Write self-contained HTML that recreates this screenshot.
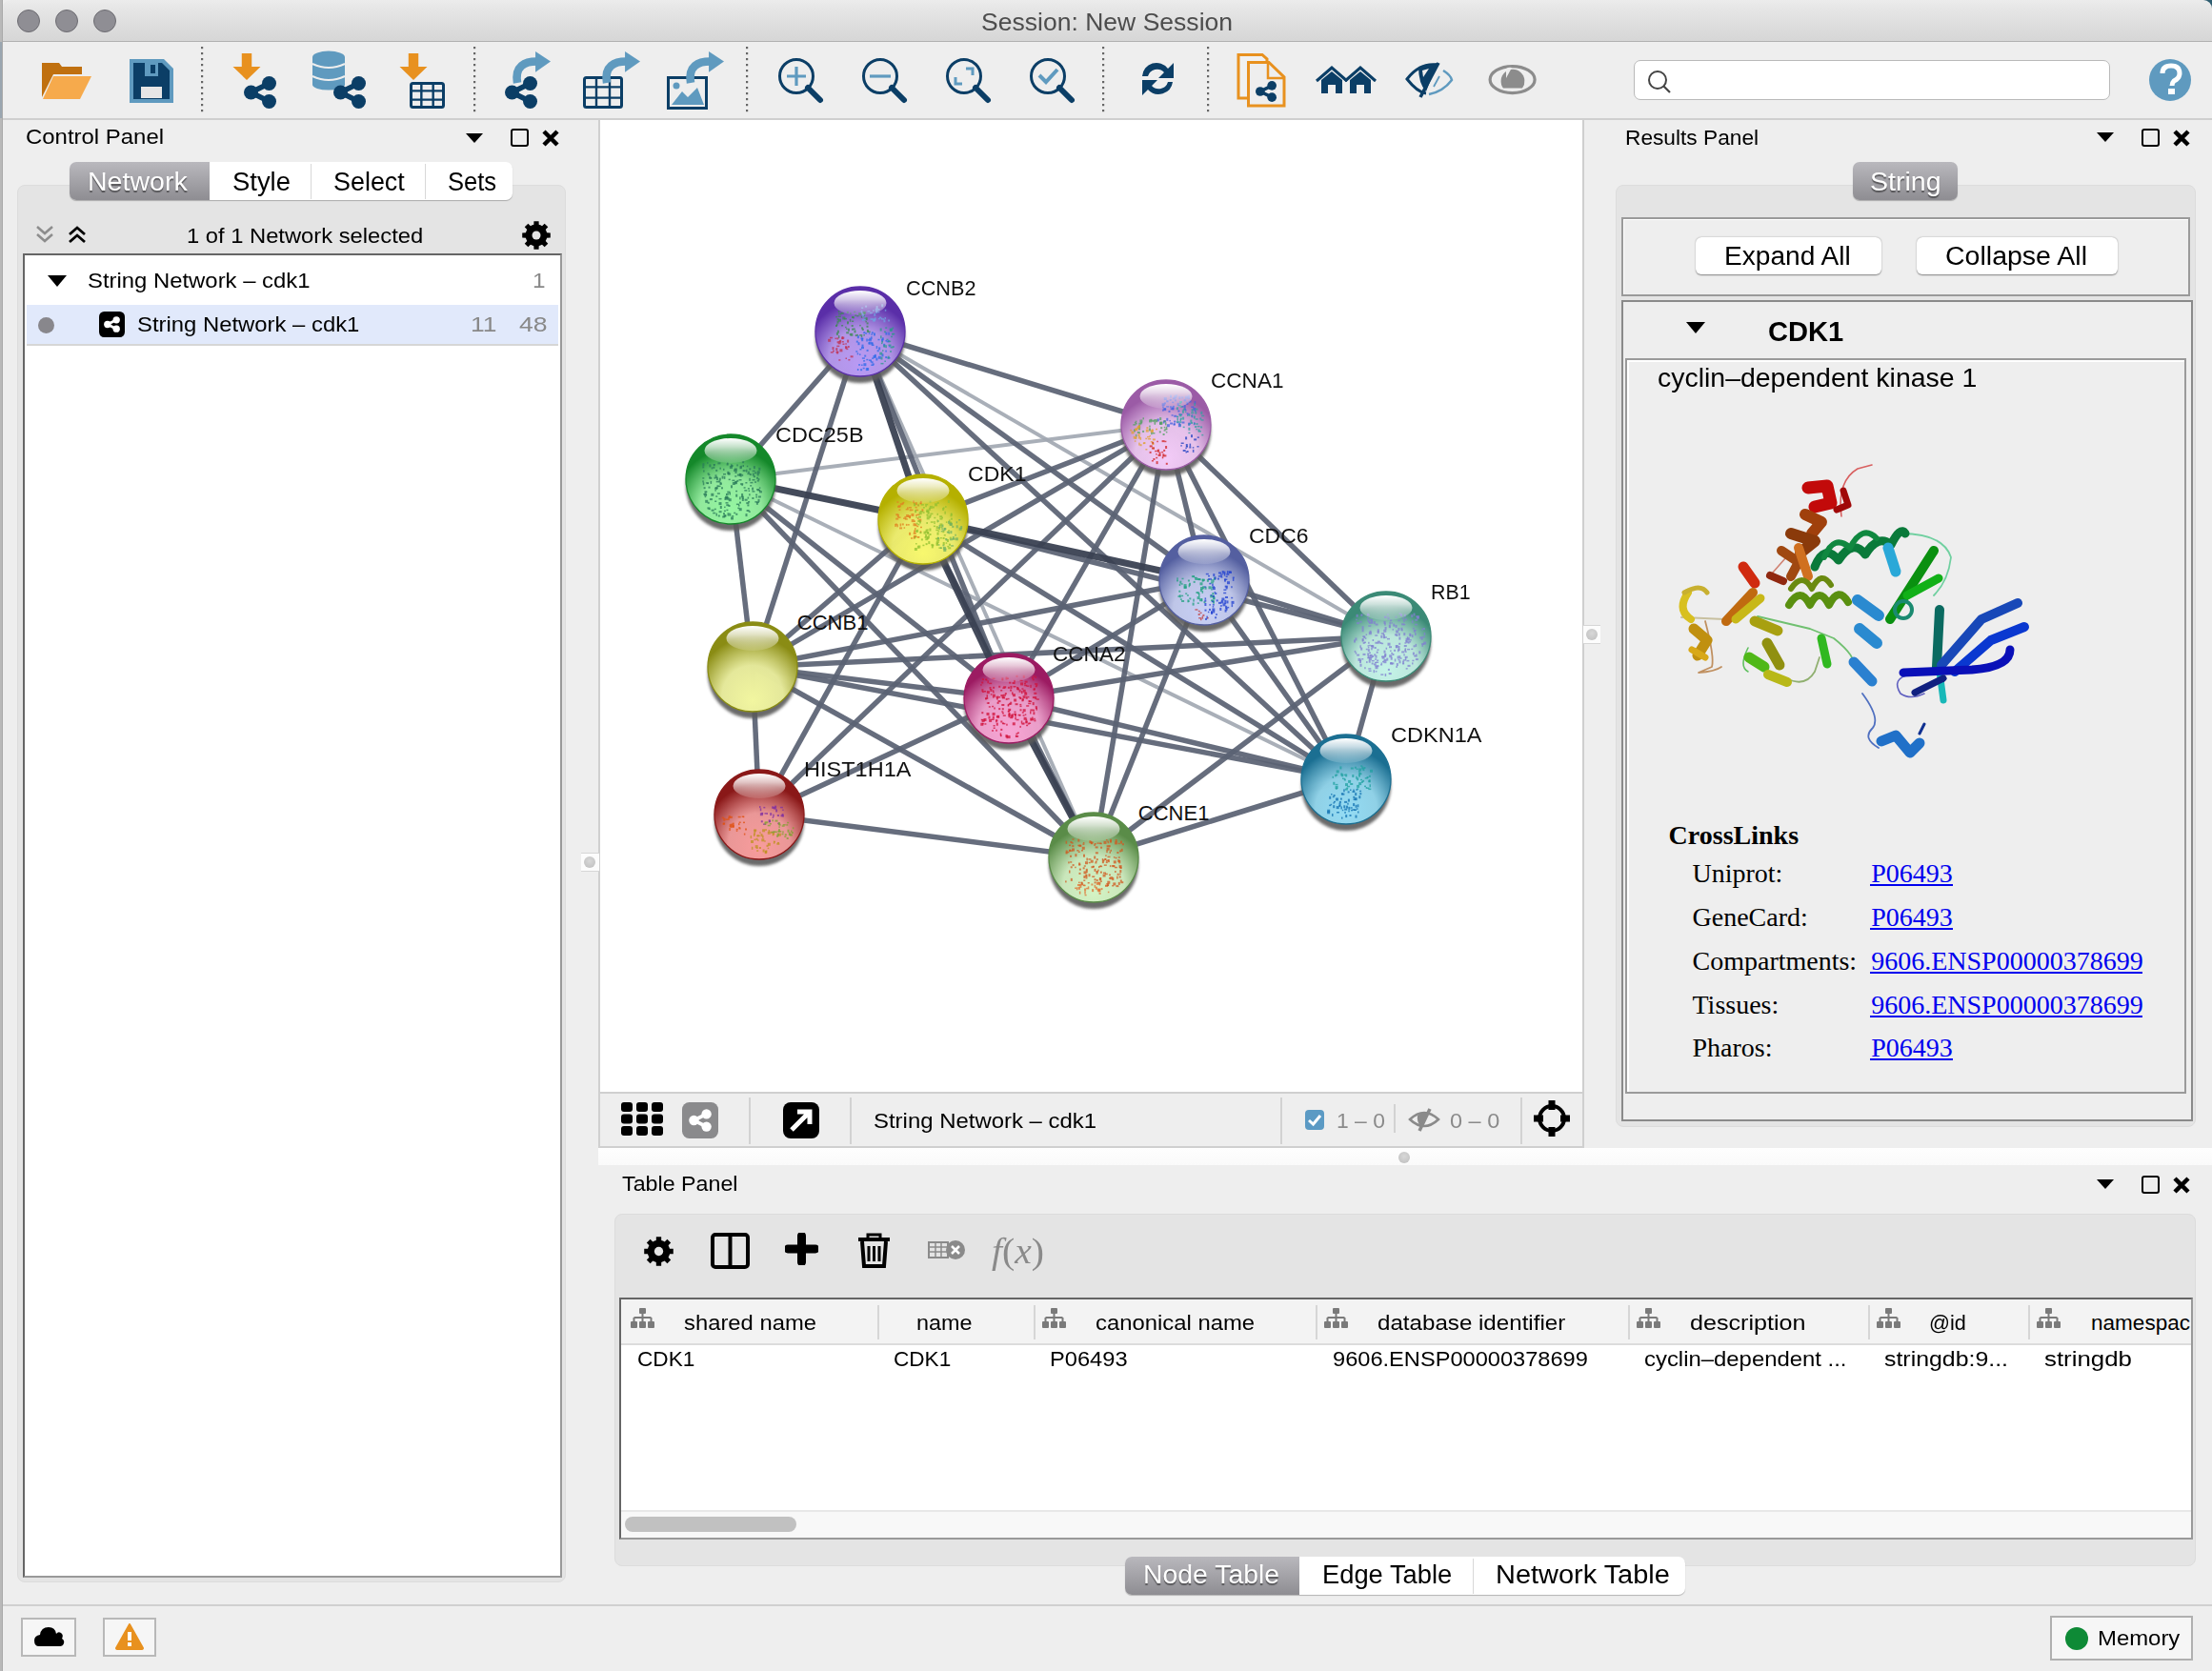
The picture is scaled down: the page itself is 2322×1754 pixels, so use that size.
<!DOCTYPE html><html><head><meta charset="utf-8"><style>
html,body{margin:0;padding:0;}
body{width:2322px;height:1754px;overflow:hidden;background:#eeeeee;position:relative;font-family:"Liberation Sans",sans-serif;}
.t{position:absolute;white-space:nowrap;line-height:normal;}
.r{position:absolute;box-sizing:border-box;}
</style></head><body><div class="r" style="left:0px;top:0px;width:2322px;height:1754px;background:#eeeeee;"></div><div class="r" style="left:0px;top:0px;width:2px;height:1754px;background:#b9b9b9;"></div><div class="r" style="left:0px;top:44px;width:2px;height:80px;background:#9aa6b0;"></div><div class="r" style="left:2px;top:0px;width:1px;height:1754px;background:#a9a9a9;"></div><div class="r" style="left:2290px;top:0px;width:32px;height:20px;background:#2e5d70;"></div><div class="r" style="left:2px;top:0px;width:2320px;height:44px;background:linear-gradient(#ececec,#e6e6e6 20%,#d6d6d6);border-radius:9px 9px 0 0;border-bottom:1px solid #b0b0b0;"></div><div class="r" style="left:2px;top:0px;width:1px;height:1754px;background:#a9a9a9;"></div><div class="r" style="left:18px;top:10px;width:24px;height:24px;border-radius:50%;background:#8f8e94;border:1px solid #6d6c72;"></div><div class="r" style="left:58px;top:10px;width:24px;height:24px;border-radius:50%;background:#8f8e94;border:1px solid #6d6c72;"></div><div class="r" style="left:98px;top:10px;width:24px;height:24px;border-radius:50%;background:#8f8e94;border:1px solid #6d6c72;"></div><div class="t " style="left:1029.90px;top:8.10px;font-size:26.3px;transform:scaleX(1.0092);transform-origin:0 0;color:#4d4d4d;font-family:'Liberation Sans',sans-serif;">Session: New Session</div><div class="r" style="left:3px;top:44px;width:2319px;height:82px;background:#eeeeee;border-bottom:2px solid #cfcfcf;"></div><svg class="r" style="left:0px;top:0px;" width="2322" height="125" viewBox="0 0 2322 125"><path d="M44 66h18l3 4h21v8H56l-12 24Z" fill="#c0700f"/><path d="M56 80H96L84 104H45Z" fill="#f6aa4c"/><path d="M136 62H172L182 72V108H136Z" fill="#5f9abf"/><path d="M140 66H170L178 74V104H140Z" fill="#0b3e66"/><rect x="148" y="91" width="22" height="12" fill="#e6e6e6"/><rect x="152" y="66" width="14" height="14" fill="#5f9abf"/><rect x="158" y="68" width="5" height="9" fill="#0b3e66"/><rect x="211" y="49" width="2.2" height="2.2" fill="#666"/><rect x="211" y="55" width="2.2" height="2.2" fill="#666"/><rect x="211" y="61" width="2.2" height="2.2" fill="#666"/><rect x="211" y="67" width="2.2" height="2.2" fill="#666"/><rect x="211" y="73" width="2.2" height="2.2" fill="#666"/><rect x="211" y="79" width="2.2" height="2.2" fill="#666"/><rect x="211" y="85" width="2.2" height="2.2" fill="#666"/><rect x="211" y="91" width="2.2" height="2.2" fill="#666"/><rect x="211" y="97" width="2.2" height="2.2" fill="#666"/><rect x="211" y="103" width="2.2" height="2.2" fill="#666"/><rect x="211" y="109" width="2.2" height="2.2" fill="#666"/><rect x="211" y="115" width="2.2" height="2.2" fill="#666"/><rect x="497" y="49" width="2.2" height="2.2" fill="#666"/><rect x="497" y="55" width="2.2" height="2.2" fill="#666"/><rect x="497" y="61" width="2.2" height="2.2" fill="#666"/><rect x="497" y="67" width="2.2" height="2.2" fill="#666"/><rect x="497" y="73" width="2.2" height="2.2" fill="#666"/><rect x="497" y="79" width="2.2" height="2.2" fill="#666"/><rect x="497" y="85" width="2.2" height="2.2" fill="#666"/><rect x="497" y="91" width="2.2" height="2.2" fill="#666"/><rect x="497" y="97" width="2.2" height="2.2" fill="#666"/><rect x="497" y="103" width="2.2" height="2.2" fill="#666"/><rect x="497" y="109" width="2.2" height="2.2" fill="#666"/><rect x="497" y="115" width="2.2" height="2.2" fill="#666"/><rect x="783" y="49" width="2.2" height="2.2" fill="#666"/><rect x="783" y="55" width="2.2" height="2.2" fill="#666"/><rect x="783" y="61" width="2.2" height="2.2" fill="#666"/><rect x="783" y="67" width="2.2" height="2.2" fill="#666"/><rect x="783" y="73" width="2.2" height="2.2" fill="#666"/><rect x="783" y="79" width="2.2" height="2.2" fill="#666"/><rect x="783" y="85" width="2.2" height="2.2" fill="#666"/><rect x="783" y="91" width="2.2" height="2.2" fill="#666"/><rect x="783" y="97" width="2.2" height="2.2" fill="#666"/><rect x="783" y="103" width="2.2" height="2.2" fill="#666"/><rect x="783" y="109" width="2.2" height="2.2" fill="#666"/><rect x="783" y="115" width="2.2" height="2.2" fill="#666"/><rect x="1157" y="49" width="2.2" height="2.2" fill="#666"/><rect x="1157" y="55" width="2.2" height="2.2" fill="#666"/><rect x="1157" y="61" width="2.2" height="2.2" fill="#666"/><rect x="1157" y="67" width="2.2" height="2.2" fill="#666"/><rect x="1157" y="73" width="2.2" height="2.2" fill="#666"/><rect x="1157" y="79" width="2.2" height="2.2" fill="#666"/><rect x="1157" y="85" width="2.2" height="2.2" fill="#666"/><rect x="1157" y="91" width="2.2" height="2.2" fill="#666"/><rect x="1157" y="97" width="2.2" height="2.2" fill="#666"/><rect x="1157" y="103" width="2.2" height="2.2" fill="#666"/><rect x="1157" y="109" width="2.2" height="2.2" fill="#666"/><rect x="1157" y="115" width="2.2" height="2.2" fill="#666"/><rect x="1267" y="49" width="2.2" height="2.2" fill="#666"/><rect x="1267" y="55" width="2.2" height="2.2" fill="#666"/><rect x="1267" y="61" width="2.2" height="2.2" fill="#666"/><rect x="1267" y="67" width="2.2" height="2.2" fill="#666"/><rect x="1267" y="73" width="2.2" height="2.2" fill="#666"/><rect x="1267" y="79" width="2.2" height="2.2" fill="#666"/><rect x="1267" y="85" width="2.2" height="2.2" fill="#666"/><rect x="1267" y="91" width="2.2" height="2.2" fill="#666"/><rect x="1267" y="97" width="2.2" height="2.2" fill="#666"/><rect x="1267" y="103" width="2.2" height="2.2" fill="#666"/><rect x="1267" y="109" width="2.2" height="2.2" fill="#666"/><rect x="1267" y="115" width="2.2" height="2.2" fill="#666"/><path d="M253.78 56H264.22V70.0H273.5L259 84L244.5 70.0H253.78Z" fill="#e8911f"/><g fill="#0b3e66" stroke="#0b3e66"><line x1="263.48" y1="97" x2="282.52" y2="87.48" stroke-width="5.44"/><line x1="263.48" y1="97" x2="282.52" y2="106.52" stroke-width="5.44"/><circle cx="263.48" cy="97" r="7.48" stroke="none"/><circle cx="282.52" cy="87.48" r="7.48" stroke="none"/><circle cx="282.52" cy="106.52" r="7.48" stroke="none"/></g><rect x="328" y="60" width="34" height="29" fill="#5f9abf"/><ellipse cx="345" cy="60" rx="17" ry="6.5" fill="#5f9abf"/><ellipse cx="345" cy="89" rx="17" ry="5.5" fill="#5f9abf"/><path d="M328 67Q345 75 362 67M328 80Q345 88 362 80" fill="none" stroke="#eeeeee" stroke-width="2.2"/><g fill="#0b3e66" stroke="#0b3e66"><line x1="357.48" y1="97" x2="376.52" y2="87.48" stroke-width="5.44"/><line x1="357.48" y1="97" x2="376.52" y2="106.52" stroke-width="5.44"/><circle cx="357.48" cy="97" r="7.48" stroke="none"/><circle cx="376.52" cy="87.48" r="7.48" stroke="none"/><circle cx="376.52" cy="106.52" r="7.48" stroke="none"/></g><path d="M428.78 56H439.22V70.0H448.5L434 84L419.5 70.0H428.78Z" fill="#e8911f"/><rect x="431.5" y="87.5" width="34" height="25" rx="2" fill="none" stroke="#0b3e66" stroke-width="3"/><line x1="442.3333333333333" y1="86" x2="442.3333333333333" y2="114" stroke="#0b3e66" stroke-width="2.4000000000000004"/><line x1="454.6666666666667" y1="86" x2="454.6666666666667" y2="114" stroke="#0b3e66" stroke-width="2.4000000000000004"/><line x1="430" y1="95.33333333333333" x2="467" y2="95.33333333333333" stroke="#0b3e66" stroke-width="2.4000000000000004"/><line x1="430" y1="104.66666666666667" x2="467" y2="104.66666666666667" stroke="#0b3e66" stroke-width="2.4000000000000004"/><path d="M543.04 87 C540.0 68.85 551.4 64.56 563.56 64.56" fill="none" stroke="#5f9abf" stroke-width="8.58"/><path d="M562.04 54 L578 64.56 L562.04 75.78Z" fill="#5f9abf"/><g fill="#0b3e66" stroke="#0b3e66"><line x1="537.48" y1="97" x2="556.52" y2="87.48" stroke-width="5.44"/><line x1="537.48" y1="97" x2="556.52" y2="106.52" stroke-width="5.44"/><circle cx="537.48" cy="97" r="7.48" stroke="none"/><circle cx="556.52" cy="87.48" r="7.48" stroke="none"/><circle cx="556.52" cy="106.52" r="7.48" stroke="none"/></g><rect x="613.5" y="81.5" width="39" height="31" rx="2" fill="none" stroke="#0b3e66" stroke-width="3"/><line x1="626.0" y1="80" x2="626.0" y2="114" stroke="#0b3e66" stroke-width="2.4000000000000004"/><line x1="640.0" y1="80" x2="640.0" y2="114" stroke="#0b3e66" stroke-width="2.4000000000000004"/><line x1="612" y1="91.33333333333333" x2="654" y2="91.33333333333333" stroke="#0b3e66" stroke-width="2.4000000000000004"/><line x1="612" y1="102.66666666666667" x2="654" y2="102.66666666666667" stroke="#0b3e66" stroke-width="2.4000000000000004"/><path d="M637.04 87 C634.0 68.85 645.4 64.56 657.56 64.56" fill="none" stroke="#5f9abf" stroke-width="8.58"/><path d="M656.04 54 L672 64.56 L656.04 75.78Z" fill="#5f9abf"/><rect x="701.5" y="81.5" width="40" height="32" fill="none" stroke="#0b3e66" stroke-width="3"/><path d="M705 110L716 96L722 102L732 92L739 110Z" fill="#5f9abf"/><circle cx="710" cy="90" r="3.5" fill="#5f9abf"/><path d="M725.04 87 C722.0 68.85 733.4 64.56 745.56 64.56" fill="none" stroke="#5f9abf" stroke-width="8.58"/><path d="M744.04 54 L760 64.56 L744.04 75.78Z" fill="#5f9abf"/><circle cx="836" cy="80" r="17.5" fill="none" stroke="#0b3e66" stroke-width="3"/><line x1="848" y1="92" x2="861" y2="105" stroke="#0b3e66" stroke-width="6" stroke-linecap="round"/><path d="M836 70V90M826 80H846" stroke="#5f9abf" stroke-width="3.2"/><circle cx="924" cy="80" r="17.5" fill="none" stroke="#0b3e66" stroke-width="3"/><line x1="936" y1="92" x2="949" y2="105" stroke="#0b3e66" stroke-width="6" stroke-linecap="round"/><path d="M913 80H935" stroke="#5f9abf" stroke-width="3.2"/><circle cx="1012" cy="80" r="17.5" fill="none" stroke="#0b3e66" stroke-width="3"/><line x1="1024" y1="92" x2="1037" y2="105" stroke="#0b3e66" stroke-width="6" stroke-linecap="round"/><path d="M1003 81V88H1010M1014 72H1021V79" fill="none" stroke="#5f9abf" stroke-width="3"/><circle cx="1100" cy="80" r="17.5" fill="none" stroke="#0b3e66" stroke-width="3"/><line x1="1112" y1="92" x2="1125" y2="105" stroke="#0b3e66" stroke-width="6" stroke-linecap="round"/><path d="M1091 79L1098 86L1110 73" fill="none" stroke="#5f9abf" stroke-width="4"/><path d="M1199 100V84H1215L1209 90A10 10 0 0 0 1226 86L1231 86A15 15 0 0 1 1205 94Z" fill="#0b3e66"/><path d="M1232 66V82H1216L1222 76A10 10 0 0 0 1205 80L1199 80A15 15 0 0 1 1226 72Z" fill="#0b3e66"/><path d="M1300 57.5H1325L1330 62V103H1300Z" fill="#f1f1f1" stroke="#e8911f" stroke-width="3"/><path d="M1310.5 65.5H1332L1348 81V111H1310.5Z" fill="#eeeeee" stroke="#e8911f" stroke-width="3"/><path d="M1331 65V82H1348" fill="none" stroke="#e8911f" stroke-width="2.5"/><g fill="#0b3e66" stroke="#0b3e66"><line x1="1322.84" y1="96" x2="1335.16" y2="89.84" stroke-width="3.52"/><line x1="1322.84" y1="96" x2="1335.16" y2="102.16" stroke-width="3.52"/><circle cx="1322.84" cy="96" r="4.84" stroke="none"/><circle cx="1335.16" cy="89.84" r="4.84" stroke="none"/><circle cx="1335.16" cy="102.16" r="4.84" stroke="none"/></g><path d="M1382 85L1398 71L1414 85" fill="none" stroke="#0b3e66" stroke-width="3"/><path d="M1387 84L1398 75L1409 84V98H1402V89H1394V98H1387Z" fill="#0b3e66"/><path d="M1412 85L1428 71L1444 85" fill="none" stroke="#0b3e66" stroke-width="3"/><path d="M1417 84L1428 75L1439 84V98H1432V89H1424V98H1417Z" fill="#0b3e66"/><path d="M1508 68Q1490 66 1477 83Q1488 97 1497 98" fill="none" stroke="#0b3e66" stroke-width="3"/><path d="M1489 70L1509 66L1497 96Q1489 88 1489 70Z" fill="#0b3e66"/><path d="M1510 66L1491 102" stroke="#0b3e66" stroke-width="3.5"/><path d="M1493 74L1500 72L1494 81Z" fill="#eee"/><path d="M1515 74Q1523 79 1524 84Q1515 96 1500 99" fill="none" stroke="#5f9abf" stroke-width="2.5"/><path d="M1511 80L1505 91" stroke="#5f9abf" stroke-width="1.8"/><ellipse cx="1587.6" cy="83.6" rx="23.5" ry="14" fill="none" stroke="#8c8c8c" stroke-width="3.2"/><path d="M1578 92.5A12.4 12.4 0 1 1 1598 92.5Z" fill="#8c8c8c"/><path d="M1581 72Q1584 70 1587 71L1581 82Z" fill="#eee"/><circle cx="2278" cy="84" r="22" fill="#5f9abf"/><path d="M2270 77Q2270 69 2279 69Q2288 69 2288 77Q2288 82 2282 85Q2280 87 2280 90" fill="none" stroke="#fff" stroke-width="5"/><rect x="2276" y="93" width="7" height="6" fill="#fff"/></svg><div class="r" style="left:1715px;top:63px;width:500px;height:42px;background:#fff;border:1.5px solid #b9b9b9;border-radius:7px;"></div><svg class="r" style="left:1728px;top:72px;" width="30" height="30" viewBox="0 0 30 30"><circle cx="12" cy="12" r="9" fill="none" stroke="#444" stroke-width="2"/><line x1="18.5" y1="18.5" x2="25" y2="25" stroke="#444" stroke-width="2.2"/></svg><div class="t " style="left:27.20px;top:131.45px;font-size:22.6px;transform:scaleX(1.0595);transform-origin:0 0;color:#000;font-family:'Liberation Sans',sans-serif;">Control Panel</div><svg class="r" style="left:489px;top:140px;" width="18" height="10" viewBox="0 0 18 10"><path d="M0 0H18L9 10Z" fill="#000"/></svg><div class="r" style="left:536px;top:135px;width:19px;height:19px;border:2px solid #000;border-radius:3px;"></div><svg class="r" style="left:569px;top:136px;" width="18" height="18" viewBox="0 0 18 18"><path d="M2 2L16 16M16 2L2 16" stroke="#000" stroke-width="4.5"/></svg><div class="r" style="left:18px;top:194px;width:576px;height:1467px;background:#e4e4e4;border-radius:8px;border:1px solid #dcdcdc;"></div><div class="r" style="left:73px;top:170px;width:465px;height:40px;background:#fff;border-radius:7px;box-shadow:0 1px 1px rgba(0,0,0,0.25);"></div><div class="r" style="left:73px;top:170px;width:147px;height:40px;background:linear-gradient(#b9b8bd,#8e8d92);border-radius:7px 0 0 7px;"></div><div class="r" style="left:326px;top:172px;width:1px;height:37px;background:#d8d8d8;"></div><div class="r" style="left:446px;top:172px;width:1px;height:37px;background:#d8d8d8;"></div><div class="t " style="left:92.40px;top:175.76px;font-size:27px;transform:scaleX(1.0572);transform-origin:0 0;color:#fff;font-family:'Liberation Sans',sans-serif;text-shadow:0 1.5px 1px rgba(0,0,0,0.45);">Network</div><div class="t " style="left:243.50px;top:175.76px;font-size:27px;transform:scaleX(1.0154);transform-origin:0 0;color:#000;font-family:'Liberation Sans',sans-serif;">Style</div><div class="t " style="left:349.60px;top:175.76px;font-size:27px;transform:scaleX(0.9965);transform-origin:0 0;color:#000;font-family:'Liberation Sans',sans-serif;">Select</div><div class="t " style="left:469.60px;top:175.76px;font-size:27px;transform:scaleX(0.9463);transform-origin:0 0;color:#000;font-family:'Liberation Sans',sans-serif;">Sets</div><svg class="r" style="left:36px;top:235px;" width="22" height="22" viewBox="0 0 22 22"><path d="M3 3L11 10L19 3M3 11L11 18L19 11" fill="none" stroke="#8d8d8d" stroke-width="2.5"/></svg><svg class="r" style="left:70px;top:235px;" width="22" height="22" viewBox="0 0 22 22"><path d="M3 11L11 4L19 11M3 19L11 12L19 19" fill="none" stroke="#000" stroke-width="2.8"/></svg><div class="t " style="left:195.60px;top:233.57px;font-size:22.8px;transform:scaleX(1.0417);transform-origin:0 0;color:#000;font-family:'Liberation Sans',sans-serif;">1 of 1 Network selected</div><svg class="r" style="left:548px;top:232px;" width="30" height="30" viewBox="0 0 30 30"><path d="M25.47 12.34 L29.78 12.42 L29.78 17.58 L25.47 17.66 L24.28 20.53 L27.27 23.63 L23.63 27.27 L20.53 24.28 L17.66 25.47 L17.58 29.78 L12.42 29.78 L12.34 25.47 L9.47 24.28 L6.37 27.27 L2.73 23.63 L5.72 20.53 L4.53 17.66 L0.22 17.58 L0.22 12.42 L4.53 12.34 L5.72 9.47 L2.73 6.37 L6.37 2.73 L9.47 5.72 L12.34 4.53 L12.42 0.22 L17.58 0.22 L17.66 4.53 L20.53 5.72 L23.63 2.73 L27.27 6.37 L24.28 9.47Z" fill="#000"/><circle cx="15.0" cy="15.0" r="11.4" fill="#000"/><circle cx="15.0" cy="15.0" r="4.5" fill="#e4e4e4"/></svg><div class="r" style="left:24px;top:266px;width:566px;height:1390px;background:#fff;border:2px solid #656565;border-bottom-color:#999;border-right-color:#999;"></div><div class="t " style="left:91.70px;top:281.55px;font-size:22.6px;transform:scaleX(1.0564);transform-origin:0 0;color:#000;font-family:'Liberation Sans',sans-serif;">String Network – cdk1</div><svg class="r" style="left:50px;top:289px;" width="20" height="12" viewBox="0 0 20 12"><path d="M0 0H20L10 12Z" fill="#000"/></svg><div class="t " style="left:559.40px;top:281.55px;font-size:22.6px;transform:scaleX(1.0763);transform-origin:0 0;color:#888;font-family:'Liberation Sans',sans-serif;">1</div><div class="r" style="left:28px;top:320px;width:558px;height:43px;background:#e1e9fb;border-bottom:2px solid #d6d6d6;"></div><div class="r" style="left:40px;top:333px;width:17px;height:17px;border-radius:50%;background:#88878c;"></div><svg class="r" style="left:104px;top:327px;" width="27" height="27" viewBox="0 0 27 27"><rect width="27" height="27" rx="5.4" fill="#000"/><g fill="#fff" stroke="#fff"><line x1="8.812800000000001" y1="13.5" x2="18.187199999999997" y2="8.812800000000001" stroke-width="2.6784"/><line x1="8.812800000000001" y1="13.5" x2="18.187199999999997" y2="18.187199999999997" stroke-width="2.6784"/><circle cx="8.812800000000001" cy="13.5" r="3.6828" stroke="none"/><circle cx="18.187199999999997" cy="8.812800000000001" r="3.6828" stroke="none"/><circle cx="18.187199999999997" cy="18.187199999999997" r="3.6828" stroke="none"/></g></svg><div class="t " style="left:143.70px;top:327.85px;font-size:22.6px;transform:scaleX(1.0560);transform-origin:0 0;color:#000;font-family:'Liberation Sans',sans-serif;">String Network – cdk1</div><div class="t " style="left:494.30px;top:327.85px;font-size:22.6px;transform:scaleX(1.1700);transform-origin:0 0;color:#888;font-family:'Liberation Sans',sans-serif;">11</div><div class="t " style="left:544.80px;top:327.85px;font-size:22.6px;transform:scaleX(1.1760);transform-origin:0 0;color:#888;font-family:'Liberation Sans',sans-serif;">48</div><div class="r" style="left:628px;top:126px;width:2px;height:1080px;background:#d0d0d0;"></div><div class="r" style="left:610px;top:895px;width:19px;height:20px;background:#fcfcfc;border-top:1px solid #d6d6d6;border-bottom:1px solid #d6d6d6;"></div><div class="r" style="left:613px;top:899px;width:12px;height:12px;border-radius:50%;background:radial-gradient(circle at 50% 40%,#d8d8d8,#bdbdbd);"></div><div class="r" style="left:630px;top:126px;width:1031px;height:1021px;background:#fff;"></div><svg class="r" style="left:0px;top:0px;pointer-events:none;" width="2322" height="1754" viewBox="0 0 2322 1754"><defs><radialGradient id="gB2" cx="50%" cy="78%" r="62%" fx="50%" fy="88%"><stop offset="0" stop-color="#b99af4"/><stop offset="0.55" stop-color="#b99af4" stop-opacity="0.9"/><stop offset="1" stop-color="#5a2ea8"/></radialGradient><radialGradient id="gA1" cx="50%" cy="78%" r="62%" fx="50%" fy="88%"><stop offset="0" stop-color="#f3cbf8"/><stop offset="0.55" stop-color="#f3cbf8" stop-opacity="0.9"/><stop offset="1" stop-color="#9b5ba6"/></radialGradient><radialGradient id="gC25" cx="50%" cy="78%" r="62%" fx="50%" fy="88%"><stop offset="0" stop-color="#96f7a2"/><stop offset="0.55" stop-color="#96f7a2" stop-opacity="0.9"/><stop offset="1" stop-color="#14882a"/></radialGradient><radialGradient id="gK1" cx="50%" cy="78%" r="62%" fx="50%" fy="88%"><stop offset="0" stop-color="#f8f86e"/><stop offset="0.55" stop-color="#f8f86e" stop-opacity="0.9"/><stop offset="1" stop-color="#b5b000"/></radialGradient><radialGradient id="gC6" cx="50%" cy="78%" r="62%" fx="50%" fy="88%"><stop offset="0" stop-color="#c8d0f6"/><stop offset="0.55" stop-color="#c8d0f6" stop-opacity="0.9"/><stop offset="1" stop-color="#545fa0"/></radialGradient><radialGradient id="gRB" cx="50%" cy="78%" r="62%" fx="50%" fy="88%"><stop offset="0" stop-color="#c4f4e8"/><stop offset="0.55" stop-color="#c4f4e8" stop-opacity="0.9"/><stop offset="1" stop-color="#3b8a76"/></radialGradient><radialGradient id="gB1" cx="50%" cy="78%" r="62%" fx="50%" fy="88%"><stop offset="0" stop-color="#f2f6a0"/><stop offset="0.55" stop-color="#f2f6a0" stop-opacity="0.9"/><stop offset="1" stop-color="#8a8c14"/></radialGradient><radialGradient id="gA2" cx="50%" cy="78%" r="62%" fx="50%" fy="88%"><stop offset="0" stop-color="#f8a4d4"/><stop offset="0.55" stop-color="#f8a4d4" stop-opacity="0.9"/><stop offset="1" stop-color="#9c1b62"/></radialGradient><radialGradient id="gP21" cx="50%" cy="78%" r="62%" fx="50%" fy="88%"><stop offset="0" stop-color="#94dcf4"/><stop offset="0.55" stop-color="#94dcf4" stop-opacity="0.9"/><stop offset="1" stop-color="#1b6f92"/></radialGradient><radialGradient id="gH1" cx="50%" cy="78%" r="62%" fx="50%" fy="88%"><stop offset="0" stop-color="#f89c9c"/><stop offset="0.55" stop-color="#f89c9c" stop-opacity="0.9"/><stop offset="1" stop-color="#8a1818"/></radialGradient><radialGradient id="gE1" cx="50%" cy="78%" r="62%" fx="50%" fy="88%"><stop offset="0" stop-color="#d4f4c4"/><stop offset="0.55" stop-color="#d4f4c4" stop-opacity="0.9"/><stop offset="1" stop-color="#5a8c48"/></radialGradient><linearGradient id="hl" x1="0" y1="0" x2="0" y2="1"><stop offset="0" stop-color="#fff" stop-opacity="1"/><stop offset="0.35" stop-color="#fff" stop-opacity="0.75"/><stop offset="1" stop-color="#fff" stop-opacity="0.1"/></linearGradient><filter id="blur" x="-20%" y="-20%" width="140%" height="140%"><feGaussianBlur stdDeviation="1.5"/></filter></defs><line x1="903" y1="348" x2="1455" y2="668" stroke="#a0a6b0" stroke-width="4" stroke-opacity="0.9"/><line x1="903" y1="348" x2="1148" y2="900" stroke="#a0a6b0" stroke-width="4" stroke-opacity="0.9"/><line x1="1224" y1="446" x2="767" y2="503" stroke="#a0a6b0" stroke-width="4" stroke-opacity="0.9"/><line x1="767" y1="503" x2="1413" y2="818" stroke="#a0a6b0" stroke-width="4" stroke-opacity="0.9"/><line x1="903" y1="348" x2="1224" y2="446" stroke="#5a6273" stroke-width="5.5" stroke-opacity="0.93"/><line x1="903" y1="348" x2="767" y2="503" stroke="#5a6273" stroke-width="5.5" stroke-opacity="0.93"/><line x1="903" y1="348" x2="1264" y2="609" stroke="#5a6273" stroke-width="5.5" stroke-opacity="0.93"/><line x1="903" y1="348" x2="790" y2="700" stroke="#5a6273" stroke-width="5.5" stroke-opacity="0.93"/><line x1="903" y1="348" x2="1059" y2="733" stroke="#5a6273" stroke-width="5.5" stroke-opacity="0.93"/><line x1="903" y1="348" x2="1413" y2="818" stroke="#5a6273" stroke-width="5.5" stroke-opacity="0.93"/><line x1="1224" y1="446" x2="969" y2="545" stroke="#5a6273" stroke-width="5.5" stroke-opacity="0.93"/><line x1="1224" y1="446" x2="1264" y2="609" stroke="#5a6273" stroke-width="5.5" stroke-opacity="0.93"/><line x1="1224" y1="446" x2="1455" y2="668" stroke="#5a6273" stroke-width="5.5" stroke-opacity="0.93"/><line x1="1224" y1="446" x2="790" y2="700" stroke="#5a6273" stroke-width="5.5" stroke-opacity="0.93"/><line x1="1224" y1="446" x2="1059" y2="733" stroke="#5a6273" stroke-width="5.5" stroke-opacity="0.93"/><line x1="1224" y1="446" x2="1413" y2="818" stroke="#5a6273" stroke-width="5.5" stroke-opacity="0.93"/><line x1="1224" y1="446" x2="797" y2="855" stroke="#5a6273" stroke-width="5.5" stroke-opacity="0.93"/><line x1="1224" y1="446" x2="1148" y2="900" stroke="#5a6273" stroke-width="5.5" stroke-opacity="0.93"/><line x1="767" y1="503" x2="790" y2="700" stroke="#5a6273" stroke-width="5.5" stroke-opacity="0.93"/><line x1="767" y1="503" x2="1059" y2="733" stroke="#5a6273" stroke-width="5.5" stroke-opacity="0.93"/><line x1="767" y1="503" x2="1148" y2="900" stroke="#5a6273" stroke-width="5.5" stroke-opacity="0.93"/><line x1="969" y1="545" x2="1455" y2="668" stroke="#5a6273" stroke-width="5.5" stroke-opacity="0.93"/><line x1="969" y1="545" x2="790" y2="700" stroke="#5a6273" stroke-width="5.5" stroke-opacity="0.93"/><line x1="969" y1="545" x2="1413" y2="818" stroke="#5a6273" stroke-width="5.5" stroke-opacity="0.93"/><line x1="969" y1="545" x2="797" y2="855" stroke="#5a6273" stroke-width="5.5" stroke-opacity="0.93"/><line x1="969" y1="545" x2="1148" y2="900" stroke="#5a6273" stroke-width="5.5" stroke-opacity="0.93"/><line x1="1264" y1="609" x2="1455" y2="668" stroke="#5a6273" stroke-width="5.5" stroke-opacity="0.93"/><line x1="1264" y1="609" x2="790" y2="700" stroke="#5a6273" stroke-width="5.5" stroke-opacity="0.93"/><line x1="1264" y1="609" x2="1059" y2="733" stroke="#5a6273" stroke-width="5.5" stroke-opacity="0.93"/><line x1="1264" y1="609" x2="1413" y2="818" stroke="#5a6273" stroke-width="5.5" stroke-opacity="0.93"/><line x1="1264" y1="609" x2="1148" y2="900" stroke="#5a6273" stroke-width="5.5" stroke-opacity="0.93"/><line x1="1455" y1="668" x2="790" y2="700" stroke="#5a6273" stroke-width="5.5" stroke-opacity="0.93"/><line x1="1455" y1="668" x2="1059" y2="733" stroke="#5a6273" stroke-width="5.5" stroke-opacity="0.93"/><line x1="1455" y1="668" x2="1413" y2="818" stroke="#5a6273" stroke-width="5.5" stroke-opacity="0.93"/><line x1="1455" y1="668" x2="1148" y2="900" stroke="#5a6273" stroke-width="5.5" stroke-opacity="0.93"/><line x1="790" y1="700" x2="1059" y2="733" stroke="#5a6273" stroke-width="5.5" stroke-opacity="0.93"/><line x1="790" y1="700" x2="1413" y2="818" stroke="#5a6273" stroke-width="5.5" stroke-opacity="0.93"/><line x1="790" y1="700" x2="797" y2="855" stroke="#5a6273" stroke-width="5.5" stroke-opacity="0.93"/><line x1="790" y1="700" x2="1148" y2="900" stroke="#5a6273" stroke-width="5.5" stroke-opacity="0.93"/><line x1="1059" y1="733" x2="1413" y2="818" stroke="#5a6273" stroke-width="5.5" stroke-opacity="0.93"/><line x1="1059" y1="733" x2="797" y2="855" stroke="#5a6273" stroke-width="5.5" stroke-opacity="0.93"/><line x1="1413" y1="818" x2="1148" y2="900" stroke="#5a6273" stroke-width="5.5" stroke-opacity="0.93"/><line x1="797" y1="855" x2="1148" y2="900" stroke="#5a6273" stroke-width="5.5" stroke-opacity="0.93"/><line x1="903" y1="348" x2="969" y2="545" stroke="#3a4152" stroke-width="7" stroke-opacity="0.95"/><line x1="767" y1="503" x2="969" y2="545" stroke="#3a4152" stroke-width="7" stroke-opacity="0.95"/><line x1="969" y1="545" x2="1264" y2="609" stroke="#3a4152" stroke-width="7" stroke-opacity="0.95"/><line x1="969" y1="545" x2="1059" y2="733" stroke="#3a4152" stroke-width="7" stroke-opacity="0.95"/><line x1="1059" y1="733" x2="1148" y2="900" stroke="#3a4152" stroke-width="7" stroke-opacity="0.95"/><circle cx="903" cy="355" r="47" fill="#5a5a5a" opacity="0.9" filter="url(#blur)"/><circle cx="903" cy="348" r="47" fill="url(#gB2)" stroke="#5a2ea8" stroke-width="1.3"/><rect x="896.2" y="326.6" width="2" height="1.5" fill="#3a8a50" opacity="0.75"/><rect x="899.4" y="330.9" width="2" height="1.5" fill="#3a8a50" opacity="0.75"/><rect x="902.1" y="351.1" width="2" height="1.5" fill="#3a8a50" opacity="0.75"/><rect x="882.7" y="327.8" width="3" height="2" fill="#3a8a50" opacity="0.75"/><rect x="877.9" y="348.9" width="2" height="3" fill="#3a8a50" opacity="0.75"/><rect x="891.8" y="334.8" width="1.5" height="3" fill="#3a8a50" opacity="0.75"/><rect x="899.4" y="350.8" width="1.5" height="2" fill="#3a8a50" opacity="0.75"/><rect x="878.9" y="346.7" width="2" height="3" fill="#3a8a50" opacity="0.75"/><rect x="889.9" y="344.7" width="2" height="3" fill="#3a8a50" opacity="0.75"/><rect x="889.5" y="337.6" width="1.5" height="2" fill="#3a8a50" opacity="0.75"/><rect x="909.6" y="338.4" width="2" height="2" fill="#3a8a50" opacity="0.75"/><rect x="883.1" y="341.0" width="2" height="1.5" fill="#3a8a50" opacity="0.75"/><rect x="905.6" y="327.2" width="3" height="3" fill="#3a8a50" opacity="0.75"/><rect x="908.4" y="336.9" width="1.5" height="1.5" fill="#3a8a50" opacity="0.75"/><rect x="910.7" y="347.5" width="3" height="1.5" fill="#3a8a50" opacity="0.75"/><rect x="888.2" y="348.3" width="3" height="2" fill="#3a8a50" opacity="0.75"/><rect x="903.8" y="331.8" width="1.5" height="2" fill="#3a8a50" opacity="0.75"/><rect x="908.7" y="333.2" width="2" height="3" fill="#3a8a50" opacity="0.75"/><rect x="885.9" y="333.9" width="3" height="1.5" fill="#3a8a50" opacity="0.75"/><rect x="909.5" y="341.8" width="2" height="2" fill="#3a8a50" opacity="0.75"/><rect x="879.9" y="352.1" width="1.5" height="3" fill="#3a8a50" opacity="0.75"/><rect x="907.1" y="333.3" width="2" height="3" fill="#3a8a50" opacity="0.75"/><rect x="891.7" y="350.3" width="2" height="1.5" fill="#3a8a50" opacity="0.75"/><rect x="894.9" y="332.3" width="2" height="2" fill="#3a8a50" opacity="0.75"/><rect x="894.1" y="336.5" width="2" height="1.5" fill="#3a8a50" opacity="0.75"/><rect x="878.6" y="334.1" width="2" height="2" fill="#3a8a50" opacity="0.75"/><rect x="892.1" y="328.3" width="1.5" height="1.5" fill="#3a8a50" opacity="0.75"/><rect x="887.1" y="342.8" width="1.5" height="1.5" fill="#3a8a50" opacity="0.75"/><rect x="878.5" y="336.6" width="2" height="3" fill="#3a8a50" opacity="0.75"/><rect x="902.2" y="340.9" width="1.5" height="1.5" fill="#3a8a50" opacity="0.75"/><rect x="884.3" y="332.4" width="3" height="3" fill="#3a8a50" opacity="0.75"/><rect x="880.1" y="328.9" width="3" height="1.5" fill="#3a8a50" opacity="0.75"/><rect x="897.3" y="330.2" width="2" height="1.5" fill="#3a8a50" opacity="0.75"/><rect x="904.1" y="343.4" width="2" height="2" fill="#3a8a50" opacity="0.75"/><rect x="896.5" y="346.4" width="2" height="3" fill="#3a8a50" opacity="0.75"/><rect x="877.0" y="341.0" width="2" height="2" fill="#3a8a50" opacity="0.75"/><rect x="893.7" y="341.0" width="2" height="2" fill="#3a8a50" opacity="0.75"/><rect x="877.2" y="331.9" width="2" height="1.5" fill="#3a8a50" opacity="0.75"/><rect x="894.1" y="344.7" width="2" height="2" fill="#3a8a50" opacity="0.75"/><rect x="897.7" y="351.1" width="2" height="2" fill="#3a8a50" opacity="0.75"/><rect x="909.9" y="345.9" width="2" height="3" fill="#3a8a50" opacity="0.75"/><rect x="905.9" y="331.1" width="2" height="1.5" fill="#3a8a50" opacity="0.75"/><rect x="889.1" y="337.4" width="1.5" height="3" fill="#3a8a50" opacity="0.75"/><rect x="906.4" y="351.0" width="1.5" height="1.5" fill="#3a8a50" opacity="0.75"/><rect x="894.0" y="332.0" width="2" height="2" fill="#3a8a50" opacity="0.75"/><rect x="888.1" y="344.5" width="1.5" height="1.5" fill="#3a8a50" opacity="0.75"/><rect x="888.8" y="326.8" width="2" height="2" fill="#3a8a50" opacity="0.75"/><rect x="892.4" y="349.8" width="3" height="3" fill="#3a8a50" opacity="0.75"/><rect x="879.7" y="331.5" width="3" height="1.5" fill="#3a8a50" opacity="0.75"/><rect x="877.9" y="339.8" width="1.5" height="2" fill="#3a8a50" opacity="0.75"/><rect x="904.8" y="344.9" width="2" height="2" fill="#3a8a50" opacity="0.75"/><rect x="906.5" y="327.1" width="2" height="1.5" fill="#3a8a50" opacity="0.75"/><rect x="903.8" y="351.1" width="1.5" height="3" fill="#3a8a50" opacity="0.75"/><rect x="895.7" y="344.5" width="2" height="1.5" fill="#3a8a50" opacity="0.75"/><rect x="879.8" y="326.1" width="1.5" height="2" fill="#3a8a50" opacity="0.75"/><rect x="880.0" y="334.7" width="3" height="3" fill="#3a8a50" opacity="0.75"/><rect x="901.2" y="328.1" width="3" height="3" fill="#3a8a50" opacity="0.75"/><rect x="874.0" y="367.7" width="2" height="1.5" fill="#c03050" opacity="0.75"/><rect x="883.8" y="358.0" width="2" height="1.5" fill="#c03050" opacity="0.75"/><rect x="883.7" y="353.1" width="1.5" height="3" fill="#c03050" opacity="0.75"/><rect x="890.4" y="377.0" width="2" height="1.5" fill="#c03050" opacity="0.75"/><rect x="871.8" y="369.1" width="3" height="1.5" fill="#c03050" opacity="0.75"/><rect x="878.6" y="358.2" width="3" height="2" fill="#c03050" opacity="0.75"/><rect x="878.1" y="368.5" width="2" height="3" fill="#c03050" opacity="0.75"/><rect x="892.6" y="373.3" width="3" height="2" fill="#c03050" opacity="0.75"/><rect x="887.3" y="360.2" width="1.5" height="1.5" fill="#c03050" opacity="0.75"/><rect x="878.3" y="362.6" width="3" height="1.5" fill="#c03050" opacity="0.75"/><rect x="877.3" y="365.1" width="2" height="3" fill="#c03050" opacity="0.75"/><rect x="889.1" y="356.6" width="2" height="3" fill="#c03050" opacity="0.75"/><rect x="880.4" y="357.8" width="2" height="1.5" fill="#c03050" opacity="0.75"/><rect x="879.7" y="359.8" width="3" height="1.5" fill="#c03050" opacity="0.75"/><rect x="881.2" y="356.8" width="2" height="3" fill="#c03050" opacity="0.75"/><rect x="877.4" y="368.9" width="3" height="1.5" fill="#c03050" opacity="0.75"/><rect x="883.5" y="354.6" width="2" height="1.5" fill="#c03050" opacity="0.75"/><rect x="883.3" y="353.6" width="3" height="2" fill="#c03050" opacity="0.75"/><rect x="887.0" y="363.2" width="2" height="3" fill="#c03050" opacity="0.75"/><rect x="888.3" y="365.6" width="2" height="1.5" fill="#c03050" opacity="0.75"/><rect x="889.7" y="363.0" width="2" height="2" fill="#c03050" opacity="0.75"/><rect x="880.3" y="377.2" width="2" height="1.5" fill="#c03050" opacity="0.75"/><rect x="876.5" y="354.6" width="1.5" height="1.5" fill="#c03050" opacity="0.75"/><rect x="878.3" y="354.4" width="2" height="2" fill="#c03050" opacity="0.75"/><rect x="884.5" y="360.5" width="2" height="1.5" fill="#c03050" opacity="0.75"/><rect x="887.5" y="375.5" width="1.5" height="1.5" fill="#c03050" opacity="0.75"/><rect x="881.4" y="366.3" width="3" height="3" fill="#c03050" opacity="0.75"/><rect x="869.1" y="355.8" width="3" height="3" fill="#c03050" opacity="0.75"/><rect x="871.0" y="353.8" width="3" height="1.5" fill="#c03050" opacity="0.75"/><rect x="887.6" y="364.0" width="2" height="1.5" fill="#c03050" opacity="0.75"/><rect x="873.5" y="364.1" width="2" height="3" fill="#c03050" opacity="0.75"/><rect x="912.3" y="354.6" width="2" height="3" fill="#2a6ae8" opacity="0.75"/><rect x="898.3" y="368.2" width="2" height="1.5" fill="#2a6ae8" opacity="0.75"/><rect x="903.1" y="387.2" width="2" height="2" fill="#2a6ae8" opacity="0.75"/><rect x="925.1" y="355.7" width="2" height="3" fill="#2a6ae8" opacity="0.75"/><rect x="904.2" y="355.2" width="2" height="3" fill="#2a6ae8" opacity="0.75"/><rect x="921.8" y="373.8" width="3" height="3" fill="#2a6ae8" opacity="0.75"/><rect x="898.8" y="357.6" width="2" height="2" fill="#2a6ae8" opacity="0.75"/><rect x="911.9" y="377.4" width="3" height="1.5" fill="#2a6ae8" opacity="0.75"/><rect x="900.5" y="359.2" width="2" height="3" fill="#2a6ae8" opacity="0.75"/><rect x="904.5" y="361.6" width="2" height="3" fill="#2a6ae8" opacity="0.75"/><rect x="919.7" y="363.0" width="1.5" height="3" fill="#2a6ae8" opacity="0.75"/><rect x="906.4" y="381.2" width="3" height="3" fill="#2a6ae8" opacity="0.75"/><rect x="906.3" y="348.2" width="2" height="2" fill="#2a6ae8" opacity="0.75"/><rect x="914.4" y="350.4" width="1.5" height="1.5" fill="#2a6ae8" opacity="0.75"/><rect x="911.4" y="359.3" width="1.5" height="2" fill="#2a6ae8" opacity="0.75"/><rect x="905.7" y="385.8" width="2" height="1.5" fill="#2a6ae8" opacity="0.75"/><rect x="929.4" y="357.0" width="2" height="1.5" fill="#2a6ae8" opacity="0.75"/><rect x="899.9" y="387.0" width="1.5" height="2" fill="#2a6ae8" opacity="0.75"/><rect x="915.7" y="381.4" width="2" height="1.5" fill="#2a6ae8" opacity="0.75"/><rect x="915.2" y="375.4" width="2" height="1.5" fill="#2a6ae8" opacity="0.75"/><rect x="911.8" y="358.6" width="3" height="3" fill="#2a6ae8" opacity="0.75"/><rect x="930.6" y="357.9" width="3" height="1.5" fill="#2a6ae8" opacity="0.75"/><rect x="914.6" y="379.3" width="2" height="2" fill="#2a6ae8" opacity="0.75"/><rect x="902.0" y="371.4" width="1.5" height="1.5" fill="#2a6ae8" opacity="0.75"/><rect x="914.8" y="359.1" width="1.5" height="2" fill="#2a6ae8" opacity="0.75"/><rect x="916.5" y="373.0" width="3" height="3" fill="#2a6ae8" opacity="0.75"/><rect x="929.2" y="374.1" width="2" height="2" fill="#2a6ae8" opacity="0.75"/><rect x="914.8" y="348.3" width="2" height="2" fill="#2a6ae8" opacity="0.75"/><rect x="903.5" y="354.4" width="2" height="2" fill="#2a6ae8" opacity="0.75"/><rect x="911.8" y="349.3" width="1.5" height="1.5" fill="#2a6ae8" opacity="0.75"/><rect x="932.8" y="362.8" width="2" height="1.5" fill="#2a6ae8" opacity="0.75"/><rect x="899.9" y="352.2" width="2" height="3" fill="#2a6ae8" opacity="0.75"/><rect x="899.7" y="370.3" width="1.5" height="2" fill="#2a6ae8" opacity="0.75"/><rect x="909.3" y="355.5" width="1.5" height="3" fill="#2a6ae8" opacity="0.75"/><rect x="927.2" y="360.8" width="2" height="3" fill="#2a6ae8" opacity="0.75"/><rect x="908.2" y="349.2" width="2" height="1.5" fill="#2a6ae8" opacity="0.75"/><rect x="925.5" y="371.3" width="2" height="3" fill="#2a6ae8" opacity="0.75"/><rect x="932.2" y="356.9" width="1.5" height="1.5" fill="#2a6ae8" opacity="0.75"/><rect x="904.0" y="364.1" width="3" height="2" fill="#2a6ae8" opacity="0.75"/><rect x="931.5" y="375.0" width="3" height="1.5" fill="#2a6ae8" opacity="0.75"/><rect x="902.4" y="366.0" width="2" height="1.5" fill="#2a6ae8" opacity="0.75"/><rect x="913.5" y="356.2" width="1.5" height="1.5" fill="#2a6ae8" opacity="0.75"/><rect x="909.6" y="366.9" width="2" height="2" fill="#2a6ae8" opacity="0.75"/><rect x="917.0" y="349.4" width="2" height="3" fill="#2a6ae8" opacity="0.75"/><rect x="904.1" y="382.5" width="1.5" height="1.5" fill="#2a6ae8" opacity="0.75"/><rect x="908.8" y="386.1" width="2" height="3" fill="#2a6ae8" opacity="0.75"/><rect x="904.9" y="375.3" width="3" height="1.5" fill="#2a6ae8" opacity="0.75"/><rect x="913.5" y="378.4" width="1.5" height="2" fill="#2a6ae8" opacity="0.75"/><rect x="929.4" y="348.6" width="2" height="3" fill="#2a6ae8" opacity="0.75"/><rect x="911.1" y="356.2" width="2" height="1.5" fill="#2a6ae8" opacity="0.75"/><rect x="909.3" y="376.8" width="2" height="1.5" fill="#2a6ae8" opacity="0.75"/><rect x="910.1" y="386.0" width="2" height="3" fill="#2a6ae8" opacity="0.75"/><rect x="925.8" y="354.3" width="2" height="3" fill="#2a6ae8" opacity="0.75"/><rect x="917.8" y="371.9" width="2" height="3" fill="#2a6ae8" opacity="0.75"/><rect x="915.5" y="361.5" width="2" height="1.5" fill="#2a6ae8" opacity="0.75"/><rect x="932.3" y="348.8" width="1.5" height="3" fill="#2a6ae8" opacity="0.75"/><rect x="907.2" y="372.6" width="2" height="2" fill="#2a6ae8" opacity="0.75"/><rect x="919.4" y="375.5" width="2" height="3" fill="#2a6ae8" opacity="0.75"/><rect x="922.2" y="364.4" width="2" height="3" fill="#2a6ae8" opacity="0.75"/><rect x="920.7" y="367.3" width="2" height="2" fill="#2a6ae8" opacity="0.75"/><rect x="921.5" y="355.8" width="2" height="1.5" fill="#2a6ae8" opacity="0.75"/><rect x="914.3" y="382.5" width="3" height="1.5" fill="#2a6ae8" opacity="0.75"/><rect x="901.1" y="382.2" width="2" height="1.5" fill="#2a6ae8" opacity="0.75"/><rect x="904.8" y="354.6" width="1.5" height="1.5" fill="#2a6ae8" opacity="0.75"/><rect x="906.1" y="378.1" width="2" height="1.5" fill="#2a6ae8" opacity="0.75"/><rect x="914.6" y="359.8" width="2" height="3" fill="#2a6ae8" opacity="0.75"/><rect x="929.3" y="367.6" width="1.5" height="2" fill="#2a6ae8" opacity="0.75"/><rect x="914.1" y="353.2" width="1.5" height="3" fill="#2a6ae8" opacity="0.75"/><rect x="935.0" y="352.7" width="2" height="1.5" fill="#2a9a8a" opacity="0.75"/><rect x="936.2" y="350.0" width="2" height="1.5" fill="#2a9a8a" opacity="0.75"/><rect x="924.1" y="352.3" width="1.5" height="3" fill="#2a9a8a" opacity="0.75"/><rect x="925.4" y="357.8" width="1.5" height="2" fill="#2a9a8a" opacity="0.75"/><rect x="935.3" y="344.7" width="2" height="1.5" fill="#2a9a8a" opacity="0.75"/><rect x="934.0" y="368.2" width="2" height="1.5" fill="#2a9a8a" opacity="0.75"/><rect x="926.0" y="367.3" width="1.5" height="1.5" fill="#2a9a8a" opacity="0.75"/><rect x="929.4" y="362.2" width="1.5" height="3" fill="#2a9a8a" opacity="0.75"/><rect x="936.9" y="363.3" width="2" height="1.5" fill="#2a9a8a" opacity="0.75"/><rect x="934.3" y="345.0" width="2" height="3" fill="#2a9a8a" opacity="0.75"/><rect x="932.2" y="357.6" width="3" height="1.5" fill="#2a9a8a" opacity="0.75"/><rect x="936.6" y="343.4" width="1.5" height="1.5" fill="#2a9a8a" opacity="0.75"/><rect x="928.4" y="378.5" width="1.5" height="1.5" fill="#2a9a8a" opacity="0.75"/><rect x="924.5" y="374.5" width="2" height="3" fill="#2a9a8a" opacity="0.75"/><rect x="929.2" y="343.4" width="2" height="1.5" fill="#2a9a8a" opacity="0.75"/><rect x="933.7" y="344.6" width="3" height="3" fill="#2a9a8a" opacity="0.75"/><rect x="924.5" y="380.9" width="3" height="1.5" fill="#2a9a8a" opacity="0.75"/><rect x="936.3" y="349.8" width="3" height="1.5" fill="#2a9a8a" opacity="0.75"/><rect x="931.7" y="373.7" width="2" height="3" fill="#2a9a8a" opacity="0.75"/><rect x="930.5" y="355.7" width="2" height="1.5" fill="#2a9a8a" opacity="0.75"/><rect x="932.5" y="361.5" width="3" height="1.5" fill="#2a9a8a" opacity="0.75"/><rect x="923.3" y="369.6" width="3" height="3" fill="#2a9a8a" opacity="0.75"/><rect x="923.7" y="344.5" width="2" height="3" fill="#2a9a8a" opacity="0.75"/><rect x="925.0" y="359.6" width="1.5" height="1.5" fill="#2a9a8a" opacity="0.75"/><rect x="928.0" y="347.6" width="2" height="1.5" fill="#2a9a8a" opacity="0.75"/><rect x="934.6" y="363.5" width="3" height="2" fill="#2a9a8a" opacity="0.75"/><rect x="927.4" y="361.7" width="2" height="3" fill="#2a9a8a" opacity="0.75"/><rect x="928.8" y="324.8" width="1.5" height="2" fill="#70a0e0" opacity="0.75"/><rect x="907.2" y="332.2" width="1.5" height="1.5" fill="#70a0e0" opacity="0.75"/><rect x="919.2" y="326.0" width="2" height="3" fill="#70a0e0" opacity="0.75"/><rect x="904.8" y="328.4" width="1.5" height="2" fill="#70a0e0" opacity="0.75"/><rect x="903.7" y="325.8" width="1.5" height="3" fill="#70a0e0" opacity="0.75"/><rect x="913.5" y="334.1" width="3" height="2" fill="#70a0e0" opacity="0.75"/><rect x="906.2" y="334.6" width="2" height="2" fill="#70a0e0" opacity="0.75"/><rect x="927.4" y="335.3" width="2" height="3" fill="#70a0e0" opacity="0.75"/><rect x="918.7" y="323.8" width="3" height="3" fill="#70a0e0" opacity="0.75"/><rect x="904.9" y="335.0" width="1.5" height="2" fill="#70a0e0" opacity="0.75"/><rect x="904.2" y="322.5" width="2" height="1.5" fill="#70a0e0" opacity="0.75"/><rect x="906.9" y="334.6" width="2" height="1.5" fill="#70a0e0" opacity="0.75"/><rect x="921.4" y="326.9" width="2" height="1.5" fill="#70a0e0" opacity="0.75"/><rect x="908.1" y="320.7" width="2" height="2" fill="#70a0e0" opacity="0.75"/><rect x="921.6" y="323.9" width="2" height="2" fill="#70a0e0" opacity="0.75"/><rect x="925.2" y="319.3" width="2" height="3" fill="#70a0e0" opacity="0.75"/><rect x="932.1" y="335.5" width="2" height="2" fill="#70a0e0" opacity="0.75"/><rect x="919.6" y="321.2" width="2" height="3" fill="#70a0e0" opacity="0.75"/><rect x="913.0" y="327.7" width="3" height="1.5" fill="#70a0e0" opacity="0.75"/><rect x="910.4" y="326.1" width="3" height="1.5" fill="#70a0e0" opacity="0.75"/><rect x="924.6" y="333.5" width="1.5" height="1.5" fill="#70a0e0" opacity="0.75"/><rect x="921.8" y="333.9" width="2" height="1.5" fill="#70a0e0" opacity="0.75"/><rect x="925.1" y="334.2" width="3" height="1.5" fill="#70a0e0" opacity="0.75"/><rect x="905.1" y="329.6" width="2" height="3" fill="#70a0e0" opacity="0.75"/><rect x="916.1" y="325.1" width="1.5" height="2" fill="#70a0e0" opacity="0.75"/><rect x="917.2" y="328.9" width="2" height="3" fill="#70a0e0" opacity="0.75"/><rect x="917.8" y="333.4" width="2" height="1.5" fill="#70a0e0" opacity="0.75"/><rect x="928.5" y="333.0" width="1.5" height="2" fill="#70a0e0" opacity="0.75"/><rect x="916.6" y="336.0" width="1.5" height="1.5" fill="#70a0e0" opacity="0.75"/><rect x="916.0" y="334.5" width="3" height="3" fill="#70a0e0" opacity="0.75"/><rect x="923.0" y="332.6" width="2" height="1.5" fill="#70a0e0" opacity="0.75"/><rect x="916.7" y="334.8" width="3" height="1.5" fill="#70a0e0" opacity="0.75"/><ellipse cx="903" cy="318" rx="27.5" ry="13" fill="url(#hl)"/><circle cx="1224" cy="453" r="47" fill="#5a5a5a" opacity="0.9" filter="url(#blur)"/><circle cx="1224" cy="446" r="47" fill="url(#gA1)" stroke="#9b5ba6" stroke-width="1.3"/><rect x="1228.7" y="428.2" width="3" height="2" fill="#4060e0" opacity="0.75"/><rect x="1230.5" y="426.3" width="2" height="2" fill="#4060e0" opacity="0.75"/><rect x="1230.2" y="421.6" width="2" height="1.5" fill="#4060e0" opacity="0.75"/><rect x="1221.2" y="428.1" width="3" height="3" fill="#4060e0" opacity="0.75"/><rect x="1247.5" y="420.5" width="3" height="2" fill="#4060e0" opacity="0.75"/><rect x="1219.7" y="423.2" width="3" height="3" fill="#4060e0" opacity="0.75"/><rect x="1236.9" y="445.2" width="3" height="3" fill="#4060e0" opacity="0.75"/><rect x="1233.8" y="414.2" width="2" height="2" fill="#4060e0" opacity="0.75"/><rect x="1233.0" y="419.3" width="2" height="2" fill="#4060e0" opacity="0.75"/><rect x="1232.1" y="441.6" width="2" height="2" fill="#4060e0" opacity="0.75"/><rect x="1222.0" y="428.0" width="2" height="2" fill="#4060e0" opacity="0.75"/><rect x="1248.5" y="443.7" width="1.5" height="2" fill="#4060e0" opacity="0.75"/><rect x="1252.9" y="443.2" width="1.5" height="3" fill="#4060e0" opacity="0.75"/><rect x="1232.3" y="415.1" width="3" height="3" fill="#4060e0" opacity="0.75"/><rect x="1220.1" y="429.6" width="1.5" height="2" fill="#4060e0" opacity="0.75"/><rect x="1239.3" y="434.5" width="2" height="1.5" fill="#4060e0" opacity="0.75"/><rect x="1237.3" y="434.1" width="2" height="1.5" fill="#4060e0" opacity="0.75"/><rect x="1253.7" y="421.1" width="1.5" height="3" fill="#4060e0" opacity="0.75"/><rect x="1242.7" y="425.0" width="2" height="3" fill="#4060e0" opacity="0.75"/><rect x="1247.1" y="443.7" width="2" height="3" fill="#4060e0" opacity="0.75"/><rect x="1227.5" y="419.1" width="1.5" height="1.5" fill="#4060e0" opacity="0.75"/><rect x="1243.4" y="419.3" width="2" height="2" fill="#4060e0" opacity="0.75"/><rect x="1227.4" y="440.9" width="1.5" height="1.5" fill="#4060e0" opacity="0.75"/><rect x="1228.1" y="443.5" width="3" height="2" fill="#4060e0" opacity="0.75"/><rect x="1224.3" y="438.8" width="2" height="3" fill="#4060e0" opacity="0.75"/><rect x="1221.0" y="441.5" width="1.5" height="3" fill="#4060e0" opacity="0.75"/><rect x="1243.5" y="429.7" width="2" height="1.5" fill="#4060e0" opacity="0.75"/><rect x="1240.5" y="442.5" width="3" height="2" fill="#4060e0" opacity="0.75"/><rect x="1222.1" y="441.4" width="2" height="2" fill="#4060e0" opacity="0.75"/><rect x="1246.8" y="414.4" width="2" height="2" fill="#4060e0" opacity="0.75"/><rect x="1229.6" y="435.2" width="2" height="1.5" fill="#4060e0" opacity="0.75"/><rect x="1224.9" y="445.2" width="3" height="3" fill="#4060e0" opacity="0.75"/><rect x="1235.7" y="422.9" width="2" height="3" fill="#4060e0" opacity="0.75"/><rect x="1239.5" y="421.1" width="1.5" height="1.5" fill="#4060e0" opacity="0.75"/><rect x="1253.9" y="430.9" width="1.5" height="1.5" fill="#4060e0" opacity="0.75"/><rect x="1231.9" y="444.3" width="2" height="2" fill="#4060e0" opacity="0.75"/><rect x="1236.4" y="430.5" width="2" height="2" fill="#4060e0" opacity="0.75"/><rect x="1224.2" y="426.1" width="3" height="1.5" fill="#4060e0" opacity="0.75"/><rect x="1237.2" y="444.0" width="2" height="2" fill="#4060e0" opacity="0.75"/><rect x="1230.9" y="417.3" width="3" height="2" fill="#4060e0" opacity="0.75"/><rect x="1246.4" y="434.4" width="2" height="1.5" fill="#4060e0" opacity="0.75"/><rect x="1230.2" y="427.0" width="2" height="2" fill="#4060e0" opacity="0.75"/><rect x="1245.5" y="433.3" width="2" height="1.5" fill="#4060e0" opacity="0.75"/><rect x="1242.9" y="428.3" width="2" height="2" fill="#4060e0" opacity="0.75"/><rect x="1240.2" y="416.3" width="2" height="2" fill="#4060e0" opacity="0.75"/><rect x="1230.5" y="428.3" width="2" height="2" fill="#4060e0" opacity="0.75"/><rect x="1243.9" y="415.6" width="3" height="3" fill="#4060e0" opacity="0.75"/><rect x="1226.5" y="430.9" width="2" height="2" fill="#4060e0" opacity="0.75"/><rect x="1231.0" y="425.8" width="2" height="1.5" fill="#4060e0" opacity="0.75"/><rect x="1250.7" y="435.3" width="1.5" height="3" fill="#4060e0" opacity="0.75"/><rect x="1224.7" y="420.2" width="2" height="2" fill="#4060e0" opacity="0.75"/><rect x="1220.2" y="426.4" width="1.5" height="2" fill="#4060e0" opacity="0.75"/><rect x="1228.1" y="419.0" width="2" height="1.5" fill="#4060e0" opacity="0.75"/><rect x="1214.7" y="439.4" width="2" height="3" fill="#4060e0" opacity="0.75"/><rect x="1228.0" y="414.5" width="2" height="3" fill="#4060e0" opacity="0.75"/><rect x="1237.3" y="416.1" width="2" height="3" fill="#4060e0" opacity="0.75"/><rect x="1228.0" y="426.2" width="2" height="2" fill="#4060e0" opacity="0.75"/><rect x="1245.3" y="421.9" width="2" height="3" fill="#4060e0" opacity="0.75"/><rect x="1231.5" y="444.5" width="2" height="2" fill="#4060e0" opacity="0.75"/><rect x="1241.0" y="426.1" width="1.5" height="1.5" fill="#4060e0" opacity="0.75"/><rect x="1252.3" y="427.9" width="3" height="3" fill="#4060e0" opacity="0.75"/><rect x="1235.2" y="442.8" width="2" height="1.5" fill="#4060e0" opacity="0.75"/><rect x="1232.2" y="435.8" width="3" height="2" fill="#4060e0" opacity="0.75"/><rect x="1221.9" y="422.3" width="2" height="2" fill="#4060e0" opacity="0.75"/><rect x="1250.3" y="426.5" width="3" height="1.5" fill="#4060e0" opacity="0.75"/><rect x="1217.0" y="443.6" width="2" height="2" fill="#4060e0" opacity="0.75"/><rect x="1224.2" y="420.2" width="1.5" height="2" fill="#4060e0" opacity="0.75"/><rect x="1221.8" y="417.0" width="3" height="3" fill="#4060e0" opacity="0.75"/><rect x="1230.5" y="427.8" width="1.5" height="1.5" fill="#4060e0" opacity="0.75"/><rect x="1242.6" y="419.1" width="2" height="2" fill="#4060e0" opacity="0.75"/><rect x="1246.9" y="416.2" width="2" height="3" fill="#4060e0" opacity="0.75"/><rect x="1211.6" y="443.8" width="1.5" height="2" fill="#50a060" opacity="0.75"/><rect x="1193.8" y="453.0" width="3" height="2" fill="#50a060" opacity="0.75"/><rect x="1222.4" y="449.9" width="3" height="1.5" fill="#50a060" opacity="0.75"/><rect x="1217.2" y="438.1" width="2" height="3" fill="#50a060" opacity="0.75"/><rect x="1221.6" y="441.1" width="2" height="2" fill="#50a060" opacity="0.75"/><rect x="1223.8" y="447.7" width="1.5" height="3" fill="#50a060" opacity="0.75"/><rect x="1213.1" y="440.2" width="2" height="3" fill="#50a060" opacity="0.75"/><rect x="1191.8" y="441.7" width="1.5" height="2" fill="#50a060" opacity="0.75"/><rect x="1195.1" y="448.4" width="2" height="3" fill="#50a060" opacity="0.75"/><rect x="1221.6" y="451.1" width="2" height="1.5" fill="#50a060" opacity="0.75"/><rect x="1191.9" y="455.8" width="1.5" height="3" fill="#50a060" opacity="0.75"/><rect x="1207.4" y="439.8" width="2" height="2" fill="#50a060" opacity="0.75"/><rect x="1223.0" y="443.4" width="1.5" height="3" fill="#50a060" opacity="0.75"/><rect x="1217.1" y="442.8" width="3" height="3" fill="#50a060" opacity="0.75"/><rect x="1209.4" y="454.0" width="3" height="1.5" fill="#50a060" opacity="0.75"/><rect x="1221.8" y="447.8" width="1.5" height="1.5" fill="#50a060" opacity="0.75"/><rect x="1195.1" y="445.8" width="2" height="3" fill="#50a060" opacity="0.75"/><rect x="1206.0" y="449.4" width="2" height="3" fill="#50a060" opacity="0.75"/><rect x="1190.0" y="450.4" width="2" height="3" fill="#50a060" opacity="0.75"/><rect x="1195.3" y="443.7" width="3" height="2" fill="#50a060" opacity="0.75"/><rect x="1211.4" y="440.1" width="2" height="2" fill="#50a060" opacity="0.75"/><rect x="1196.4" y="440.5" width="3" height="3" fill="#50a060" opacity="0.75"/><rect x="1199.5" y="438.3" width="1.5" height="2" fill="#50a060" opacity="0.75"/><rect x="1189.3" y="445.1" width="3" height="1.5" fill="#50a060" opacity="0.75"/><rect x="1197.1" y="442.7" width="2" height="2" fill="#50a060" opacity="0.75"/><rect x="1220.6" y="455.0" width="2" height="2" fill="#50a060" opacity="0.75"/><rect x="1211.6" y="442.2" width="1.5" height="2" fill="#50a060" opacity="0.75"/><rect x="1199.1" y="451.9" width="2" height="2" fill="#50a060" opacity="0.75"/><rect x="1191.7" y="444.0" width="2" height="1.5" fill="#50a060" opacity="0.75"/><rect x="1208.1" y="453.2" width="1.5" height="3" fill="#50a060" opacity="0.75"/><rect x="1209.1" y="440.8" width="3" height="2" fill="#50a060" opacity="0.75"/><rect x="1216.8" y="452.4" width="2" height="2" fill="#50a060" opacity="0.75"/><rect x="1190.9" y="442.9" width="1.5" height="1.5" fill="#50a060" opacity="0.75"/><rect x="1218.2" y="448.2" width="2" height="2" fill="#50a060" opacity="0.75"/><rect x="1206.0" y="440.4" width="3" height="3" fill="#50a060" opacity="0.75"/><rect x="1217.5" y="442.6" width="3" height="3" fill="#50a060" opacity="0.75"/><rect x="1223.9" y="452.9" width="1.5" height="1.5" fill="#50a060" opacity="0.75"/><rect x="1206.2" y="446.6" width="1.5" height="2" fill="#50a060" opacity="0.75"/><rect x="1202.3" y="459.7" width="2" height="1.5" fill="#e0a030" opacity="0.75"/><rect x="1189.7" y="457.7" width="1.5" height="3" fill="#e0a030" opacity="0.75"/><rect x="1191.6" y="450.1" width="2" height="2" fill="#e0a030" opacity="0.75"/><rect x="1194.9" y="458.6" width="2" height="2" fill="#e0a030" opacity="0.75"/><rect x="1195.2" y="464.6" width="1.5" height="3" fill="#e0a030" opacity="0.75"/><rect x="1209.9" y="460.4" width="3" height="2" fill="#e0a030" opacity="0.75"/><rect x="1202.4" y="471.0" width="2" height="1.5" fill="#e0a030" opacity="0.75"/><rect x="1205.1" y="460.0" width="3" height="1.5" fill="#e0a030" opacity="0.75"/><rect x="1196.6" y="466.2" width="2" height="2" fill="#e0a030" opacity="0.75"/><rect x="1191.1" y="459.0" width="2" height="1.5" fill="#e0a030" opacity="0.75"/><rect x="1195.0" y="457.2" width="2" height="1.5" fill="#e0a030" opacity="0.75"/><rect x="1206.5" y="456.9" width="1.5" height="1.5" fill="#e0a030" opacity="0.75"/><rect x="1187.5" y="452.5" width="3" height="3" fill="#e0a030" opacity="0.75"/><rect x="1193.5" y="448.2" width="1.5" height="2" fill="#e0a030" opacity="0.75"/><rect x="1191.3" y="457.9" width="2" height="3" fill="#e0a030" opacity="0.75"/><rect x="1209.9" y="469.5" width="2" height="2" fill="#e0a030" opacity="0.75"/><rect x="1213.0" y="449.8" width="2" height="1.5" fill="#e0a030" opacity="0.75"/><rect x="1193.8" y="446.9" width="3" height="3" fill="#e0a030" opacity="0.75"/><rect x="1190.9" y="462.3" width="1.5" height="1.5" fill="#e0a030" opacity="0.75"/><rect x="1196.6" y="458.8" width="1.5" height="3" fill="#e0a030" opacity="0.75"/><rect x="1202.8" y="450.6" width="3" height="3" fill="#e0a030" opacity="0.75"/><rect x="1195.2" y="454.9" width="2" height="1.5" fill="#e0a030" opacity="0.75"/><rect x="1210.0" y="464.7" width="1.5" height="2" fill="#e0a030" opacity="0.75"/><rect x="1207.7" y="451.1" width="3" height="3" fill="#e0a030" opacity="0.75"/><rect x="1209.1" y="450.3" width="1.5" height="3" fill="#e0a030" opacity="0.75"/><rect x="1207.8" y="463.0" width="2" height="1.5" fill="#e0a030" opacity="0.75"/><rect x="1204.0" y="457.9" width="3" height="1.5" fill="#e0a030" opacity="0.75"/><rect x="1209.1" y="463.9" width="2" height="3" fill="#e0a030" opacity="0.75"/><rect x="1195.0" y="446.3" width="2" height="1.5" fill="#e0a030" opacity="0.75"/><rect x="1186.2" y="450.9" width="2" height="1.5" fill="#e0a030" opacity="0.75"/><rect x="1191.4" y="449.2" width="3" height="3" fill="#e0a030" opacity="0.75"/><rect x="1203.4" y="448.1" width="2" height="2" fill="#e0a030" opacity="0.75"/><rect x="1199.9" y="464.6" width="1.5" height="1.5" fill="#e0a030" opacity="0.75"/><rect x="1200.4" y="464.0" width="2" height="2" fill="#e0a030" opacity="0.75"/><rect x="1194.2" y="455.7" width="1.5" height="2" fill="#e0a030" opacity="0.75"/><rect x="1221.2" y="471.9" width="2" height="2" fill="#d02020" opacity="0.75"/><rect x="1220.3" y="476.3" width="2" height="3" fill="#d02020" opacity="0.75"/><rect x="1216.5" y="474.4" width="2" height="3" fill="#d02020" opacity="0.75"/><rect x="1214.4" y="472.3" width="1.5" height="2" fill="#d02020" opacity="0.75"/><rect x="1209.4" y="463.8" width="1.5" height="2" fill="#d02020" opacity="0.75"/><rect x="1223.1" y="468.0" width="2" height="3" fill="#d02020" opacity="0.75"/><rect x="1221.4" y="477.4" width="3" height="2" fill="#d02020" opacity="0.75"/><rect x="1219.8" y="479.3" width="1.5" height="2" fill="#d02020" opacity="0.75"/><rect x="1222.4" y="462.7" width="2" height="1.5" fill="#d02020" opacity="0.75"/><rect x="1206.6" y="473.9" width="2" height="2" fill="#d02020" opacity="0.75"/><rect x="1208.9" y="483.0" width="2" height="1.5" fill="#d02020" opacity="0.75"/><rect x="1213.2" y="476.0" width="1.5" height="1.5" fill="#d02020" opacity="0.75"/><rect x="1219.6" y="462.1" width="3" height="2" fill="#d02020" opacity="0.75"/><rect x="1215.1" y="471.6" width="2" height="3" fill="#d02020" opacity="0.75"/><rect x="1219.2" y="473.9" width="2" height="1.5" fill="#d02020" opacity="0.75"/><rect x="1213.6" y="484.1" width="2" height="3" fill="#d02020" opacity="0.75"/><rect x="1212.2" y="472.8" width="2" height="1.5" fill="#d02020" opacity="0.75"/><rect x="1210.4" y="481.0" width="2" height="2" fill="#d02020" opacity="0.75"/><rect x="1215.6" y="477.0" width="3" height="2" fill="#d02020" opacity="0.75"/><rect x="1209.0" y="469.5" width="3" height="2" fill="#d02020" opacity="0.75"/><rect x="1206.7" y="467.4" width="3" height="2" fill="#d02020" opacity="0.75"/><rect x="1214.3" y="462.7" width="1.5" height="1.5" fill="#d02020" opacity="0.75"/><rect x="1213.2" y="479.8" width="2" height="1.5" fill="#d02020" opacity="0.75"/><rect x="1223.8" y="485.8" width="2" height="2" fill="#d02020" opacity="0.75"/><rect x="1254.5" y="428.6" width="3" height="2" fill="#30a0a0" opacity="0.75"/><rect x="1261.1" y="435.7" width="3" height="1.5" fill="#30a0a0" opacity="0.75"/><rect x="1238.9" y="421.1" width="2" height="1.5" fill="#30a0a0" opacity="0.75"/><rect x="1241.1" y="437.6" width="2" height="3" fill="#30a0a0" opacity="0.75"/><rect x="1253.0" y="443.9" width="2" height="1.5" fill="#30a0a0" opacity="0.75"/><rect x="1237.4" y="442.4" width="3" height="1.5" fill="#30a0a0" opacity="0.75"/><rect x="1254.1" y="447.0" width="2" height="2" fill="#30a0a0" opacity="0.75"/><rect x="1249.3" y="440.6" width="2" height="3" fill="#30a0a0" opacity="0.75"/><rect x="1258.0" y="452.0" width="3" height="1.5" fill="#30a0a0" opacity="0.75"/><rect x="1250.0" y="435.9" width="1.5" height="1.5" fill="#30a0a0" opacity="0.75"/><rect x="1247.8" y="433.9" width="1.5" height="3" fill="#30a0a0" opacity="0.75"/><rect x="1250.2" y="432.4" width="3" height="2" fill="#30a0a0" opacity="0.75"/><rect x="1256.6" y="446.9" width="3" height="1.5" fill="#30a0a0" opacity="0.75"/><rect x="1237.8" y="434.8" width="1.5" height="2" fill="#30a0a0" opacity="0.75"/><rect x="1243.9" y="431.6" width="1.5" height="1.5" fill="#30a0a0" opacity="0.75"/><rect x="1260.6" y="440.2" width="3" height="1.5" fill="#30a0a0" opacity="0.75"/><rect x="1238.1" y="445.6" width="1.5" height="1.5" fill="#30a0a0" opacity="0.75"/><rect x="1238.5" y="434.5" width="2" height="3" fill="#30a0a0" opacity="0.75"/><rect x="1247.4" y="453.7" width="2" height="1.5" fill="#30a0a0" opacity="0.75"/><rect x="1238.9" y="438.6" width="2" height="2" fill="#30a0a0" opacity="0.75"/><rect x="1246.0" y="435.4" width="1.5" height="1.5" fill="#30a0a0" opacity="0.75"/><rect x="1235.1" y="436.7" width="2" height="1.5" fill="#30a0a0" opacity="0.75"/><rect x="1250.6" y="429.1" width="2" height="3" fill="#30a0a0" opacity="0.75"/><rect x="1247.4" y="448.8" width="2" height="3" fill="#30a0a0" opacity="0.75"/><rect x="1234.9" y="427.2" width="2" height="3" fill="#30a0a0" opacity="0.75"/><rect x="1235.5" y="438.8" width="1.5" height="3" fill="#30a0a0" opacity="0.75"/><rect x="1247.4" y="444.4" width="1.5" height="2" fill="#30a0a0" opacity="0.75"/><rect x="1234.7" y="442.1" width="3" height="1.5" fill="#30a0a0" opacity="0.75"/><rect x="1260.1" y="447.4" width="2" height="2" fill="#30a0a0" opacity="0.75"/><rect x="1255.5" y="444.0" width="2" height="2" fill="#30a0a0" opacity="0.75"/><rect x="1242.4" y="428.3" width="2" height="2" fill="#30a0a0" opacity="0.75"/><rect x="1254.7" y="439.2" width="3" height="1.5" fill="#30a0a0" opacity="0.75"/><rect x="1252.8" y="436.4" width="2" height="2" fill="#30a0a0" opacity="0.75"/><rect x="1253.4" y="423.1" width="1.5" height="3" fill="#30a0a0" opacity="0.75"/><rect x="1238.5" y="439.5" width="1.5" height="3" fill="#30a0a0" opacity="0.75"/><rect x="1254.3" y="431.7" width="2" height="3" fill="#30a0a0" opacity="0.75"/><rect x="1240.9" y="430.8" width="2" height="3" fill="#30a0a0" opacity="0.75"/><rect x="1250.0" y="443.0" width="2" height="2" fill="#30a0a0" opacity="0.75"/><rect x="1236.9" y="425.0" width="2" height="1.5" fill="#30a0a0" opacity="0.75"/><rect x="1241.5" y="429.5" width="1.5" height="1.5" fill="#30a0a0" opacity="0.75"/><rect x="1239.4" y="425.9" width="2" height="2" fill="#30a0a0" opacity="0.75"/><rect x="1235.6" y="436.9" width="1.5" height="1.5" fill="#30a0a0" opacity="0.75"/><rect x="1260.3" y="431.9" width="2" height="3" fill="#30a0a0" opacity="0.75"/><rect x="1241.7" y="447.6" width="2" height="1.5" fill="#30a0a0" opacity="0.75"/><rect x="1238.1" y="421.0" width="2" height="3" fill="#30a0a0" opacity="0.75"/><rect x="1253.0" y="437.6" width="1.5" height="2" fill="#30a0a0" opacity="0.75"/><rect x="1259.3" y="438.5" width="2" height="2" fill="#30a0a0" opacity="0.75"/><rect x="1255.4" y="449.8" width="1.5" height="1.5" fill="#30a0a0" opacity="0.75"/><rect x="1237.7" y="424.8" width="2" height="1.5" fill="#30a0a0" opacity="0.75"/><rect x="1261.3" y="455.9" width="2" height="1.5" fill="#30a0a0" opacity="0.75"/><rect x="1257.5" y="450.3" width="2" height="3" fill="#30a0a0" opacity="0.75"/><rect x="1244.3" y="469.6" width="1.5" height="1.5" fill="#2040c0" opacity="0.75"/><rect x="1256.8" y="458.4" width="2" height="1.5" fill="#2040c0" opacity="0.75"/><rect x="1245.3" y="467.8" width="1.5" height="2" fill="#2040c0" opacity="0.75"/><rect x="1256.5" y="468.0" width="2" height="1.5" fill="#2040c0" opacity="0.75"/><rect x="1253.1" y="460.4" width="3" height="2" fill="#2040c0" opacity="0.75"/><rect x="1239.3" y="467.1" width="1.5" height="1.5" fill="#2040c0" opacity="0.75"/><rect x="1244.5" y="473.9" width="1.5" height="1.5" fill="#2040c0" opacity="0.75"/><rect x="1245.6" y="473.0" width="2" height="2" fill="#2040c0" opacity="0.75"/><rect x="1244.8" y="466.0" width="2" height="3" fill="#2040c0" opacity="0.75"/><rect x="1248.6" y="465.6" width="1.5" height="3" fill="#2040c0" opacity="0.75"/><rect x="1248.3" y="468.5" width="2" height="2" fill="#2040c0" opacity="0.75"/><rect x="1250.0" y="456.2" width="2" height="3" fill="#2040c0" opacity="0.75"/><rect x="1251.9" y="471.9" width="1.5" height="3" fill="#2040c0" opacity="0.75"/><rect x="1239.7" y="464.5" width="3" height="1.5" fill="#2040c0" opacity="0.75"/><rect x="1241.7" y="472.0" width="3" height="2" fill="#2040c0" opacity="0.75"/><rect x="1244.1" y="458.4" width="2" height="3" fill="#2040c0" opacity="0.75"/><rect x="1251.8" y="469.1" width="1.5" height="1.5" fill="#2040c0" opacity="0.75"/><ellipse cx="1224" cy="416" rx="27.5" ry="13" fill="url(#hl)"/><circle cx="767" cy="510" r="47" fill="#5a5a5a" opacity="0.9" filter="url(#blur)"/><circle cx="767" cy="503" r="47" fill="url(#gC25)" stroke="#14882a" stroke-width="1.3"/><rect x="776.5" y="489.2" width="2" height="3" fill="#2a7a5a" opacity="0.75"/><rect x="761.3" y="520.5" width="3" height="3" fill="#2a7a5a" opacity="0.75"/><rect x="768.9" y="506.0" width="3" height="3" fill="#2a7a5a" opacity="0.75"/><rect x="763.0" y="485.4" width="1.5" height="2" fill="#2a7a5a" opacity="0.75"/><rect x="794.1" y="513.0" width="3" height="1.5" fill="#2a7a5a" opacity="0.75"/><rect x="749.4" y="500.6" width="2" height="2" fill="#2a7a5a" opacity="0.75"/><rect x="745.6" y="504.9" width="1.5" height="3" fill="#2a7a5a" opacity="0.75"/><rect x="772.3" y="538.8" width="2" height="2" fill="#2a7a5a" opacity="0.75"/><rect x="752.4" y="509.4" width="2" height="1.5" fill="#2a7a5a" opacity="0.75"/><rect x="783.0" y="492.7" width="1.5" height="3" fill="#2a7a5a" opacity="0.75"/><rect x="785.1" y="526.0" width="2" height="1.5" fill="#2a7a5a" opacity="0.75"/><rect x="760.2" y="540.3" width="2" height="2" fill="#2a7a5a" opacity="0.75"/><rect x="751.2" y="520.3" width="2" height="1.5" fill="#2a7a5a" opacity="0.75"/><rect x="758.2" y="541.5" width="3" height="2" fill="#2a7a5a" opacity="0.75"/><rect x="743.5" y="510.6" width="2" height="2" fill="#2a7a5a" opacity="0.75"/><rect x="792.0" y="505.3" width="2" height="1.5" fill="#2a7a5a" opacity="0.75"/><rect x="783.8" y="488.7" width="1.5" height="1.5" fill="#2a7a5a" opacity="0.75"/><rect x="744.3" y="500.9" width="3" height="2" fill="#2a7a5a" opacity="0.75"/><rect x="771.1" y="506.0" width="1.5" height="1.5" fill="#2a7a5a" opacity="0.75"/><rect x="773.3" y="487.4" width="1.5" height="2" fill="#2a7a5a" opacity="0.75"/><rect x="755.8" y="531.0" width="2" height="3" fill="#2a7a5a" opacity="0.75"/><rect x="762.6" y="486.5" width="2" height="2" fill="#2a7a5a" opacity="0.75"/><rect x="767.6" y="488.0" width="2" height="2" fill="#2a7a5a" opacity="0.75"/><rect x="767.0" y="542.5" width="3" height="3" fill="#2a7a5a" opacity="0.75"/><rect x="794.8" y="503.6" width="2" height="2" fill="#2a7a5a" opacity="0.75"/><rect x="794.7" y="513.8" width="3" height="1.5" fill="#2a7a5a" opacity="0.75"/><rect x="795.9" y="520.5" width="3" height="2" fill="#2a7a5a" opacity="0.75"/><rect x="793.1" y="518.6" width="2" height="1.5" fill="#2a7a5a" opacity="0.75"/><rect x="781.3" y="514.1" width="3" height="1.5" fill="#2a7a5a" opacity="0.75"/><rect x="794.7" y="496.4" width="2" height="3" fill="#2a7a5a" opacity="0.75"/><rect x="772.9" y="528.6" width="3" height="1.5" fill="#2a7a5a" opacity="0.75"/><rect x="768.4" y="503.6" width="3" height="1.5" fill="#2a7a5a" opacity="0.75"/><rect x="789.5" y="503.0" width="3" height="1.5" fill="#2a7a5a" opacity="0.75"/><rect x="750.5" y="498.3" width="2" height="2" fill="#2a7a5a" opacity="0.75"/><rect x="763.5" y="538.3" width="2" height="2" fill="#2a7a5a" opacity="0.75"/><rect x="750.2" y="525.5" width="2" height="1.5" fill="#2a7a5a" opacity="0.75"/><rect x="779.1" y="484.1" width="2" height="2" fill="#2a7a5a" opacity="0.75"/><rect x="762.4" y="534.7" width="2" height="1.5" fill="#2a7a5a" opacity="0.75"/><rect x="755.4" y="490.7" width="1.5" height="2" fill="#2a7a5a" opacity="0.75"/><rect x="737.8" y="506.3" width="1.5" height="3" fill="#2a7a5a" opacity="0.75"/><rect x="757.0" y="511.3" width="2" height="2" fill="#2a7a5a" opacity="0.75"/><rect x="780.6" y="511.2" width="2" height="1.5" fill="#2a7a5a" opacity="0.75"/><rect x="777.2" y="507.1" width="3" height="2" fill="#2a7a5a" opacity="0.75"/><rect x="779.5" y="488.0" width="1.5" height="2" fill="#2a7a5a" opacity="0.75"/><rect x="755.9" y="507.1" width="2" height="1.5" fill="#2a7a5a" opacity="0.75"/><rect x="754.5" y="527.1" width="3" height="3" fill="#2a7a5a" opacity="0.75"/><rect x="763.7" y="496.7" width="3" height="1.5" fill="#2a7a5a" opacity="0.75"/><rect x="784.6" y="521.6" width="1.5" height="2" fill="#2a7a5a" opacity="0.75"/><rect x="772.2" y="518.7" width="2" height="3" fill="#2a7a5a" opacity="0.75"/><rect x="739.0" y="518.6" width="3" height="2" fill="#2a7a5a" opacity="0.75"/><rect x="755.5" y="505.9" width="2" height="3" fill="#2a7a5a" opacity="0.75"/><rect x="737.2" y="489.4" width="2" height="2" fill="#2a7a5a" opacity="0.75"/><rect x="737.4" y="486.2" width="2" height="3" fill="#2a7a5a" opacity="0.75"/><rect x="768.2" y="541.0" width="2" height="1.5" fill="#2a7a5a" opacity="0.75"/><rect x="776.3" y="497.0" width="2" height="1.5" fill="#2a7a5a" opacity="0.75"/><rect x="750.3" y="511.9" width="3" height="2" fill="#2a7a5a" opacity="0.75"/><rect x="737.3" y="504.4" width="1.5" height="2" fill="#2a7a5a" opacity="0.75"/><rect x="777.4" y="488.7" width="1.5" height="3" fill="#2a7a5a" opacity="0.75"/><rect x="744.2" y="500.2" width="2" height="1.5" fill="#2a7a5a" opacity="0.75"/><rect x="759.9" y="535.6" width="2" height="1.5" fill="#2a7a5a" opacity="0.75"/><rect x="795.5" y="523.9" width="2" height="3" fill="#2a7a5a" opacity="0.75"/><rect x="761.0" y="521.5" width="3" height="2" fill="#2a7a5a" opacity="0.75"/><rect x="786.3" y="491.4" width="2" height="2" fill="#2a7a5a" opacity="0.75"/><rect x="751.2" y="492.9" width="2" height="2" fill="#2a7a5a" opacity="0.75"/><rect x="775.8" y="496.9" width="2" height="3" fill="#2a7a5a" opacity="0.75"/><rect x="786.8" y="497.1" width="2" height="2" fill="#2a7a5a" opacity="0.75"/><rect x="771.0" y="505.2" width="3" height="3" fill="#2a7a5a" opacity="0.75"/><rect x="776.1" y="521.4" width="1.5" height="3" fill="#2a7a5a" opacity="0.75"/><rect x="764.7" y="523.2" width="3" height="3" fill="#2a7a5a" opacity="0.75"/><rect x="760.1" y="531.6" width="1.5" height="1.5" fill="#2a7a5a" opacity="0.75"/><rect x="739.5" y="515.3" width="2" height="3" fill="#2a7a5a" opacity="0.75"/><rect x="790.9" y="489.1" width="2" height="3" fill="#2a7a5a" opacity="0.75"/><rect x="757.6" y="499.6" width="2" height="3" fill="#2a7a5a" opacity="0.75"/><rect x="763.6" y="540.1" width="1.5" height="1.5" fill="#2a7a5a" opacity="0.75"/><rect x="740.9" y="515.5" width="1.5" height="1.5" fill="#2a7a5a" opacity="0.75"/><rect x="738.3" y="518.0" width="2" height="1.5" fill="#2a7a5a" opacity="0.75"/><rect x="781.6" y="523.7" width="3" height="2" fill="#2a7a5a" opacity="0.75"/><rect x="792.1" y="495.4" width="2" height="2" fill="#2a7a5a" opacity="0.75"/><rect x="759.4" y="540.5" width="3" height="2" fill="#2a7a5a" opacity="0.75"/><rect x="750.4" y="514.1" width="1.5" height="1.5" fill="#2a7a5a" opacity="0.75"/><rect x="749.0" y="487.2" width="1.5" height="2" fill="#2a7a5a" opacity="0.75"/><rect x="770.6" y="492.0" width="2" height="1.5" fill="#2a7a5a" opacity="0.75"/><rect x="797.0" y="515.3" width="3" height="2" fill="#2a7a5a" opacity="0.75"/><rect x="789.7" y="493.7" width="3" height="1.5" fill="#2a7a5a" opacity="0.75"/><rect x="794.7" y="494.2" width="3" height="3" fill="#2a7a5a" opacity="0.75"/><rect x="796.3" y="490.8" width="2" height="3" fill="#2a7a5a" opacity="0.75"/><rect x="776.0" y="526.6" width="2" height="2" fill="#2a7a5a" opacity="0.75"/><rect x="764.5" y="530.0" width="2" height="2" fill="#2a7a5a" opacity="0.75"/><rect x="742.0" y="506.6" width="2" height="1.5" fill="#2a7a5a" opacity="0.75"/><rect x="740.1" y="518.3" width="2" height="2" fill="#2a7a5a" opacity="0.75"/><rect x="759.9" y="499.9" width="1.5" height="3" fill="#2a7a5a" opacity="0.75"/><rect x="765.3" y="538.7" width="2" height="3" fill="#2a7a5a" opacity="0.75"/><rect x="778.7" y="497.8" width="1.5" height="2" fill="#2a7a5a" opacity="0.75"/><rect x="771.5" y="493.9" width="2" height="3" fill="#2a7a5a" opacity="0.75"/><rect x="789.1" y="511.6" width="2" height="3" fill="#2a7a5a" opacity="0.75"/><rect x="773.9" y="497.6" width="3" height="2" fill="#2a7a5a" opacity="0.75"/><rect x="753.8" y="540.5" width="2" height="2" fill="#2a7a5a" opacity="0.75"/><rect x="742.0" y="485.2" width="1.5" height="1.5" fill="#2a7a5a" opacity="0.75"/><rect x="764.7" y="502.6" width="2" height="1.5" fill="#2a7a5a" opacity="0.75"/><rect x="787.4" y="505.9" width="3" height="1.5" fill="#2a7a5a" opacity="0.75"/><rect x="765.9" y="488.9" width="3" height="3" fill="#2a7a5a" opacity="0.75"/><rect x="779.7" y="493.1" width="3" height="2" fill="#2a7a5a" opacity="0.75"/><rect x="789.4" y="522.0" width="2" height="2" fill="#2a7a5a" opacity="0.75"/><rect x="793.4" y="520.6" width="1.5" height="2" fill="#2a7a5a" opacity="0.75"/><rect x="765.5" y="516.6" width="1.5" height="3" fill="#2a7a5a" opacity="0.75"/><rect x="739.7" y="520.7" width="1.5" height="1.5" fill="#2a7a5a" opacity="0.75"/><rect x="796.8" y="514.0" width="1.5" height="2" fill="#2a7a5a" opacity="0.75"/><rect x="753.4" y="485.3" width="3" height="2" fill="#2a7a5a" opacity="0.75"/><rect x="763.3" y="515.6" width="3" height="2" fill="#2a7a5a" opacity="0.75"/><rect x="738.6" y="511.2" width="2" height="2" fill="#2a7a5a" opacity="0.75"/><rect x="743.6" y="533.6" width="2" height="1.5" fill="#2a7a5a" opacity="0.75"/><rect x="794.0" y="526.4" width="3" height="1.5" fill="#2a7a5a" opacity="0.75"/><rect x="792.4" y="526.1" width="2" height="1.5" fill="#2a7a5a" opacity="0.75"/><rect x="761.5" y="527.1" width="3" height="1.5" fill="#2a7a5a" opacity="0.75"/><rect x="759.0" y="538.2" width="2" height="2" fill="#2a7a5a" opacity="0.75"/><rect x="784.4" y="496.6" width="3" height="1.5" fill="#2a7a5a" opacity="0.75"/><rect x="767.0" y="509.3" width="2" height="3" fill="#2a7a5a" opacity="0.75"/><rect x="744.4" y="487.4" width="2" height="3" fill="#2a7a5a" opacity="0.75"/><rect x="785.8" y="536.4" width="2" height="1.5" fill="#2a7a5a" opacity="0.75"/><rect x="763.3" y="494.8" width="2" height="3" fill="#2a7a5a" opacity="0.75"/><rect x="782.4" y="506.0" width="2" height="1.5" fill="#2a7a5a" opacity="0.75"/><rect x="752.9" y="517.3" width="3" height="1.5" fill="#2a7a5a" opacity="0.75"/><rect x="796.9" y="511.4" width="1.5" height="1.5" fill="#2a7a5a" opacity="0.75"/><rect x="746.6" y="534.7" width="3" height="2" fill="#2a7a5a" opacity="0.75"/><rect x="785.6" y="514.5" width="1.5" height="1.5" fill="#2a7a5a" opacity="0.75"/><rect x="778.4" y="508.3" width="1.5" height="1.5" fill="#2a7a5a" opacity="0.75"/><rect x="775.0" y="529.6" width="1.5" height="2" fill="#2a7a5a" opacity="0.75"/><rect x="753.5" y="509.6" width="3" height="1.5" fill="#2a7a5a" opacity="0.75"/><rect x="778.8" y="523.0" width="2" height="3" fill="#2a7a5a" opacity="0.75"/><rect x="743.4" y="497.8" width="2" height="1.5" fill="#2a7a5a" opacity="0.75"/><rect x="795.9" y="502.1" width="1.5" height="2" fill="#2a7a5a" opacity="0.75"/><rect x="789.4" y="515.1" width="3" height="1.5" fill="#2a7a5a" opacity="0.75"/><rect x="789.8" y="496.6" width="2" height="3" fill="#2a7a5a" opacity="0.75"/><rect x="762.0" y="518.4" width="1.5" height="1.5" fill="#2a7a5a" opacity="0.75"/><rect x="778.1" y="518.0" width="2" height="3" fill="#2a7a5a" opacity="0.75"/><rect x="786.1" y="518.3" width="1.5" height="2" fill="#2a7a5a" opacity="0.75"/><rect x="794.0" y="500.8" width="2" height="2" fill="#2a7a5a" opacity="0.75"/><rect x="749.8" y="533.7" width="2" height="1.5" fill="#2a7a5a" opacity="0.75"/><rect x="771.7" y="504.9" width="2" height="1.5" fill="#2a7a5a" opacity="0.75"/><rect x="772.1" y="514.8" width="2" height="1.5" fill="#2a7a5a" opacity="0.75"/><rect x="751.0" y="500.4" width="1.5" height="1.5" fill="#2a7a5a" opacity="0.75"/><rect x="770.9" y="491.5" width="3" height="3" fill="#2a7a5a" opacity="0.75"/><rect x="760.5" y="522.0" width="2" height="3" fill="#2a7a5a" opacity="0.75"/><rect x="754.5" y="522.9" width="3" height="1.5" fill="#2a7a5a" opacity="0.75"/><rect x="742.6" y="496.3" width="2" height="2" fill="#2a7a5a" opacity="0.75"/><rect x="748.3" y="489.8" width="2" height="2" fill="#2a7a5a" opacity="0.75"/><rect x="762.5" y="521.8" width="3" height="3" fill="#2a7a5a" opacity="0.75"/><rect x="774.3" y="532.6" width="2" height="1.5" fill="#2a7a5a" opacity="0.75"/><rect x="748.1" y="537.8" width="3" height="1.5" fill="#2a7a5a" opacity="0.75"/><rect x="742.7" y="526.8" width="2" height="2" fill="#2a7a5a" opacity="0.75"/><rect x="754.6" y="536.2" width="3" height="2" fill="#2a7a5a" opacity="0.75"/><rect x="748.7" y="487.0" width="2" height="1.5" fill="#2a7a5a" opacity="0.75"/><rect x="759.0" y="491.8" width="1.5" height="2" fill="#2a7a5a" opacity="0.75"/><rect x="764.3" y="495.6" width="2" height="3" fill="#2a7a5a" opacity="0.75"/><rect x="771.3" y="499.2" width="2" height="1.5" fill="#2a7a5a" opacity="0.75"/><rect x="751.9" y="501.2" width="2" height="3" fill="#2a7a5a" opacity="0.75"/><rect x="784.9" y="494.7" width="2" height="2" fill="#2a7a5a" opacity="0.75"/><rect x="750.7" y="511.0" width="3" height="2" fill="#2a7a5a" opacity="0.75"/><rect x="787.2" y="509.1" width="2" height="1.5" fill="#2a7a5a" opacity="0.75"/><rect x="746.3" y="517.8" width="3" height="3" fill="#2a7a5a" opacity="0.75"/><rect x="773.3" y="503.8" width="2" height="2" fill="#2a7a5a" opacity="0.75"/><rect x="738.1" y="493.5" width="1.5" height="2" fill="#2a7a5a" opacity="0.75"/><rect x="770.2" y="537.7" width="2" height="1.5" fill="#2a7a5a" opacity="0.75"/><rect x="737.3" y="501.2" width="2" height="1.5" fill="#2a7a5a" opacity="0.75"/><rect x="782.5" y="539.1" width="2" height="3" fill="#2a7a5a" opacity="0.75"/><rect x="767.1" y="487.2" width="1.5" height="3" fill="#2a7a5a" opacity="0.75"/><rect x="776.8" y="497.5" width="2" height="3" fill="#2a7a5a" opacity="0.75"/><rect x="762.0" y="518.0" width="3" height="1.5" fill="#2a7a5a" opacity="0.75"/><rect x="783.6" y="535.0" width="3" height="2" fill="#2a7a5a" opacity="0.75"/><rect x="784.9" y="512.1" width="2" height="1.5" fill="#2a7a5a" opacity="0.75"/><rect x="746.7" y="490.4" width="1.5" height="2" fill="#2a7a5a" opacity="0.75"/><rect x="759.0" y="497.0" width="3" height="1.5" fill="#2a7a5a" opacity="0.75"/><rect x="751.5" y="538.6" width="1.5" height="3" fill="#2a7a5a" opacity="0.75"/><rect x="778.9" y="520.7" width="2" height="3" fill="#2a7a5a" opacity="0.75"/><rect x="775.7" y="533.2" width="3" height="3" fill="#2a7a5a" opacity="0.75"/><rect x="740.2" y="524.8" width="3" height="3" fill="#2a7a5a" opacity="0.75"/><rect x="793.9" y="526.8" width="2" height="3" fill="#2a7a5a" opacity="0.75"/><rect x="744.9" y="523.1" width="3" height="2" fill="#2a7a5a" opacity="0.75"/><rect x="790.9" y="499.2" width="2" height="2" fill="#2a7a5a" opacity="0.75"/><rect x="784.4" y="529.4" width="2" height="2" fill="#2a7a5a" opacity="0.75"/><rect x="762.3" y="529.2" width="3" height="2" fill="#2a7a5a" opacity="0.75"/><rect x="742.4" y="532.4" width="3" height="2" fill="#2a7a5a" opacity="0.75"/><rect x="770.0" y="493.4" width="1.5" height="1.5" fill="#2a7a5a" opacity="0.75"/><rect x="783.3" y="527.1" width="3" height="2" fill="#2a7a5a" opacity="0.75"/><rect x="775.5" y="503.0" width="3" height="1.5" fill="#2a7a5a" opacity="0.75"/><rect x="751.7" y="504.9" width="3" height="1.5" fill="#2a7a5a" opacity="0.75"/><rect x="777.8" y="520.9" width="2" height="1.5" fill="#2a7a5a" opacity="0.75"/><rect x="754.2" y="504.4" width="2" height="2" fill="#2a7a5a" opacity="0.75"/><rect x="754.8" y="501.6" width="2" height="3" fill="#2a7a5a" opacity="0.75"/><rect x="740.9" y="506.2" width="3" height="1.5" fill="#2a7a5a" opacity="0.75"/><rect x="786.3" y="501.8" width="1.5" height="3" fill="#2a7a5a" opacity="0.75"/><rect x="751.4" y="500.2" width="2" height="1.5" fill="#2a7a5a" opacity="0.75"/><ellipse cx="767" cy="473" rx="27.5" ry="13" fill="url(#hl)"/><circle cx="969" cy="552" r="47" fill="#5a5a5a" opacity="0.9" filter="url(#blur)"/><circle cx="969" cy="545" r="47" fill="url(#gK1)" stroke="#b5b000" stroke-width="1.3"/><rect x="949.8" y="544.2" width="3" height="1.5" fill="#e08020" opacity="0.75"/><rect x="952.4" y="541.4" width="2" height="1.5" fill="#e08020" opacity="0.75"/><rect x="958.0" y="525.4" width="2" height="2" fill="#e08020" opacity="0.75"/><rect x="959.0" y="563.1" width="2" height="1.5" fill="#e08020" opacity="0.75"/><rect x="962.7" y="563.2" width="2" height="1.5" fill="#e08020" opacity="0.75"/><rect x="965.8" y="557.3" width="1.5" height="2" fill="#e08020" opacity="0.75"/><rect x="952.7" y="550.1" width="2" height="1.5" fill="#e08020" opacity="0.75"/><rect x="962.5" y="539.5" width="3" height="1.5" fill="#e08020" opacity="0.75"/><rect x="949.4" y="541.9" width="2" height="3" fill="#e08020" opacity="0.75"/><rect x="947.8" y="526.8" width="1.5" height="1.5" fill="#e08020" opacity="0.75"/><rect x="954.7" y="534.4" width="2" height="2" fill="#e08020" opacity="0.75"/><rect x="948.1" y="543.4" width="1.5" height="1.5" fill="#e08020" opacity="0.75"/><rect x="960.0" y="554.1" width="1.5" height="2" fill="#e08020" opacity="0.75"/><rect x="964.3" y="544.7" width="3" height="3" fill="#e08020" opacity="0.75"/><rect x="962.9" y="543.2" width="1.5" height="2" fill="#e08020" opacity="0.75"/><rect x="958.6" y="563.7" width="2" height="2" fill="#e08020" opacity="0.75"/><rect x="965.9" y="526.3" width="1.5" height="3" fill="#e08020" opacity="0.75"/><rect x="958.5" y="549.2" width="3" height="3" fill="#e08020" opacity="0.75"/><rect x="959.1" y="557.6" width="1.5" height="1.5" fill="#e08020" opacity="0.75"/><rect x="948.6" y="553.3" width="1.5" height="1.5" fill="#e08020" opacity="0.75"/><rect x="939.3" y="550.0" width="1.5" height="3" fill="#e08020" opacity="0.75"/><rect x="959.6" y="562.6" width="3" height="1.5" fill="#e08020" opacity="0.75"/><rect x="966.0" y="552.7" width="2" height="1.5" fill="#e08020" opacity="0.75"/><rect x="956.5" y="534.6" width="2" height="1.5" fill="#e08020" opacity="0.75"/><rect x="942.1" y="530.9" width="3" height="2" fill="#e08020" opacity="0.75"/><rect x="940.2" y="543.6" width="3" height="2" fill="#e08020" opacity="0.75"/><rect x="946.8" y="527.4" width="2" height="2" fill="#e08020" opacity="0.75"/><rect x="959.0" y="562.0" width="3" height="1.5" fill="#e08020" opacity="0.75"/><rect x="963.4" y="529.5" width="1.5" height="2" fill="#e08020" opacity="0.75"/><rect x="942.5" y="542.4" width="3" height="1.5" fill="#e08020" opacity="0.75"/><rect x="942.8" y="530.2" width="3" height="2" fill="#e08020" opacity="0.75"/><rect x="954.0" y="540.8" width="2" height="3" fill="#e08020" opacity="0.75"/><rect x="953.9" y="532.0" width="3" height="1.5" fill="#e08020" opacity="0.75"/><rect x="958.7" y="558.9" width="3" height="2" fill="#e08020" opacity="0.75"/><rect x="956.2" y="564.0" width="1.5" height="2" fill="#e08020" opacity="0.75"/><rect x="961.1" y="534.7" width="3" height="1.5" fill="#e08020" opacity="0.75"/><rect x="956.7" y="545.1" width="3" height="3" fill="#e08020" opacity="0.75"/><rect x="941.4" y="550.3" width="1.5" height="3" fill="#e08020" opacity="0.75"/><rect x="958.8" y="527.3" width="1.5" height="2" fill="#e08020" opacity="0.75"/><rect x="960.8" y="527.1" width="2" height="3" fill="#e08020" opacity="0.75"/><rect x="944.1" y="553.4" width="3" height="2" fill="#e08020" opacity="0.75"/><rect x="950.7" y="533.9" width="3" height="1.5" fill="#e08020" opacity="0.75"/><rect x="960.6" y="550.2" width="2" height="2" fill="#e08020" opacity="0.75"/><rect x="950.9" y="549.9" width="1.5" height="2" fill="#e08020" opacity="0.75"/><rect x="966.1" y="525.9" width="1.5" height="1.5" fill="#e08020" opacity="0.75"/><rect x="959.0" y="546.4" width="2" height="1.5" fill="#e08020" opacity="0.75"/><rect x="954.1" y="558.8" width="2" height="3" fill="#e08020" opacity="0.75"/><rect x="939.8" y="549.5" width="2" height="2" fill="#e08020" opacity="0.75"/><rect x="956.4" y="539.0" width="3" height="3" fill="#e08020" opacity="0.75"/><rect x="960.6" y="531.9" width="2" height="1.5" fill="#e08020" opacity="0.75"/><rect x="941.8" y="540.0" width="2" height="3" fill="#e08020" opacity="0.75"/><rect x="963.4" y="563.1" width="2" height="1.5" fill="#e08020" opacity="0.75"/><rect x="944.6" y="549.5" width="1.5" height="3" fill="#e08020" opacity="0.75"/><rect x="967.4" y="534.2" width="2" height="3" fill="#e08020" opacity="0.75"/><rect x="952.1" y="532.3" width="1.5" height="2" fill="#e08020" opacity="0.75"/><rect x="941.4" y="526.3" width="2" height="1.5" fill="#e08020" opacity="0.75"/><rect x="959.4" y="556.2" width="2" height="2" fill="#e08020" opacity="0.75"/><rect x="940.3" y="539.2" width="3" height="2" fill="#e08020" opacity="0.75"/><rect x="946.8" y="549.4" width="2" height="2" fill="#e08020" opacity="0.75"/><rect x="961.3" y="540.0" width="1.5" height="2" fill="#e08020" opacity="0.75"/><rect x="944.8" y="528.2" width="3" height="2" fill="#e08020" opacity="0.75"/><rect x="965.6" y="527.2" width="2" height="2" fill="#e08020" opacity="0.75"/><rect x="962.2" y="551.7" width="2" height="1.5" fill="#e08020" opacity="0.75"/><rect x="954.5" y="541.2" width="1.5" height="3" fill="#e08020" opacity="0.75"/><rect x="943.4" y="534.4" width="2" height="1.5" fill="#e08020" opacity="0.75"/><rect x="951.1" y="540.0" width="3" height="3" fill="#e08020" opacity="0.75"/><rect x="992.9" y="547.4" width="1.5" height="1.5" fill="#90c030" opacity="0.75"/><rect x="994.9" y="525.0" width="2" height="3" fill="#90c030" opacity="0.75"/><rect x="982.3" y="555.7" width="3" height="1.5" fill="#90c030" opacity="0.75"/><rect x="961.1" y="570.0" width="1.5" height="1.5" fill="#90c030" opacity="0.75"/><rect x="971.6" y="555.7" width="2" height="2" fill="#90c030" opacity="0.75"/><rect x="964.9" y="546.5" width="2" height="3" fill="#90c030" opacity="0.75"/><rect x="983.4" y="545.4" width="1.5" height="3" fill="#90c030" opacity="0.75"/><rect x="990.0" y="532.4" width="1.5" height="2" fill="#90c030" opacity="0.75"/><rect x="969.5" y="557.6" width="3" height="3" fill="#90c030" opacity="0.75"/><rect x="971.6" y="570.1" width="2" height="2" fill="#90c030" opacity="0.75"/><rect x="971.3" y="557.5" width="3" height="1.5" fill="#90c030" opacity="0.75"/><rect x="964.0" y="541.7" width="3" height="2" fill="#90c030" opacity="0.75"/><rect x="997.1" y="547.5" width="2" height="2" fill="#90c030" opacity="0.75"/><rect x="997.6" y="548.7" width="1.5" height="3" fill="#90c030" opacity="0.75"/><rect x="966.9" y="529.1" width="3" height="1.5" fill="#90c030" opacity="0.75"/><rect x="996.1" y="545.4" width="1.5" height="3" fill="#90c030" opacity="0.75"/><rect x="997.9" y="538.4" width="1.5" height="2" fill="#90c030" opacity="0.75"/><rect x="997.9" y="543.7" width="2" height="2" fill="#90c030" opacity="0.75"/><rect x="989.1" y="532.9" width="2" height="3" fill="#90c030" opacity="0.75"/><rect x="979.9" y="551.6" width="2" height="1.5" fill="#90c030" opacity="0.75"/><rect x="987.3" y="552.5" width="2" height="1.5" fill="#90c030" opacity="0.75"/><rect x="963.3" y="549.9" width="2" height="1.5" fill="#90c030" opacity="0.75"/><rect x="959.1" y="528.3" width="2" height="3" fill="#90c030" opacity="0.75"/><rect x="975.8" y="530.9" width="3" height="3" fill="#90c030" opacity="0.75"/><rect x="978.4" y="571.4" width="2" height="2" fill="#90c030" opacity="0.75"/><rect x="965.4" y="558.1" width="2" height="2" fill="#90c030" opacity="0.75"/><rect x="988.5" y="542.7" width="1.5" height="1.5" fill="#90c030" opacity="0.75"/><rect x="960.1" y="535.2" width="2" height="3" fill="#90c030" opacity="0.75"/><rect x="975.5" y="560.0" width="2" height="2" fill="#90c030" opacity="0.75"/><rect x="972.5" y="564.1" width="3" height="1.5" fill="#90c030" opacity="0.75"/><rect x="972.4" y="548.0" width="1.5" height="2" fill="#90c030" opacity="0.75"/><rect x="959.9" y="575.0" width="3" height="3" fill="#90c030" opacity="0.75"/><rect x="975.4" y="554.5" width="2" height="3" fill="#90c030" opacity="0.75"/><rect x="968.6" y="537.3" width="2" height="1.5" fill="#90c030" opacity="0.75"/><rect x="965.8" y="536.0" width="3" height="1.5" fill="#90c030" opacity="0.75"/><rect x="978.9" y="531.5" width="2" height="2" fill="#90c030" opacity="0.75"/><rect x="977.8" y="572.4" width="2" height="3" fill="#90c030" opacity="0.75"/><rect x="972.4" y="539.6" width="1.5" height="2" fill="#90c030" opacity="0.75"/><rect x="994.0" y="566.0" width="2" height="3" fill="#90c030" opacity="0.75"/><rect x="984.7" y="556.9" width="1.5" height="1.5" fill="#90c030" opacity="0.75"/><rect x="994.3" y="572.9" width="2" height="1.5" fill="#90c030" opacity="0.75"/><rect x="982.5" y="569.7" width="2" height="3" fill="#90c030" opacity="0.75"/><rect x="968.4" y="571.7" width="2" height="1.5" fill="#90c030" opacity="0.75"/><rect x="977.4" y="570.9" width="2" height="2" fill="#90c030" opacity="0.75"/><rect x="986.8" y="564.0" width="2" height="1.5" fill="#90c030" opacity="0.75"/><rect x="997.8" y="539.1" width="2" height="2" fill="#90c030" opacity="0.75"/><rect x="992.1" y="531.0" width="1.5" height="2" fill="#90c030" opacity="0.75"/><rect x="961.1" y="556.6" width="2" height="2" fill="#90c030" opacity="0.75"/><rect x="974.9" y="532.8" width="2" height="3" fill="#90c030" opacity="0.75"/><rect x="961.4" y="542.4" width="1.5" height="1.5" fill="#90c030" opacity="0.75"/><rect x="973.1" y="558.3" width="2" height="2" fill="#90c030" opacity="0.75"/><rect x="976.2" y="540.3" width="1.5" height="1.5" fill="#90c030" opacity="0.75"/><rect x="983.5" y="569.7" width="1.5" height="3" fill="#90c030" opacity="0.75"/><rect x="964.3" y="572.5" width="2" height="3" fill="#90c030" opacity="0.75"/><rect x="995.1" y="556.2" width="2" height="1.5" fill="#90c030" opacity="0.75"/><rect x="983.3" y="565.1" width="3" height="3" fill="#90c030" opacity="0.75"/><rect x="968.9" y="532.1" width="2" height="1.5" fill="#90c030" opacity="0.75"/><rect x="962.9" y="572.7" width="2" height="3" fill="#90c030" opacity="0.75"/><rect x="991.4" y="536.7" width="1.5" height="3" fill="#90c030" opacity="0.75"/><rect x="963.2" y="529.3" width="1.5" height="1.5" fill="#90c030" opacity="0.75"/><rect x="995.2" y="574.3" width="3" height="2" fill="#90c030" opacity="0.75"/><rect x="973.5" y="536.6" width="2" height="1.5" fill="#90c030" opacity="0.75"/><rect x="972.7" y="542.4" width="3" height="3" fill="#90c030" opacity="0.75"/><rect x="982.7" y="552.1" width="2" height="3" fill="#90c030" opacity="0.75"/><rect x="971.1" y="560.8" width="2" height="3" fill="#90c030" opacity="0.75"/><rect x="963.3" y="546.0" width="3" height="2" fill="#90c030" opacity="0.75"/><rect x="964.7" y="537.2" width="3" height="3" fill="#90c030" opacity="0.75"/><rect x="989.3" y="557.2" width="2" height="2" fill="#90c030" opacity="0.75"/><rect x="981.0" y="528.3" width="3" height="3" fill="#90c030" opacity="0.75"/><rect x="975.5" y="525.6" width="2" height="2" fill="#90c030" opacity="0.75"/><rect x="985.4" y="574.4" width="3" height="1.5" fill="#90c030" opacity="0.75"/><rect x="996.8" y="563.6" width="2" height="2" fill="#90c030" opacity="0.75"/><rect x="962.1" y="555.8" width="2" height="3" fill="#90c030" opacity="0.75"/><rect x="992.7" y="569.3" width="1.5" height="1.5" fill="#90c030" opacity="0.75"/><rect x="976.4" y="538.6" width="3" height="1.5" fill="#90c030" opacity="0.75"/><rect x="986.2" y="541.2" width="3" height="2" fill="#90c030" opacity="0.75"/><rect x="996.0" y="570.7" width="2" height="2" fill="#90c030" opacity="0.75"/><rect x="973.4" y="540.8" width="1.5" height="1.5" fill="#90c030" opacity="0.75"/><rect x="990.8" y="561.0" width="2" height="1.5" fill="#90c030" opacity="0.75"/><rect x="983.5" y="558.7" width="2" height="3" fill="#90c030" opacity="0.75"/><rect x="973.2" y="557.9" width="2" height="3" fill="#90c030" opacity="0.75"/><rect x="983.7" y="563.7" width="1.5" height="2" fill="#90c030" opacity="0.75"/><rect x="972.7" y="555.5" width="2" height="1.5" fill="#90c030" opacity="0.75"/><rect x="986.4" y="543.6" width="3" height="2" fill="#90c030" opacity="0.75"/><rect x="983.7" y="526.9" width="2" height="2" fill="#90c030" opacity="0.75"/><rect x="981.9" y="564.7" width="2" height="1.5" fill="#90c030" opacity="0.75"/><rect x="972.8" y="562.9" width="2" height="3" fill="#90c030" opacity="0.75"/><rect x="971.3" y="565.2" width="3" height="2" fill="#90c030" opacity="0.75"/><rect x="974.3" y="568.1" width="2" height="3" fill="#90c030" opacity="0.75"/><rect x="982.8" y="568.1" width="3" height="2" fill="#90c030" opacity="0.75"/><rect x="989.7" y="569.0" width="2" height="3" fill="#90c030" opacity="0.75"/><rect x="997.5" y="540.8" width="2" height="1.5" fill="#90c030" opacity="0.75"/><rect x="989.6" y="564.0" width="2" height="2" fill="#90c030" opacity="0.75"/><rect x="980.3" y="542.8" width="2" height="1.5" fill="#90c030" opacity="0.75"/><rect x="961.6" y="548.7" width="2" height="1.5" fill="#90c030" opacity="0.75"/><rect x="986.4" y="549.4" width="3" height="3" fill="#90c030" opacity="0.75"/><rect x="973.6" y="537.2" width="2" height="3" fill="#90c030" opacity="0.75"/><rect x="975.2" y="540.8" width="2" height="3" fill="#90c030" opacity="0.75"/><rect x="972.3" y="535.9" width="2" height="2" fill="#90c030" opacity="0.75"/><rect x="971.3" y="530.2" width="1.5" height="2" fill="#90c030" opacity="0.75"/><rect x="970.6" y="563.0" width="2" height="2" fill="#90c030" opacity="0.75"/><rect x="966.9" y="565.4" width="2" height="2" fill="#90c030" opacity="0.75"/><rect x="971.2" y="528.9" width="3" height="1.5" fill="#90c030" opacity="0.75"/><rect x="985.2" y="553.2" width="2" height="3" fill="#90c030" opacity="0.75"/><rect x="980.3" y="547.0" width="1.5" height="3" fill="#90c030" opacity="0.75"/><rect x="974.3" y="561.6" width="1.5" height="3" fill="#90c030" opacity="0.75"/><rect x="972.3" y="534.6" width="3" height="3" fill="#90c030" opacity="0.75"/><rect x="976.8" y="547.3" width="3" height="1.5" fill="#90c030" opacity="0.75"/><rect x="960.0" y="563.1" width="1.5" height="2" fill="#90c030" opacity="0.75"/><rect x="983.5" y="538.8" width="1.5" height="2" fill="#90c030" opacity="0.75"/><rect x="990.6" y="575.6" width="3" height="1.5" fill="#70b060" opacity="0.75"/><rect x="985.0" y="571.2" width="1.5" height="1.5" fill="#70b060" opacity="0.75"/><rect x="984.0" y="563.9" width="2" height="2" fill="#70b060" opacity="0.75"/><rect x="993.8" y="557.8" width="2" height="1.5" fill="#70b060" opacity="0.75"/><rect x="984.3" y="546.3" width="1.5" height="1.5" fill="#70b060" opacity="0.75"/><rect x="995.6" y="558.4" width="1.5" height="2" fill="#70b060" opacity="0.75"/><rect x="1006.2" y="545.0" width="2" height="1.5" fill="#70b060" opacity="0.75"/><rect x="986.9" y="574.5" width="2" height="1.5" fill="#70b060" opacity="0.75"/><rect x="985.6" y="550.9" width="1.5" height="3" fill="#70b060" opacity="0.75"/><rect x="991.4" y="554.5" width="2" height="1.5" fill="#70b060" opacity="0.75"/><rect x="1008.2" y="552.0" width="2" height="3" fill="#70b060" opacity="0.75"/><rect x="999.6" y="564.8" width="3" height="2" fill="#70b060" opacity="0.75"/><rect x="990.3" y="577.0" width="3" height="2" fill="#70b060" opacity="0.75"/><rect x="991.1" y="555.7" width="1.5" height="1.5" fill="#70b060" opacity="0.75"/><rect x="989.9" y="573.9" width="3" height="3" fill="#70b060" opacity="0.75"/><rect x="990.4" y="554.1" width="2" height="2" fill="#70b060" opacity="0.75"/><rect x="997.0" y="548.8" width="3" height="3" fill="#70b060" opacity="0.75"/><rect x="994.5" y="557.7" width="2" height="2" fill="#70b060" opacity="0.75"/><rect x="988.1" y="554.3" width="2" height="1.5" fill="#70b060" opacity="0.75"/><rect x="1002.3" y="560.7" width="1.5" height="2" fill="#70b060" opacity="0.75"/><rect x="996.9" y="565.3" width="3" height="2" fill="#70b060" opacity="0.75"/><rect x="995.0" y="546.8" width="2" height="3" fill="#70b060" opacity="0.75"/><rect x="991.1" y="553.9" width="2" height="1.5" fill="#70b060" opacity="0.75"/><rect x="996.3" y="548.5" width="2" height="3" fill="#70b060" opacity="0.75"/><rect x="997.4" y="557.1" width="2" height="3" fill="#70b060" opacity="0.75"/><rect x="989.4" y="571.8" width="2" height="1.5" fill="#70b060" opacity="0.75"/><rect x="987.7" y="556.9" width="1.5" height="1.5" fill="#70b060" opacity="0.75"/><rect x="1003.6" y="547.3" width="1.5" height="2" fill="#70b060" opacity="0.75"/><rect x="992.1" y="565.1" width="2" height="1.5" fill="#70b060" opacity="0.75"/><rect x="989.3" y="556.1" width="2" height="1.5" fill="#70b060" opacity="0.75"/><rect x="984.5" y="553.3" width="2" height="1.5" fill="#70b060" opacity="0.75"/><rect x="999.8" y="563.1" width="2" height="3" fill="#70b060" opacity="0.75"/><rect x="999.3" y="551.9" width="2" height="2" fill="#70b060" opacity="0.75"/><rect x="998.1" y="572.2" width="3" height="1.5" fill="#70b060" opacity="0.75"/><rect x="1006.7" y="553.7" width="3" height="3" fill="#70b060" opacity="0.75"/><rect x="988.5" y="550.5" width="2" height="3" fill="#70b060" opacity="0.75"/><rect x="1003.7" y="551.3" width="2" height="3" fill="#70b060" opacity="0.75"/><rect x="1002.9" y="564.3" width="3" height="3" fill="#70b060" opacity="0.75"/><rect x="992.6" y="565.6" width="2" height="2" fill="#70b060" opacity="0.75"/><ellipse cx="969" cy="515" rx="27.5" ry="13" fill="url(#hl)"/><circle cx="1264" cy="616" r="47" fill="#5a5a5a" opacity="0.9" filter="url(#blur)"/><circle cx="1264" cy="609" r="47" fill="url(#gC6)" stroke="#545fa0" stroke-width="1.3"/><rect x="1252.5" y="604.1" width="1.5" height="2" fill="#20a080" opacity="0.75"/><rect x="1240.1" y="624.7" width="2" height="1.5" fill="#20a080" opacity="0.75"/><rect x="1258.0" y="623.2" width="1.5" height="3" fill="#20a080" opacity="0.75"/><rect x="1270.2" y="624.4" width="3" height="3" fill="#20a080" opacity="0.75"/><rect x="1251.6" y="632.6" width="2" height="3" fill="#20a080" opacity="0.75"/><rect x="1262.2" y="615.2" width="2" height="3" fill="#20a080" opacity="0.75"/><rect x="1273.0" y="608.2" width="1.5" height="3" fill="#20a080" opacity="0.75"/><rect x="1259.9" y="618.1" width="2" height="3" fill="#20a080" opacity="0.75"/><rect x="1246.9" y="608.5" width="2" height="2" fill="#20a080" opacity="0.75"/><rect x="1250.9" y="604.1" width="3" height="2" fill="#20a080" opacity="0.75"/><rect x="1259.1" y="628.2" width="3" height="3" fill="#20a080" opacity="0.75"/><rect x="1247.6" y="613.3" width="1.5" height="3" fill="#20a080" opacity="0.75"/><rect x="1260.9" y="628.2" width="1.5" height="3" fill="#20a080" opacity="0.75"/><rect x="1260.1" y="616.0" width="3" height="3" fill="#20a080" opacity="0.75"/><rect x="1253.9" y="605.7" width="2" height="1.5" fill="#20a080" opacity="0.75"/><rect x="1268.5" y="615.3" width="3" height="3" fill="#20a080" opacity="0.75"/><rect x="1271.6" y="615.9" width="2" height="1.5" fill="#20a080" opacity="0.75"/><rect x="1242.8" y="615.4" width="3" height="2" fill="#20a080" opacity="0.75"/><rect x="1242.6" y="615.0" width="3" height="3" fill="#20a080" opacity="0.75"/><rect x="1235.0" y="608.4" width="2" height="2" fill="#20a080" opacity="0.75"/><rect x="1257.3" y="621.8" width="2" height="2" fill="#20a080" opacity="0.75"/><rect x="1266.9" y="607.8" width="2" height="3" fill="#20a080" opacity="0.75"/><rect x="1240.1" y="630.0" width="3" height="2" fill="#20a080" opacity="0.75"/><rect x="1238.3" y="624.4" width="1.5" height="3" fill="#20a080" opacity="0.75"/><rect x="1248.0" y="611.8" width="2" height="3" fill="#20a080" opacity="0.75"/><rect x="1259.5" y="611.3" width="3" height="3" fill="#20a080" opacity="0.75"/><rect x="1254.3" y="606.0" width="3" height="3" fill="#20a080" opacity="0.75"/><rect x="1246.9" y="630.3" width="2" height="1.5" fill="#20a080" opacity="0.75"/><rect x="1273.9" y="605.8" width="2" height="3" fill="#20a080" opacity="0.75"/><rect x="1271.2" y="629.5" width="1.5" height="1.5" fill="#20a080" opacity="0.75"/><rect x="1262.4" y="608.6" width="2" height="1.5" fill="#20a080" opacity="0.75"/><rect x="1235.3" y="606.3" width="1.5" height="2" fill="#20a080" opacity="0.75"/><rect x="1261.6" y="607.7" width="2" height="3" fill="#20a080" opacity="0.75"/><rect x="1255.5" y="621.0" width="3" height="2" fill="#20a080" opacity="0.75"/><rect x="1240.5" y="606.7" width="2" height="1.5" fill="#20a080" opacity="0.75"/><rect x="1236.4" y="625.3" width="2" height="1.5" fill="#20a080" opacity="0.75"/><rect x="1237.3" y="619.7" width="2" height="2" fill="#20a080" opacity="0.75"/><rect x="1271.5" y="629.5" width="3" height="2" fill="#20a080" opacity="0.75"/><rect x="1238.9" y="628.4" width="2" height="1.5" fill="#20a080" opacity="0.75"/><rect x="1273.2" y="627.1" width="2" height="2" fill="#20a080" opacity="0.75"/><rect x="1271.3" y="608.1" width="1.5" height="3" fill="#20a080" opacity="0.75"/><rect x="1272.7" y="624.6" width="2" height="2" fill="#20a080" opacity="0.75"/><rect x="1270.8" y="611.1" width="3" height="1.5" fill="#20a080" opacity="0.75"/><rect x="1245.9" y="624.2" width="2" height="1.5" fill="#20a080" opacity="0.75"/><rect x="1264.6" y="615.7" width="2" height="3" fill="#20a080" opacity="0.75"/><rect x="1242.6" y="613.1" width="3" height="2" fill="#20a080" opacity="0.75"/><rect x="1263.5" y="631.1" width="2" height="2" fill="#20a080" opacity="0.75"/><rect x="1246.4" y="629.3" width="1.5" height="3" fill="#20a080" opacity="0.75"/><rect x="1252.7" y="609.9" width="2" height="2" fill="#20a080" opacity="0.75"/><rect x="1272.4" y="622.0" width="2" height="2" fill="#20a080" opacity="0.75"/><rect x="1237.6" y="624.6" width="1.5" height="2" fill="#20a080" opacity="0.75"/><rect x="1248.3" y="627.4" width="2" height="2" fill="#20a080" opacity="0.75"/><rect x="1271.2" y="617.6" width="1.5" height="2" fill="#20a080" opacity="0.75"/><rect x="1261.9" y="607.7" width="3" height="2" fill="#20a080" opacity="0.75"/><rect x="1273.0" y="630.6" width="2" height="3" fill="#20a080" opacity="0.75"/><rect x="1238.3" y="609.7" width="2" height="3" fill="#20a080" opacity="0.75"/><rect x="1252.3" y="628.6" width="1.5" height="3" fill="#20a080" opacity="0.75"/><rect x="1261.6" y="619.8" width="1.5" height="3" fill="#20a080" opacity="0.75"/><rect x="1257.7" y="607.2" width="3" height="2" fill="#20a080" opacity="0.75"/><rect x="1256.8" y="632.4" width="2" height="1.5" fill="#20a080" opacity="0.75"/><rect x="1273.5" y="626.3" width="2" height="3" fill="#20a080" opacity="0.75"/><rect x="1239.7" y="612.2" width="2" height="1.5" fill="#20a080" opacity="0.75"/><rect x="1257.0" y="607.0" width="3" height="2" fill="#20a080" opacity="0.75"/><rect x="1237.7" y="613.0" width="1.5" height="2" fill="#20a080" opacity="0.75"/><rect x="1256.6" y="626.1" width="3" height="3" fill="#20a080" opacity="0.75"/><rect x="1244.2" y="622.4" width="2" height="1.5" fill="#20a080" opacity="0.75"/><rect x="1285.7" y="614.6" width="3" height="2" fill="#2040d0" opacity="0.75"/><rect x="1273.2" y="640.5" width="2" height="3" fill="#2040d0" opacity="0.75"/><rect x="1280.8" y="602.3" width="3" height="1.5" fill="#2040d0" opacity="0.75"/><rect x="1286.7" y="604.5" width="2" height="1.5" fill="#2040d0" opacity="0.75"/><rect x="1265.0" y="648.9" width="2" height="2" fill="#2040d0" opacity="0.75"/><rect x="1285.3" y="607.5" width="3" height="1.5" fill="#2040d0" opacity="0.75"/><rect x="1271.0" y="641.7" width="2" height="3" fill="#2040d0" opacity="0.75"/><rect x="1269.4" y="634.1" width="1.5" height="1.5" fill="#2040d0" opacity="0.75"/><rect x="1290.0" y="599.9" width="3" height="2" fill="#2040d0" opacity="0.75"/><rect x="1270.7" y="624.2" width="1.5" height="1.5" fill="#2040d0" opacity="0.75"/><rect x="1269.3" y="611.9" width="2" height="1.5" fill="#2040d0" opacity="0.75"/><rect x="1286.0" y="626.0" width="3" height="2" fill="#2040d0" opacity="0.75"/><rect x="1278.8" y="604.1" width="3" height="1.5" fill="#2040d0" opacity="0.75"/><rect x="1268.0" y="603.9" width="2" height="1.5" fill="#2040d0" opacity="0.75"/><rect x="1287.9" y="599.1" width="1.5" height="3" fill="#2040d0" opacity="0.75"/><rect x="1284.8" y="601.6" width="1.5" height="3" fill="#2040d0" opacity="0.75"/><rect x="1292.5" y="630.9" width="3" height="3" fill="#2040d0" opacity="0.75"/><rect x="1267.9" y="641.7" width="1.5" height="1.5" fill="#2040d0" opacity="0.75"/><rect x="1271.1" y="641.4" width="2" height="3" fill="#2040d0" opacity="0.75"/><rect x="1266.4" y="646.6" width="1.5" height="3" fill="#2040d0" opacity="0.75"/><rect x="1284.4" y="618.4" width="3" height="1.5" fill="#2040d0" opacity="0.75"/><rect x="1283.5" y="633.3" width="3" height="3" fill="#2040d0" opacity="0.75"/><rect x="1281.5" y="604.0" width="1.5" height="1.5" fill="#2040d0" opacity="0.75"/><rect x="1289.5" y="599.3" width="3" height="2" fill="#2040d0" opacity="0.75"/><rect x="1274.6" y="621.0" width="1.5" height="1.5" fill="#2040d0" opacity="0.75"/><rect x="1288.2" y="636.9" width="2" height="1.5" fill="#2040d0" opacity="0.75"/><rect x="1286.6" y="637.7" width="2" height="3" fill="#2040d0" opacity="0.75"/><rect x="1285.2" y="632.5" width="2" height="1.5" fill="#2040d0" opacity="0.75"/><rect x="1275.1" y="622.4" width="1.5" height="1.5" fill="#2040d0" opacity="0.75"/><rect x="1272.7" y="636.1" width="1.5" height="1.5" fill="#2040d0" opacity="0.75"/><rect x="1293.9" y="606.9" width="1.5" height="3" fill="#2040d0" opacity="0.75"/><rect x="1265.8" y="601.8" width="3" height="1.5" fill="#2040d0" opacity="0.75"/><rect x="1293.8" y="605.5" width="2" height="1.5" fill="#2040d0" opacity="0.75"/><rect x="1270.3" y="606.9" width="1.5" height="2" fill="#2040d0" opacity="0.75"/><rect x="1277.9" y="606.6" width="2" height="2" fill="#2040d0" opacity="0.75"/><rect x="1292.6" y="634.1" width="1.5" height="3" fill="#2040d0" opacity="0.75"/><rect x="1285.3" y="629.8" width="2" height="3" fill="#2040d0" opacity="0.75"/><rect x="1272.8" y="616.1" width="3" height="3" fill="#2040d0" opacity="0.75"/><rect x="1286.7" y="615.4" width="2" height="3" fill="#2040d0" opacity="0.75"/><rect x="1276.3" y="644.0" width="1.5" height="2" fill="#2040d0" opacity="0.75"/><rect x="1284.2" y="621.7" width="3" height="1.5" fill="#2040d0" opacity="0.75"/><rect x="1280.9" y="635.2" width="2" height="1.5" fill="#2040d0" opacity="0.75"/><rect x="1272.2" y="612.7" width="1.5" height="3" fill="#2040d0" opacity="0.75"/><rect x="1282.4" y="627.5" width="3" height="3" fill="#2040d0" opacity="0.75"/><rect x="1292.2" y="626.8" width="2" height="1.5" fill="#2040d0" opacity="0.75"/><rect x="1281.5" y="631.4" width="3" height="2" fill="#2040d0" opacity="0.75"/><rect x="1273.5" y="615.2" width="1.5" height="1.5" fill="#2040d0" opacity="0.75"/><rect x="1269.0" y="638.9" width="2" height="2" fill="#2040d0" opacity="0.75"/><rect x="1292.2" y="615.2" width="1.5" height="2" fill="#2040d0" opacity="0.75"/><rect x="1264.6" y="627.4" width="1.5" height="2" fill="#2040d0" opacity="0.75"/><rect x="1272.8" y="634.1" width="2" height="1.5" fill="#2040d0" opacity="0.75"/><rect x="1264.4" y="633.0" width="2" height="3" fill="#2040d0" opacity="0.75"/><rect x="1273.3" y="602.1" width="2" height="3" fill="#2040d0" opacity="0.75"/><rect x="1264.5" y="639.6" width="2" height="2" fill="#2040d0" opacity="0.75"/><rect x="1280.3" y="637.9" width="2" height="3" fill="#2040d0" opacity="0.75"/><rect x="1275.9" y="622.2" width="1.5" height="1.5" fill="#2040d0" opacity="0.75"/><rect x="1264.2" y="615.3" width="1.5" height="1.5" fill="#2040d0" opacity="0.75"/><rect x="1284.4" y="599.6" width="2" height="3" fill="#2040d0" opacity="0.75"/><rect x="1279.0" y="600.4" width="3" height="2" fill="#2040d0" opacity="0.75"/><rect x="1285.6" y="639.6" width="2" height="3" fill="#2040d0" opacity="0.75"/><rect x="1272.3" y="638.4" width="3" height="3" fill="#2040d0" opacity="0.75"/><rect x="1268.2" y="607.0" width="2" height="2" fill="#2040d0" opacity="0.75"/><rect x="1271.9" y="630.7" width="2" height="1.5" fill="#2040d0" opacity="0.75"/><rect x="1276.7" y="629.4" width="2" height="2" fill="#2040d0" opacity="0.75"/><rect x="1275.1" y="647.3" width="2" height="2" fill="#2040d0" opacity="0.75"/><rect x="1285.0" y="607.6" width="2" height="3" fill="#2040d0" opacity="0.75"/><rect x="1279.0" y="631.9" width="3" height="2" fill="#2040d0" opacity="0.75"/><rect x="1287.5" y="630.4" width="2" height="3" fill="#2040d0" opacity="0.75"/><rect x="1288.0" y="610.2" width="3" height="3" fill="#2040d0" opacity="0.75"/><rect x="1287.3" y="601.8" width="3" height="2" fill="#2040d0" opacity="0.75"/><rect x="1282.7" y="599.0" width="2" height="3" fill="#2040d0" opacity="0.75"/><rect x="1281.8" y="629.9" width="2" height="2" fill="#2040d0" opacity="0.75"/><rect x="1281.4" y="605.1" width="2" height="1.5" fill="#2040d0" opacity="0.75"/><rect x="1286.1" y="635.8" width="2" height="3" fill="#2040d0" opacity="0.75"/><rect x="1274.7" y="605.4" width="2" height="3" fill="#2040d0" opacity="0.75"/><rect x="1272.9" y="625.1" width="2" height="2" fill="#2040d0" opacity="0.75"/><rect x="1264.3" y="629.6" width="2" height="2" fill="#2040d0" opacity="0.75"/><rect x="1267.2" y="647.9" width="1.5" height="1.5" fill="#c04040" opacity="0.75"/><rect x="1257.8" y="640.8" width="2" height="1.5" fill="#c04040" opacity="0.75"/><rect x="1262.4" y="644.9" width="2" height="2" fill="#c04040" opacity="0.75"/><rect x="1254.4" y="639.2" width="3" height="1.5" fill="#c04040" opacity="0.75"/><rect x="1258.2" y="648.0" width="2" height="1.5" fill="#c04040" opacity="0.75"/><rect x="1260.0" y="648.2" width="1.5" height="3" fill="#c04040" opacity="0.75"/><rect x="1257.7" y="644.0" width="2" height="2" fill="#c04040" opacity="0.75"/><rect x="1261.6" y="646.7" width="1.5" height="3" fill="#c04040" opacity="0.75"/><rect x="1259.6" y="642.6" width="2" height="1.5" fill="#c04040" opacity="0.75"/><ellipse cx="1264" cy="579" rx="27.5" ry="13" fill="url(#hl)"/><circle cx="1455" cy="675" r="47" fill="#5a5a5a" opacity="0.9" filter="url(#blur)"/><circle cx="1455" cy="668" r="47" fill="url(#gRB)" stroke="#3b8a76" stroke-width="1.3"/><rect x="1430.7" y="673.9" width="2" height="2" fill="#8080d0" opacity="0.75"/><rect x="1449.6" y="695.5" width="1.5" height="1.5" fill="#8080d0" opacity="0.75"/><rect x="1485.1" y="664.0" width="1.5" height="3" fill="#8080d0" opacity="0.75"/><rect x="1492.9" y="667.9" width="3" height="1.5" fill="#8080d0" opacity="0.75"/><rect x="1467.5" y="678.0" width="2" height="3" fill="#8080d0" opacity="0.75"/><rect x="1471.2" y="683.4" width="3" height="2" fill="#8080d0" opacity="0.75"/><rect x="1489.3" y="683.3" width="2" height="3" fill="#8080d0" opacity="0.75"/><rect x="1453.0" y="646.7" width="2" height="2" fill="#8080d0" opacity="0.75"/><rect x="1437.6" y="649.8" width="3" height="2" fill="#8080d0" opacity="0.75"/><rect x="1449.3" y="707.4" width="3" height="1.5" fill="#8080d0" opacity="0.75"/><rect x="1472.1" y="647.8" width="1.5" height="2" fill="#8080d0" opacity="0.75"/><rect x="1473.3" y="654.8" width="2" height="1.5" fill="#8080d0" opacity="0.75"/><rect x="1473.8" y="644.7" width="2" height="3" fill="#8080d0" opacity="0.75"/><rect x="1443.9" y="704.0" width="1.5" height="1.5" fill="#8080d0" opacity="0.75"/><rect x="1439.7" y="695.5" width="2" height="2" fill="#8080d0" opacity="0.75"/><rect x="1467.5" y="650.7" width="2" height="1.5" fill="#8080d0" opacity="0.75"/><rect x="1467.5" y="691.8" width="2" height="1.5" fill="#8080d0" opacity="0.75"/><rect x="1475.6" y="669.8" width="2" height="3" fill="#8080d0" opacity="0.75"/><rect x="1440.3" y="677.4" width="2" height="3" fill="#8080d0" opacity="0.75"/><rect x="1459.2" y="695.0" width="2" height="2" fill="#8080d0" opacity="0.75"/><rect x="1437.9" y="687.5" width="2" height="1.5" fill="#8080d0" opacity="0.75"/><rect x="1445.5" y="681.4" width="2" height="1.5" fill="#8080d0" opacity="0.75"/><rect x="1439.0" y="677.3" width="3" height="1.5" fill="#8080d0" opacity="0.75"/><rect x="1474.7" y="683.4" width="2" height="1.5" fill="#8080d0" opacity="0.75"/><rect x="1465.6" y="666.0" width="1.5" height="2" fill="#8080d0" opacity="0.75"/><rect x="1471.1" y="654.3" width="3" height="2" fill="#8080d0" opacity="0.75"/><rect x="1493.9" y="659.0" width="2" height="2" fill="#8080d0" opacity="0.75"/><rect x="1474.4" y="681.7" width="1.5" height="2" fill="#8080d0" opacity="0.75"/><rect x="1482.9" y="684.6" width="2" height="3" fill="#8080d0" opacity="0.75"/><rect x="1487.5" y="646.9" width="2" height="3" fill="#8080d0" opacity="0.75"/><rect x="1458.4" y="656.2" width="1.5" height="3" fill="#8080d0" opacity="0.75"/><rect x="1477.5" y="697.9" width="3" height="2" fill="#8080d0" opacity="0.75"/><rect x="1481.2" y="645.1" width="2" height="3" fill="#8080d0" opacity="0.75"/><rect x="1459.0" y="695.6" width="3" height="2" fill="#8080d0" opacity="0.75"/><rect x="1435.8" y="681.1" width="2" height="3" fill="#8080d0" opacity="0.75"/><rect x="1435.7" y="688.1" width="2" height="3" fill="#8080d0" opacity="0.75"/><rect x="1435.5" y="677.2" width="1.5" height="1.5" fill="#8080d0" opacity="0.75"/><rect x="1456.5" y="674.7" width="3" height="3" fill="#8080d0" opacity="0.75"/><rect x="1465.1" y="661.5" width="3" height="3" fill="#8080d0" opacity="0.75"/><rect x="1468.5" y="643.3" width="2" height="1.5" fill="#8080d0" opacity="0.75"/><rect x="1464.8" y="677.0" width="3" height="3" fill="#8080d0" opacity="0.75"/><rect x="1430.2" y="667.4" width="2" height="1.5" fill="#8080d0" opacity="0.75"/><rect x="1461.5" y="660.1" width="1.5" height="1.5" fill="#8080d0" opacity="0.75"/><rect x="1485.6" y="686.6" width="2" height="3" fill="#8080d0" opacity="0.75"/><rect x="1467.7" y="681.1" width="2" height="2" fill="#8080d0" opacity="0.75"/><rect x="1452.5" y="651.9" width="2" height="3" fill="#8080d0" opacity="0.75"/><rect x="1475.7" y="701.1" width="2" height="1.5" fill="#8080d0" opacity="0.75"/><rect x="1441.8" y="652.1" width="2" height="3" fill="#8080d0" opacity="0.75"/><rect x="1436.9" y="676.8" width="2" height="1.5" fill="#8080d0" opacity="0.75"/><rect x="1427.5" y="651.7" width="2" height="2" fill="#8080d0" opacity="0.75"/><rect x="1472.1" y="696.0" width="2" height="1.5" fill="#8080d0" opacity="0.75"/><rect x="1450.6" y="688.7" width="3" height="3" fill="#8080d0" opacity="0.75"/><rect x="1438.8" y="653.1" width="2" height="1.5" fill="#8080d0" opacity="0.75"/><rect x="1428.9" y="644.5" width="1.5" height="1.5" fill="#8080d0" opacity="0.75"/><rect x="1439.7" y="692.9" width="3" height="1.5" fill="#8080d0" opacity="0.75"/><rect x="1463.8" y="691.5" width="1.5" height="3" fill="#8080d0" opacity="0.75"/><rect x="1494.2" y="673.6" width="3" height="3" fill="#8080d0" opacity="0.75"/><rect x="1478.8" y="671.1" width="3" height="1.5" fill="#8080d0" opacity="0.75"/><rect x="1473.8" y="677.0" width="3" height="2" fill="#8080d0" opacity="0.75"/><rect x="1453.6" y="658.0" width="2" height="3" fill="#8080d0" opacity="0.75"/><rect x="1423.2" y="649.7" width="1.5" height="1.5" fill="#8080d0" opacity="0.75"/><rect x="1443.2" y="666.3" width="3" height="1.5" fill="#8080d0" opacity="0.75"/><rect x="1427.6" y="692.3" width="1.5" height="2" fill="#8080d0" opacity="0.75"/><rect x="1462.4" y="654.5" width="1.5" height="2" fill="#8080d0" opacity="0.75"/><rect x="1436.3" y="656.3" width="3" height="1.5" fill="#8080d0" opacity="0.75"/><rect x="1468.4" y="668.6" width="2" height="3" fill="#8080d0" opacity="0.75"/><rect x="1433.8" y="680.8" width="2" height="1.5" fill="#8080d0" opacity="0.75"/><rect x="1422.7" y="684.6" width="1.5" height="2" fill="#8080d0" opacity="0.75"/><rect x="1453.7" y="707.0" width="1.5" height="3" fill="#8080d0" opacity="0.75"/><rect x="1473.2" y="650.1" width="1.5" height="3" fill="#8080d0" opacity="0.75"/><rect x="1443.5" y="699.2" width="3" height="3" fill="#8080d0" opacity="0.75"/><rect x="1437.0" y="652.9" width="2" height="2" fill="#8080d0" opacity="0.75"/><rect x="1478.5" y="669.3" width="1.5" height="1.5" fill="#8080d0" opacity="0.75"/><rect x="1460.4" y="695.4" width="3" height="2" fill="#8080d0" opacity="0.75"/><rect x="1429.3" y="691.0" width="2" height="1.5" fill="#8080d0" opacity="0.75"/><rect x="1485.9" y="691.1" width="3" height="2" fill="#8080d0" opacity="0.75"/><rect x="1439.1" y="677.0" width="2" height="2" fill="#8080d0" opacity="0.75"/><rect x="1442.0" y="696.4" width="1.5" height="2" fill="#8080d0" opacity="0.75"/><rect x="1456.9" y="701.9" width="2" height="2" fill="#8080d0" opacity="0.75"/><rect x="1424.1" y="686.6" width="3" height="2" fill="#8080d0" opacity="0.75"/><rect x="1460.1" y="684.9" width="2" height="1.5" fill="#8080d0" opacity="0.75"/><rect x="1452.5" y="682.6" width="2" height="3" fill="#8080d0" opacity="0.75"/><rect x="1452.6" y="691.8" width="3" height="2" fill="#8080d0" opacity="0.75"/><rect x="1449.3" y="666.8" width="2" height="3" fill="#8080d0" opacity="0.75"/><rect x="1471.1" y="660.3" width="1.5" height="2" fill="#8080d0" opacity="0.75"/><rect x="1482.9" y="658.9" width="2" height="1.5" fill="#8080d0" opacity="0.75"/><rect x="1438.9" y="650.1" width="2" height="3" fill="#8080d0" opacity="0.75"/><rect x="1483.5" y="643.5" width="2" height="3" fill="#8080d0" opacity="0.75"/><rect x="1483.9" y="660.9" width="3" height="1.5" fill="#8080d0" opacity="0.75"/><rect x="1437.6" y="661.8" width="2" height="3" fill="#8080d0" opacity="0.75"/><rect x="1436.3" y="701.2" width="3" height="1.5" fill="#8080d0" opacity="0.75"/><rect x="1474.8" y="649.2" width="2" height="2" fill="#8080d0" opacity="0.75"/><rect x="1464.6" y="655.9" width="2" height="3" fill="#8080d0" opacity="0.75"/><rect x="1443.2" y="696.6" width="1.5" height="3" fill="#8080d0" opacity="0.75"/><rect x="1432.0" y="673.6" width="2" height="1.5" fill="#8080d0" opacity="0.75"/><rect x="1421.0" y="671.5" width="2" height="3" fill="#8080d0" opacity="0.75"/><rect x="1462.4" y="655.7" width="2" height="2" fill="#8080d0" opacity="0.75"/><rect x="1482.0" y="666.1" width="1.5" height="3" fill="#8080d0" opacity="0.75"/><rect x="1468.3" y="688.2" width="2" height="3" fill="#8080d0" opacity="0.75"/><rect x="1439.3" y="652.5" width="2" height="2" fill="#8080d0" opacity="0.75"/><rect x="1434.1" y="694.1" width="1.5" height="2" fill="#8080d0" opacity="0.75"/><rect x="1443.6" y="654.5" width="3" height="2" fill="#8080d0" opacity="0.75"/><rect x="1444.5" y="698.1" width="3" height="2" fill="#8080d0" opacity="0.75"/><rect x="1461.4" y="686.0" width="2" height="2" fill="#8080d0" opacity="0.75"/><rect x="1435.1" y="643.8" width="2" height="2" fill="#8080d0" opacity="0.75"/><rect x="1467.4" y="658.9" width="2" height="3" fill="#8080d0" opacity="0.75"/><rect x="1445.2" y="692.5" width="2" height="1.5" fill="#8080d0" opacity="0.75"/><rect x="1459.7" y="689.7" width="2" height="3" fill="#8080d0" opacity="0.75"/><rect x="1483.9" y="661.7" width="2" height="2" fill="#8080d0" opacity="0.75"/><rect x="1429.6" y="660.2" width="2" height="3" fill="#8080d0" opacity="0.75"/><rect x="1455.9" y="644.3" width="2" height="1.5" fill="#8080d0" opacity="0.75"/><rect x="1421.7" y="682.9" width="1.5" height="2" fill="#8080d0" opacity="0.75"/><rect x="1442.7" y="679.0" width="2" height="2" fill="#8080d0" opacity="0.75"/><rect x="1476.4" y="692.9" width="3" height="1.5" fill="#8080d0" opacity="0.75"/><rect x="1477.2" y="669.5" width="2" height="3" fill="#8080d0" opacity="0.75"/><rect x="1459.1" y="682.5" width="1.5" height="1.5" fill="#8080d0" opacity="0.75"/><rect x="1469.8" y="644.8" width="2" height="2" fill="#8080d0" opacity="0.75"/><rect x="1445.8" y="660.3" width="2" height="3" fill="#8080d0" opacity="0.75"/><rect x="1482.0" y="651.2" width="1.5" height="3" fill="#8080d0" opacity="0.75"/><rect x="1472.1" y="693.6" width="2" height="3" fill="#8080d0" opacity="0.75"/><rect x="1430.5" y="685.9" width="3" height="2" fill="#8080d0" opacity="0.75"/><rect x="1442.2" y="686.4" width="2" height="2" fill="#8080d0" opacity="0.75"/><rect x="1465.0" y="677.4" width="1.5" height="3" fill="#8080d0" opacity="0.75"/><rect x="1435.3" y="689.8" width="3" height="1.5" fill="#8080d0" opacity="0.75"/><rect x="1435.5" y="650.2" width="1.5" height="2" fill="#8080d0" opacity="0.75"/><rect x="1468.5" y="693.3" width="2" height="3" fill="#8080d0" opacity="0.75"/><rect x="1456.5" y="647.3" width="2" height="3" fill="#8080d0" opacity="0.75"/><rect x="1483.6" y="677.3" width="2" height="2" fill="#8080d0" opacity="0.75"/><rect x="1475.6" y="672.8" width="3" height="2" fill="#8080d0" opacity="0.75"/><rect x="1452.4" y="693.2" width="3" height="3" fill="#8080d0" opacity="0.75"/><rect x="1485.1" y="654.8" width="3" height="1.5" fill="#8080d0" opacity="0.75"/><rect x="1474.6" y="680.3" width="1.5" height="3" fill="#8080d0" opacity="0.75"/><rect x="1427.5" y="696.8" width="2" height="3" fill="#8080d0" opacity="0.75"/><rect x="1429.8" y="670.6" width="1.5" height="3" fill="#8080d0" opacity="0.75"/><rect x="1437.7" y="686.9" width="3" height="1.5" fill="#8080d0" opacity="0.75"/><rect x="1481.3" y="680.6" width="2" height="1.5" fill="#8080d0" opacity="0.75"/><rect x="1436.7" y="692.7" width="2" height="3" fill="#8080d0" opacity="0.75"/><rect x="1441.6" y="703.2" width="1.5" height="3" fill="#8080d0" opacity="0.75"/><rect x="1431.7" y="667.8" width="1.5" height="2" fill="#8080d0" opacity="0.75"/><rect x="1449.1" y="697.0" width="2" height="1.5" fill="#8080d0" opacity="0.75"/><rect x="1458.4" y="652.7" width="1.5" height="3" fill="#8080d0" opacity="0.75"/><rect x="1457.8" y="655.9" width="1.5" height="3" fill="#8080d0" opacity="0.75"/><rect x="1427.0" y="693.1" width="2" height="3" fill="#8080d0" opacity="0.75"/><rect x="1444.7" y="683.7" width="2" height="2" fill="#8080d0" opacity="0.75"/><rect x="1431.2" y="667.6" width="2" height="2" fill="#8080d0" opacity="0.75"/><rect x="1443.0" y="694.9" width="2" height="1.5" fill="#8080d0" opacity="0.75"/><rect x="1468.2" y="674.8" width="2" height="2" fill="#8080d0" opacity="0.75"/><rect x="1444.1" y="694.5" width="3" height="1.5" fill="#8080d0" opacity="0.75"/><rect x="1479.1" y="673.0" width="2" height="1.5" fill="#8080d0" opacity="0.75"/><rect x="1474.9" y="689.9" width="1.5" height="3" fill="#8080d0" opacity="0.75"/><rect x="1443.1" y="691.3" width="2" height="1.5" fill="#8080d0" opacity="0.75"/><rect x="1452.9" y="668.3" width="3" height="1.5" fill="#8080d0" opacity="0.75"/><rect x="1477.1" y="680.9" width="3" height="1.5" fill="#8080d0" opacity="0.75"/><rect x="1465.8" y="696.1" width="2" height="3" fill="#8080d0" opacity="0.75"/><rect x="1451.0" y="693.8" width="2" height="1.5" fill="#8080d0" opacity="0.75"/><rect x="1428.2" y="679.6" width="2" height="3" fill="#8080d0" opacity="0.75"/><rect x="1425.5" y="690.9" width="3" height="3" fill="#8080d0" opacity="0.75"/><rect x="1423.6" y="644.8" width="2" height="3" fill="#8080d0" opacity="0.75"/><rect x="1492.4" y="659.6" width="1.5" height="2" fill="#8080d0" opacity="0.75"/><rect x="1440.1" y="688.0" width="2" height="2" fill="#8080d0" opacity="0.75"/><rect x="1436.9" y="690.0" width="3" height="3" fill="#8080d0" opacity="0.75"/><rect x="1450.1" y="674.7" width="2" height="1.5" fill="#8080d0" opacity="0.75"/><rect x="1437.9" y="688.7" width="3" height="2" fill="#8080d0" opacity="0.75"/><rect x="1451.9" y="668.7" width="2" height="1.5" fill="#8080d0" opacity="0.75"/><rect x="1458.2" y="687.2" width="3" height="3" fill="#8080d0" opacity="0.75"/><rect x="1485.2" y="649.8" width="3" height="2" fill="#8080d0" opacity="0.75"/><rect x="1474.4" y="674.2" width="2" height="1.5" fill="#8080d0" opacity="0.75"/><rect x="1482.4" y="692.7" width="2" height="1.5" fill="#8080d0" opacity="0.75"/><rect x="1439.2" y="679.3" width="1.5" height="3" fill="#8080d0" opacity="0.75"/><rect x="1437.0" y="684.5" width="2" height="1.5" fill="#8080d0" opacity="0.75"/><rect x="1470.1" y="644.1" width="2" height="3" fill="#8080d0" opacity="0.75"/><rect x="1473.3" y="686.4" width="1.5" height="2" fill="#8080d0" opacity="0.75"/><rect x="1434.9" y="644.7" width="3" height="2" fill="#8080d0" opacity="0.75"/><rect x="1457.7" y="706.1" width="3" height="2" fill="#8080d0" opacity="0.75"/><rect x="1432.2" y="700.2" width="1.5" height="2" fill="#8080d0" opacity="0.75"/><rect x="1453.1" y="687.0" width="2" height="3" fill="#8080d0" opacity="0.75"/><rect x="1436.1" y="652.0" width="2" height="1.5" fill="#8080d0" opacity="0.75"/><rect x="1453.2" y="653.6" width="1.5" height="3" fill="#8080d0" opacity="0.75"/><rect x="1450.1" y="688.6" width="3" height="1.5" fill="#8080d0" opacity="0.75"/><rect x="1482.0" y="695.4" width="1.5" height="2" fill="#8080d0" opacity="0.75"/><rect x="1449.8" y="664.2" width="3" height="1.5" fill="#8080d0" opacity="0.75"/><rect x="1464.8" y="646.6" width="1.5" height="2" fill="#8080d0" opacity="0.75"/><rect x="1484.1" y="687.9" width="2" height="1.5" fill="#8080d0" opacity="0.75"/><rect x="1427.4" y="677.3" width="1.5" height="3" fill="#8080d0" opacity="0.75"/><rect x="1490.2" y="668.3" width="3" height="2" fill="#8080d0" opacity="0.75"/><rect x="1436.1" y="673.8" width="1.5" height="2" fill="#8080d0" opacity="0.75"/><rect x="1433.6" y="665.5" width="1.5" height="1.5" fill="#8080d0" opacity="0.75"/><rect x="1436.6" y="703.5" width="3" height="1.5" fill="#8080d0" opacity="0.75"/><rect x="1428.3" y="644.8" width="2" height="2" fill="#8080d0" opacity="0.75"/><rect x="1473.3" y="664.1" width="2" height="3" fill="#8080d0" opacity="0.75"/><rect x="1477.6" y="673.6" width="2" height="2" fill="#8080d0" opacity="0.75"/><rect x="1429.6" y="657.2" width="2" height="3" fill="#8080d0" opacity="0.75"/><rect x="1453.3" y="685.7" width="2" height="3" fill="#8080d0" opacity="0.75"/><rect x="1470.4" y="658.7" width="2" height="3" fill="#8080d0" opacity="0.75"/><rect x="1469.6" y="690.3" width="2" height="1.5" fill="#8080d0" opacity="0.75"/><rect x="1467.8" y="664.5" width="2" height="3" fill="#8080d0" opacity="0.75"/><rect x="1460.3" y="653.2" width="1.5" height="1.5" fill="#8080d0" opacity="0.75"/><rect x="1448.9" y="674.0" width="1.5" height="2" fill="#8080d0" opacity="0.75"/><rect x="1463.1" y="681.8" width="2" height="2" fill="#8080d0" opacity="0.75"/><rect x="1464.0" y="665.3" width="3" height="2" fill="#8080d0" opacity="0.75"/><rect x="1492.2" y="675.0" width="3" height="2" fill="#8080d0" opacity="0.75"/><rect x="1435.9" y="679.0" width="1.5" height="1.5" fill="#8080d0" opacity="0.75"/><rect x="1434.9" y="648.0" width="2" height="1.5" fill="#8080d0" opacity="0.75"/><rect x="1458.0" y="678.2" width="3" height="2" fill="#8080d0" opacity="0.75"/><rect x="1455.3" y="690.6" width="2" height="3" fill="#8080d0" opacity="0.75"/><rect x="1453.1" y="646.9" width="3" height="1.5" fill="#8080d0" opacity="0.75"/><rect x="1479.4" y="664.7" width="1.5" height="3" fill="#8080d0" opacity="0.75"/><rect x="1443.4" y="673.8" width="3" height="2" fill="#8080d0" opacity="0.75"/><rect x="1459.1" y="650.2" width="2" height="2" fill="#8080d0" opacity="0.75"/><rect x="1472.8" y="692.2" width="3" height="1.5" fill="#8080d0" opacity="0.75"/><rect x="1467.0" y="681.3" width="1.5" height="3" fill="#8080d0" opacity="0.75"/><rect x="1479.6" y="665.2" width="2" height="3" fill="#8080d0" opacity="0.75"/><rect x="1445.7" y="662.0" width="2" height="3" fill="#8080d0" opacity="0.75"/><rect x="1451.9" y="666.0" width="2" height="3" fill="#8080d0" opacity="0.75"/><rect x="1466.6" y="688.5" width="2" height="3" fill="#8080d0" opacity="0.75"/><rect x="1475.4" y="671.9" width="1.5" height="2" fill="#8080d0" opacity="0.75"/><rect x="1422.4" y="669.4" width="2" height="3" fill="#8080d0" opacity="0.75"/><rect x="1486.2" y="646.4" width="2" height="1.5" fill="#8080d0" opacity="0.75"/><rect x="1476.9" y="668.3" width="1.5" height="3" fill="#8080d0" opacity="0.75"/><rect x="1494.7" y="663.9" width="1.5" height="3" fill="#8080d0" opacity="0.75"/><rect x="1432.9" y="669.4" width="1.5" height="1.5" fill="#8080d0" opacity="0.75"/><rect x="1443.5" y="687.7" width="2" height="3" fill="#8080d0" opacity="0.75"/><rect x="1456.0" y="669.9" width="3" height="1.5" fill="#8080d0" opacity="0.75"/><rect x="1436.8" y="663.2" width="3" height="3" fill="#8080d0" opacity="0.75"/><rect x="1465.4" y="699.0" width="1.5" height="2" fill="#8080d0" opacity="0.75"/><rect x="1435.2" y="685.4" width="2" height="3" fill="#8080d0" opacity="0.75"/><rect x="1445.9" y="672.6" width="3" height="3" fill="#8080d0" opacity="0.75"/><rect x="1440.6" y="671.0" width="1.5" height="2" fill="#8080d0" opacity="0.75"/><rect x="1487.0" y="646.2" width="3" height="3" fill="#8080d0" opacity="0.75"/><rect x="1429.7" y="670.1" width="2" height="3" fill="#8080d0" opacity="0.75"/><rect x="1454.6" y="679.7" width="1.5" height="2" fill="#8080d0" opacity="0.75"/><rect x="1485.6" y="675.9" width="1.5" height="3" fill="#8080d0" opacity="0.75"/><rect x="1474.7" y="688.8" width="3" height="2" fill="#8080d0" opacity="0.75"/><rect x="1451.7" y="664.7" width="1.5" height="2" fill="#8080d0" opacity="0.75"/><rect x="1491.7" y="669.8" width="2" height="2" fill="#8080d0" opacity="0.75"/><rect x="1492.5" y="676.8" width="1.5" height="2" fill="#8080d0" opacity="0.75"/><rect x="1452.3" y="660.7" width="3" height="3" fill="#8080d0" opacity="0.75"/><rect x="1424.1" y="653.1" width="3" height="2" fill="#8080d0" opacity="0.75"/><ellipse cx="1455" cy="638" rx="27.5" ry="13" fill="url(#hl)"/><circle cx="790" cy="707" r="47" fill="#5a5a5a" opacity="0.9" filter="url(#blur)"/><circle cx="790" cy="700" r="47" fill="url(#gB1)" stroke="#8a8c14" stroke-width="1.3"/><ellipse cx="790" cy="670" rx="27.5" ry="13" fill="url(#hl)"/><circle cx="1059" cy="740" r="47" fill="#5a5a5a" opacity="0.9" filter="url(#blur)"/><circle cx="1059" cy="733" r="47" fill="url(#gA2)" stroke="#9c1b62" stroke-width="1.3"/><rect x="1057.9" y="745.8" width="2" height="1.5" fill="#d0103a" opacity="0.75"/><rect x="1084.6" y="709.0" width="1.5" height="1.5" fill="#d0103a" opacity="0.75"/><rect x="1030.6" y="755.0" width="2" height="3" fill="#d0103a" opacity="0.75"/><rect x="1047.5" y="735.1" width="3" height="2" fill="#d0103a" opacity="0.75"/><rect x="1045.9" y="751.6" width="3" height="1.5" fill="#d0103a" opacity="0.75"/><rect x="1068.0" y="722.3" width="2" height="2" fill="#d0103a" opacity="0.75"/><rect x="1067.4" y="721.2" width="2" height="3" fill="#d0103a" opacity="0.75"/><rect x="1065.9" y="771.6" width="1.5" height="2" fill="#d0103a" opacity="0.75"/><rect x="1030.2" y="715.5" width="2" height="2" fill="#d0103a" opacity="0.75"/><rect x="1072.4" y="722.3" width="2" height="1.5" fill="#d0103a" opacity="0.75"/><rect x="1082.1" y="754.4" width="3" height="2" fill="#d0103a" opacity="0.75"/><rect x="1054.8" y="727.1" width="2" height="2" fill="#d0103a" opacity="0.75"/><rect x="1076.7" y="754.5" width="1.5" height="2" fill="#d0103a" opacity="0.75"/><rect x="1070.6" y="732.1" width="1.5" height="2" fill="#d0103a" opacity="0.75"/><rect x="1076.2" y="756.4" width="2" height="3" fill="#d0103a" opacity="0.75"/><rect x="1073.6" y="730.1" width="3" height="3" fill="#d0103a" opacity="0.75"/><rect x="1086.8" y="719.8" width="2" height="1.5" fill="#d0103a" opacity="0.75"/><rect x="1052.9" y="728.8" width="3" height="2" fill="#d0103a" opacity="0.75"/><rect x="1029.8" y="754.8" width="2" height="1.5" fill="#d0103a" opacity="0.75"/><rect x="1042.1" y="731.2" width="1.5" height="1.5" fill="#d0103a" opacity="0.75"/><rect x="1085.0" y="722.3" width="2" height="2" fill="#d0103a" opacity="0.75"/><rect x="1084.4" y="722.7" width="2" height="2" fill="#d0103a" opacity="0.75"/><rect x="1075.6" y="714.7" width="3" height="2" fill="#d0103a" opacity="0.75"/><rect x="1083.1" y="752.5" width="1.5" height="3" fill="#d0103a" opacity="0.75"/><rect x="1064.0" y="713.9" width="2" height="2" fill="#d0103a" opacity="0.75"/><rect x="1063.5" y="720.0" width="3" height="1.5" fill="#d0103a" opacity="0.75"/><rect x="1057.6" y="772.1" width="3" height="3" fill="#d0103a" opacity="0.75"/><rect x="1057.8" y="738.8" width="1.5" height="2" fill="#d0103a" opacity="0.75"/><rect x="1049.7" y="769.4" width="1.5" height="3" fill="#d0103a" opacity="0.75"/><rect x="1083.9" y="731.1" width="3" height="2" fill="#d0103a" opacity="0.75"/><rect x="1077.1" y="760.7" width="2" height="1.5" fill="#d0103a" opacity="0.75"/><rect x="1059.4" y="744.9" width="1.5" height="1.5" fill="#d0103a" opacity="0.75"/><rect x="1064.1" y="733.5" width="3" height="3" fill="#d0103a" opacity="0.75"/><rect x="1034.0" y="732.9" width="2" height="1.5" fill="#d0103a" opacity="0.75"/><rect x="1056.4" y="772.2" width="1.5" height="3" fill="#d0103a" opacity="0.75"/><rect x="1081.4" y="744.4" width="3" height="2" fill="#d0103a" opacity="0.75"/><rect x="1033.0" y="725.0" width="2" height="1.5" fill="#d0103a" opacity="0.75"/><rect x="1084.1" y="744.6" width="2" height="2" fill="#d0103a" opacity="0.75"/><rect x="1060.1" y="723.6" width="2" height="2" fill="#d0103a" opacity="0.75"/><rect x="1037.1" y="737.0" width="1.5" height="2" fill="#d0103a" opacity="0.75"/><rect x="1042.7" y="763.5" width="2" height="1.5" fill="#d0103a" opacity="0.75"/><rect x="1076.8" y="730.8" width="2" height="3" fill="#d0103a" opacity="0.75"/><rect x="1045.9" y="731.5" width="2" height="3" fill="#d0103a" opacity="0.75"/><rect x="1052.8" y="750.4" width="3" height="1.5" fill="#d0103a" opacity="0.75"/><rect x="1076.9" y="756.7" width="2" height="2" fill="#d0103a" opacity="0.75"/><rect x="1032.5" y="754.0" width="3" height="3" fill="#d0103a" opacity="0.75"/><rect x="1052.4" y="758.9" width="3" height="1.5" fill="#d0103a" opacity="0.75"/><rect x="1074.1" y="758.5" width="1.5" height="2" fill="#d0103a" opacity="0.75"/><rect x="1081.0" y="746.4" width="1.5" height="3" fill="#d0103a" opacity="0.75"/><rect x="1072.4" y="733.3" width="2" height="3" fill="#d0103a" opacity="0.75"/><rect x="1070.4" y="761.9" width="1.5" height="2" fill="#d0103a" opacity="0.75"/><rect x="1048.2" y="719.8" width="2" height="2" fill="#d0103a" opacity="0.75"/><rect x="1058.7" y="748.1" width="2" height="3" fill="#d0103a" opacity="0.75"/><rect x="1072.0" y="725.1" width="1.5" height="3" fill="#d0103a" opacity="0.75"/><rect x="1069.8" y="750.1" width="1.5" height="1.5" fill="#d0103a" opacity="0.75"/><rect x="1051.3" y="739.0" width="3" height="2" fill="#d0103a" opacity="0.75"/><rect x="1068.5" y="749.8" width="3" height="1.5" fill="#d0103a" opacity="0.75"/><rect x="1067.9" y="768.5" width="2" height="1.5" fill="#d0103a" opacity="0.75"/><rect x="1070.5" y="713.6" width="3" height="1.5" fill="#d0103a" opacity="0.75"/><rect x="1085.3" y="726.8" width="3" height="2" fill="#d0103a" opacity="0.75"/><rect x="1045.4" y="755.3" width="2" height="2" fill="#d0103a" opacity="0.75"/><rect x="1067.3" y="720.9" width="1.5" height="3" fill="#d0103a" opacity="0.75"/><rect x="1038.5" y="721.0" width="2" height="1.5" fill="#d0103a" opacity="0.75"/><rect x="1063.0" y="728.2" width="3" height="3" fill="#d0103a" opacity="0.75"/><rect x="1076.1" y="726.4" width="1.5" height="1.5" fill="#d0103a" opacity="0.75"/><rect x="1030.4" y="723.2" width="2" height="3" fill="#d0103a" opacity="0.75"/><rect x="1073.0" y="733.5" width="2" height="2" fill="#d0103a" opacity="0.75"/><rect x="1085.4" y="755.4" width="2" height="2" fill="#d0103a" opacity="0.75"/><rect x="1077.2" y="740.2" width="3" height="1.5" fill="#d0103a" opacity="0.75"/><rect x="1057.8" y="746.0" width="2" height="1.5" fill="#d0103a" opacity="0.75"/><rect x="1062.8" y="758.3" width="3" height="3" fill="#d0103a" opacity="0.75"/><rect x="1069.6" y="723.7" width="2" height="3" fill="#d0103a" opacity="0.75"/><rect x="1041.5" y="711.5" width="3" height="1.5" fill="#d0103a" opacity="0.75"/><rect x="1051.8" y="743.2" width="2" height="2" fill="#d0103a" opacity="0.75"/><rect x="1039.4" y="722.9" width="2" height="3" fill="#d0103a" opacity="0.75"/><rect x="1045.1" y="755.3" width="1.5" height="3" fill="#d0103a" opacity="0.75"/><rect x="1041.1" y="740.8" width="2" height="1.5" fill="#d0103a" opacity="0.75"/><rect x="1032.3" y="754.8" width="1.5" height="3" fill="#d0103a" opacity="0.75"/><rect x="1075.2" y="718.7" width="3" height="1.5" fill="#d0103a" opacity="0.75"/><rect x="1051.9" y="747.9" width="2" height="1.5" fill="#d0103a" opacity="0.75"/><rect x="1057.7" y="739.6" width="1.5" height="2" fill="#d0103a" opacity="0.75"/><rect x="1075.8" y="749.4" width="1.5" height="1.5" fill="#d0103a" opacity="0.75"/><rect x="1037.8" y="741.2" width="2" height="1.5" fill="#d0103a" opacity="0.75"/><rect x="1083.7" y="737.1" width="2" height="3" fill="#d0103a" opacity="0.75"/><rect x="1074.6" y="752.8" width="3" height="3" fill="#d0103a" opacity="0.75"/><rect x="1033.4" y="759.2" width="2" height="1.5" fill="#d0103a" opacity="0.75"/><rect x="1036.4" y="714.3" width="1.5" height="3" fill="#d0103a" opacity="0.75"/><rect x="1029.2" y="718.2" width="1.5" height="1.5" fill="#d0103a" opacity="0.75"/><rect x="1055.7" y="732.9" width="2" height="2" fill="#d0103a" opacity="0.75"/><rect x="1038.7" y="722.4" width="1.5" height="1.5" fill="#d0103a" opacity="0.75"/><rect x="1058.5" y="748.5" width="1.5" height="3" fill="#d0103a" opacity="0.75"/><rect x="1070.3" y="731.7" width="2" height="2" fill="#d0103a" opacity="0.75"/><rect x="1083.1" y="710.6" width="2" height="2" fill="#d0103a" opacity="0.75"/><rect x="1042.6" y="761.0" width="2" height="1.5" fill="#d0103a" opacity="0.75"/><rect x="1051.4" y="711.3" width="2" height="3" fill="#d0103a" opacity="0.75"/><rect x="1046.2" y="750.8" width="3" height="3" fill="#d0103a" opacity="0.75"/><rect x="1046.6" y="736.9" width="2" height="2" fill="#d0103a" opacity="0.75"/><rect x="1075.2" y="726.8" width="3" height="3" fill="#d0103a" opacity="0.75"/><rect x="1041.9" y="728.7" width="3" height="3" fill="#d0103a" opacity="0.75"/><rect x="1078.7" y="758.6" width="2" height="2" fill="#d0103a" opacity="0.75"/><rect x="1079.2" y="737.7" width="3" height="1.5" fill="#d0103a" opacity="0.75"/><rect x="1087.5" y="742.6" width="1.5" height="3" fill="#d0103a" opacity="0.75"/><rect x="1038.1" y="754.9" width="3" height="3" fill="#d0103a" opacity="0.75"/><rect x="1086.5" y="709.8" width="1.5" height="2" fill="#d0103a" opacity="0.75"/><rect x="1048.2" y="743.1" width="2" height="2" fill="#d0103a" opacity="0.75"/><rect x="1080.1" y="735.5" width="3" height="1.5" fill="#d0103a" opacity="0.75"/><rect x="1056.6" y="771.6" width="1.5" height="2" fill="#d0103a" opacity="0.75"/><rect x="1050.2" y="724.0" width="2" height="1.5" fill="#d0103a" opacity="0.75"/><rect x="1037.5" y="751.6" width="2" height="3" fill="#d0103a" opacity="0.75"/><rect x="1073.7" y="723.8" width="3" height="3" fill="#d0103a" opacity="0.75"/><rect x="1034.1" y="712.6" width="1.5" height="1.5" fill="#d0103a" opacity="0.75"/><rect x="1066.6" y="754.8" width="3" height="1.5" fill="#d0103a" opacity="0.75"/><rect x="1038.2" y="716.6" width="3" height="1.5" fill="#d0103a" opacity="0.75"/><rect x="1070.3" y="738.9" width="2" height="1.5" fill="#d0103a" opacity="0.75"/><rect x="1066.5" y="769.5" width="2" height="1.5" fill="#d0103a" opacity="0.75"/><rect x="1055.4" y="771.2" width="2" height="3" fill="#d0103a" opacity="0.75"/><rect x="1051.5" y="730.9" width="3" height="2" fill="#d0103a" opacity="0.75"/><rect x="1065.6" y="738.2" width="3" height="2" fill="#d0103a" opacity="0.75"/><rect x="1064.5" y="746.6" width="2" height="1.5" fill="#d0103a" opacity="0.75"/><rect x="1039.9" y="728.2" width="1.5" height="1.5" fill="#d0103a" opacity="0.75"/><rect x="1069.2" y="731.2" width="2" height="1.5" fill="#d0103a" opacity="0.75"/><rect x="1034.9" y="712.5" width="1.5" height="2" fill="#d0103a" opacity="0.75"/><rect x="1035.5" y="748.0" width="3" height="3" fill="#d0103a" opacity="0.75"/><rect x="1079.5" y="735.0" width="2" height="2" fill="#d0103a" opacity="0.75"/><rect x="1052.1" y="731.5" width="3" height="2" fill="#d0103a" opacity="0.75"/><rect x="1086.8" y="741.1" width="2" height="3" fill="#d0103a" opacity="0.75"/><rect x="1062.6" y="716.0" width="3" height="2" fill="#d0103a" opacity="0.75"/><rect x="1058.2" y="743.8" width="3" height="2" fill="#d0103a" opacity="0.75"/><rect x="1060.2" y="736.7" width="2" height="3" fill="#d0103a" opacity="0.75"/><rect x="1078.9" y="730.9" width="1.5" height="1.5" fill="#d0103a" opacity="0.75"/><rect x="1083.8" y="712.8" width="2" height="1.5" fill="#d0103a" opacity="0.75"/><rect x="1035.5" y="729.2" width="1.5" height="3" fill="#d0103a" opacity="0.75"/><rect x="1041.8" y="724.3" width="1.5" height="2" fill="#d0103a" opacity="0.75"/><rect x="1071.1" y="716.4" width="3" height="3" fill="#d0103a" opacity="0.75"/><rect x="1045.6" y="730.6" width="3" height="2" fill="#d0103a" opacity="0.75"/><rect x="1041.8" y="751.6" width="2" height="3" fill="#d0103a" opacity="0.75"/><rect x="1077.4" y="719.4" width="3" height="1.5" fill="#d0103a" opacity="0.75"/><rect x="1066.1" y="771.9" width="3" height="2" fill="#d0103a" opacity="0.75"/><rect x="1065.3" y="752.4" width="1.5" height="3" fill="#d0103a" opacity="0.75"/><rect x="1087.3" y="717.2" width="2" height="3" fill="#d0103a" opacity="0.75"/><rect x="1057.6" y="732.8" width="2" height="1.5" fill="#d0103a" opacity="0.75"/><rect x="1070.5" y="744.3" width="2" height="2" fill="#d0103a" opacity="0.75"/><rect x="1085.3" y="753.8" width="1.5" height="1.5" fill="#d0103a" opacity="0.75"/><rect x="1056.2" y="759.7" width="1.5" height="2" fill="#d0103a" opacity="0.75"/><rect x="1053.2" y="720.2" width="3" height="2" fill="#d0103a" opacity="0.75"/><rect x="1072.8" y="747.2" width="2" height="1.5" fill="#d0103a" opacity="0.75"/><rect x="1073.8" y="708.7" width="2" height="3" fill="#d0103a" opacity="0.75"/><rect x="1066.5" y="708.8" width="2" height="2" fill="#d0103a" opacity="0.75"/><rect x="1050.4" y="729.0" width="3" height="2" fill="#d0103a" opacity="0.75"/><rect x="1048.2" y="731.1" width="2" height="1.5" fill="#d0103a" opacity="0.75"/><rect x="1041.6" y="748.0" width="3" height="3" fill="#d0103a" opacity="0.75"/><rect x="1041.0" y="766.2" width="2" height="1.5" fill="#d0103a" opacity="0.75"/><rect x="1050.1" y="771.2" width="1.5" height="2" fill="#d0103a" opacity="0.75"/><rect x="1073.6" y="750.2" width="2" height="1.5" fill="#d0103a" opacity="0.75"/><rect x="1059.0" y="737.9" width="2" height="2" fill="#d0103a" opacity="0.75"/><rect x="1072.5" y="758.7" width="2" height="2" fill="#d0103a" opacity="0.75"/><rect x="1043.3" y="742.5" width="1.5" height="2" fill="#d0103a" opacity="0.75"/><rect x="1057.0" y="711.4" width="2" height="1.5" fill="#d0103a" opacity="0.75"/><rect x="1059.2" y="715.6" width="2" height="2" fill="#d0103a" opacity="0.75"/><rect x="1065.0" y="748.9" width="2" height="3" fill="#d0103a" opacity="0.75"/><rect x="1042.1" y="720.8" width="2" height="2" fill="#d0103a" opacity="0.75"/><rect x="1030.9" y="712.1" width="2" height="2" fill="#d0103a" opacity="0.75"/><rect x="1075.0" y="716.9" width="2" height="1.5" fill="#d0103a" opacity="0.75"/><rect x="1060.4" y="719.9" width="2" height="3" fill="#d0103a" opacity="0.75"/><rect x="1058.5" y="750.2" width="2" height="3" fill="#d0103a" opacity="0.75"/><rect x="1051.9" y="758.4" width="2" height="1.5" fill="#d0103a" opacity="0.75"/><rect x="1052.4" y="721.4" width="3" height="1.5" fill="#d0103a" opacity="0.75"/><rect x="1060.2" y="752.7" width="3" height="1.5" fill="#d0103a" opacity="0.75"/><rect x="1087.9" y="733.3" width="3" height="1.5" fill="#d0103a" opacity="0.75"/><rect x="1034.2" y="732.0" width="3" height="2" fill="#d0103a" opacity="0.75"/><rect x="1086.0" y="717.2" width="1.5" height="1.5" fill="#d0103a" opacity="0.75"/><rect x="1084.4" y="747.2" width="2" height="3" fill="#d0103a" opacity="0.75"/><rect x="1060.7" y="750.3" width="3" height="3" fill="#d0103a" opacity="0.75"/><rect x="1042.2" y="725.9" width="1.5" height="1.5" fill="#d0103a" opacity="0.75"/><rect x="1063.8" y="748.9" width="3" height="1.5" fill="#d0103a" opacity="0.75"/><rect x="1062.0" y="726.3" width="1.5" height="3" fill="#d0103a" opacity="0.75"/><rect x="1045.3" y="765.7" width="1.5" height="2" fill="#d0103a" opacity="0.75"/><rect x="1073.7" y="744.2" width="3" height="3" fill="#d0103a" opacity="0.75"/><rect x="1080.1" y="758.5" width="2" height="1.5" fill="#d0103a" opacity="0.75"/><rect x="1071.8" y="756.5" width="1.5" height="3" fill="#d0103a" opacity="0.75"/><rect x="1057.9" y="720.8" width="2" height="2" fill="#d0103a" opacity="0.75"/><rect x="1055.5" y="710.4" width="2" height="3" fill="#d0103a" opacity="0.75"/><rect x="1030.3" y="747.2" width="2" height="2" fill="#d0103a" opacity="0.75"/><rect x="1086.3" y="731.1" width="2" height="3" fill="#d0103a" opacity="0.75"/><rect x="1031.1" y="725.4" width="2" height="1.5" fill="#d0103a" opacity="0.75"/><rect x="1029.3" y="758.8" width="3" height="3" fill="#d0103a" opacity="0.75"/><rect x="1045.8" y="758.7" width="2" height="3" fill="#d0103a" opacity="0.75"/><rect x="1081.3" y="718.9" width="1.5" height="3" fill="#d0103a" opacity="0.75"/><rect x="1035.8" y="737.3" width="2" height="1.5" fill="#d0103a" opacity="0.75"/><rect x="1040.6" y="754.5" width="3" height="1.5" fill="#d0103a" opacity="0.75"/><rect x="1035.8" y="725.1" width="3" height="3" fill="#d0103a" opacity="0.75"/><rect x="1081.2" y="753.5" width="2" height="3" fill="#d0103a" opacity="0.75"/><rect x="1070.5" y="740.6" width="2" height="1.5" fill="#d0103a" opacity="0.75"/><rect x="1050.3" y="764.9" width="2" height="2" fill="#d0103a" opacity="0.75"/><rect x="1030.8" y="758.9" width="2" height="1.5" fill="#d0103a" opacity="0.75"/><rect x="1050.3" y="756.5" width="2" height="2" fill="#d0103a" opacity="0.75"/><rect x="1051.3" y="746.3" width="2" height="1.5" fill="#d0103a" opacity="0.75"/><rect x="1061.7" y="749.3" width="2" height="3" fill="#d0103a" opacity="0.75"/><ellipse cx="1059" cy="703" rx="27.5" ry="13" fill="url(#hl)"/><circle cx="1413" cy="825" r="47" fill="#5a5a5a" opacity="0.9" filter="url(#blur)"/><circle cx="1413" cy="818" r="47" fill="url(#gP21)" stroke="#1b6f92" stroke-width="1.3"/><rect x="1401.9" y="826.7" width="2" height="2" fill="#20a0a0" opacity="0.75"/><rect x="1436.3" y="827.6" width="3" height="1.5" fill="#20a0a0" opacity="0.75"/><rect x="1426.1" y="809.1" width="1.5" height="1.5" fill="#20a0a0" opacity="0.75"/><rect x="1423.6" y="806.5" width="2" height="1.5" fill="#20a0a0" opacity="0.75"/><rect x="1428.2" y="803.3" width="2" height="1.5" fill="#20a0a0" opacity="0.75"/><rect x="1402.7" y="808.4" width="3" height="3" fill="#20a0a0" opacity="0.75"/><rect x="1402.7" y="812.8" width="1.5" height="1.5" fill="#20a0a0" opacity="0.75"/><rect x="1401.3" y="813.3" width="1.5" height="2" fill="#20a0a0" opacity="0.75"/><rect x="1426.2" y="821.1" width="3" height="3" fill="#20a0a0" opacity="0.75"/><rect x="1431.5" y="805.0" width="2" height="2" fill="#20a0a0" opacity="0.75"/><rect x="1417.2" y="822.0" width="3" height="2" fill="#20a0a0" opacity="0.75"/><rect x="1437.5" y="823.3" width="1.5" height="3" fill="#20a0a0" opacity="0.75"/><rect x="1411.9" y="827.6" width="3" height="2" fill="#20a0a0" opacity="0.75"/><rect x="1399.3" y="820.8" width="2" height="3" fill="#20a0a0" opacity="0.75"/><rect x="1407.3" y="811.4" width="2" height="3" fill="#20a0a0" opacity="0.75"/><rect x="1423.2" y="814.8" width="1.5" height="3" fill="#20a0a0" opacity="0.75"/><rect x="1401.4" y="812.7" width="2" height="1.5" fill="#20a0a0" opacity="0.75"/><rect x="1429.3" y="804.5" width="2" height="3" fill="#20a0a0" opacity="0.75"/><rect x="1410.7" y="812.7" width="2" height="1.5" fill="#20a0a0" opacity="0.75"/><rect x="1434.6" y="815.0" width="2" height="2" fill="#20a0a0" opacity="0.75"/><rect x="1406.4" y="804.4" width="2" height="3" fill="#20a0a0" opacity="0.75"/><rect x="1408.2" y="812.3" width="2" height="3" fill="#20a0a0" opacity="0.75"/><rect x="1430.1" y="818.8" width="2" height="2" fill="#20a0a0" opacity="0.75"/><rect x="1426.4" y="810.6" width="2" height="2" fill="#20a0a0" opacity="0.75"/><rect x="1424.1" y="823.9" width="3" height="3" fill="#20a0a0" opacity="0.75"/><rect x="1412.2" y="812.4" width="2" height="3" fill="#20a0a0" opacity="0.75"/><rect x="1415.1" y="818.9" width="3" height="3" fill="#20a0a0" opacity="0.75"/><rect x="1414.1" y="824.8" width="3" height="1.5" fill="#20a0a0" opacity="0.75"/><rect x="1426.5" y="811.3" width="3" height="2" fill="#20a0a0" opacity="0.75"/><rect x="1436.9" y="813.8" width="2" height="2" fill="#20a0a0" opacity="0.75"/><rect x="1433.6" y="826.1" width="1.5" height="1.5" fill="#20a0a0" opacity="0.75"/><rect x="1432.0" y="824.6" width="2" height="1.5" fill="#20a0a0" opacity="0.75"/><rect x="1428.0" y="817.8" width="2" height="1.5" fill="#20a0a0" opacity="0.75"/><rect x="1401.6" y="825.0" width="3" height="3" fill="#20a0a0" opacity="0.75"/><rect x="1438.0" y="807.8" width="3" height="3" fill="#20a0a0" opacity="0.75"/><rect x="1401.5" y="822.9" width="3" height="1.5" fill="#20a0a0" opacity="0.75"/><rect x="1428.9" y="819.9" width="2" height="2" fill="#20a0a0" opacity="0.75"/><rect x="1424.2" y="816.3" width="2" height="3" fill="#20a0a0" opacity="0.75"/><rect x="1421.9" y="804.7" width="2" height="2" fill="#20a0a0" opacity="0.75"/><rect x="1426.0" y="812.6" width="2" height="3" fill="#20a0a0" opacity="0.75"/><rect x="1434.4" y="826.5" width="3" height="1.5" fill="#20a0a0" opacity="0.75"/><rect x="1430.4" y="806.1" width="2" height="3" fill="#20a0a0" opacity="0.75"/><rect x="1419.3" y="813.0" width="2" height="3" fill="#20a0a0" opacity="0.75"/><rect x="1432.8" y="816.1" width="3" height="1.5" fill="#20a0a0" opacity="0.75"/><rect x="1426.2" y="806.5" width="3" height="3" fill="#20a0a0" opacity="0.75"/><rect x="1409.0" y="816.5" width="1.5" height="1.5" fill="#20a0a0" opacity="0.75"/><rect x="1417.8" y="805.5" width="3" height="2" fill="#20a0a0" opacity="0.75"/><rect x="1413.2" y="826.5" width="2" height="1.5" fill="#20a0a0" opacity="0.75"/><rect x="1424.2" y="827.3" width="2" height="1.5" fill="#20a0a0" opacity="0.75"/><rect x="1410.9" y="817.5" width="2" height="2" fill="#20a0a0" opacity="0.75"/><rect x="1410.4" y="816.8" width="1.5" height="1.5" fill="#20a0a0" opacity="0.75"/><rect x="1436.7" y="818.2" width="2" height="3" fill="#20a0a0" opacity="0.75"/><rect x="1436.3" y="819.1" width="2" height="2" fill="#20a0a0" opacity="0.75"/><rect x="1412.0" y="822.1" width="3" height="3" fill="#20a0a0" opacity="0.75"/><rect x="1398.5" y="814.8" width="1.5" height="2" fill="#20a0a0" opacity="0.75"/><rect x="1412.2" y="855.1" width="2" height="3" fill="#1070b0" opacity="0.75"/><rect x="1396.6" y="843.8" width="1.5" height="1.5" fill="#1070b0" opacity="0.75"/><rect x="1418.0" y="849.8" width="2" height="1.5" fill="#1070b0" opacity="0.75"/><rect x="1399.6" y="834.0" width="2" height="2" fill="#1070b0" opacity="0.75"/><rect x="1398.8" y="835.7" width="2" height="1.5" fill="#1070b0" opacity="0.75"/><rect x="1422.2" y="832.1" width="2" height="3" fill="#1070b0" opacity="0.75"/><rect x="1408.8" y="849.7" width="1.5" height="1.5" fill="#1070b0" opacity="0.75"/><rect x="1408.0" y="857.6" width="1.5" height="2" fill="#1070b0" opacity="0.75"/><rect x="1414.9" y="838.6" width="2" height="3" fill="#1070b0" opacity="0.75"/><rect x="1424.9" y="844.3" width="1.5" height="3" fill="#1070b0" opacity="0.75"/><rect x="1395.1" y="844.6" width="2" height="1.5" fill="#1070b0" opacity="0.75"/><rect x="1420.1" y="843.1" width="2" height="3" fill="#1070b0" opacity="0.75"/><rect x="1393.1" y="851.3" width="3" height="3" fill="#1070b0" opacity="0.75"/><rect x="1406.9" y="837.6" width="2" height="2" fill="#1070b0" opacity="0.75"/><rect x="1407.4" y="846.4" width="1.5" height="3" fill="#1070b0" opacity="0.75"/><rect x="1408.4" y="832.6" width="3" height="2" fill="#1070b0" opacity="0.75"/><rect x="1414.6" y="830.4" width="2" height="2" fill="#1070b0" opacity="0.75"/><rect x="1417.7" y="847.2" width="2" height="1.5" fill="#1070b0" opacity="0.75"/><rect x="1420.3" y="835.8" width="2" height="2" fill="#1070b0" opacity="0.75"/><rect x="1423.3" y="828.2" width="2" height="1.5" fill="#1070b0" opacity="0.75"/><rect x="1410.3" y="845.3" width="2" height="3" fill="#1070b0" opacity="0.75"/><rect x="1422.5" y="855.6" width="2" height="3" fill="#1070b0" opacity="0.75"/><rect x="1411.3" y="851.9" width="1.5" height="2" fill="#1070b0" opacity="0.75"/><rect x="1403.0" y="852.0" width="3" height="1.5" fill="#1070b0" opacity="0.75"/><rect x="1419.4" y="830.3" width="3" height="1.5" fill="#1070b0" opacity="0.75"/><rect x="1411.1" y="840.9" width="3" height="2" fill="#1070b0" opacity="0.75"/><rect x="1405.5" y="842.7" width="2" height="3" fill="#1070b0" opacity="0.75"/><rect x="1421.7" y="837.2" width="3" height="3" fill="#1070b0" opacity="0.75"/><rect x="1393.2" y="849.7" width="3" height="3" fill="#1070b0" opacity="0.75"/><rect x="1414.2" y="842.7" width="1.5" height="2" fill="#1070b0" opacity="0.75"/><rect x="1400.0" y="840.9" width="2" height="1.5" fill="#1070b0" opacity="0.75"/><rect x="1427.3" y="832.2" width="2" height="2" fill="#1070b0" opacity="0.75"/><rect x="1416.5" y="855.0" width="2" height="2" fill="#1070b0" opacity="0.75"/><rect x="1405.9" y="840.9" width="2" height="2" fill="#1070b0" opacity="0.75"/><rect x="1402.7" y="846.1" width="3" height="3" fill="#1070b0" opacity="0.75"/><rect x="1411.2" y="848.6" width="3" height="2" fill="#1070b0" opacity="0.75"/><rect x="1417.0" y="828.5" width="1.5" height="1.5" fill="#1070b0" opacity="0.75"/><rect x="1421.0" y="849.5" width="3" height="1.5" fill="#1070b0" opacity="0.75"/><rect x="1422.6" y="844.8" width="2" height="3" fill="#1070b0" opacity="0.75"/><rect x="1415.3" y="846.9" width="2" height="3" fill="#1070b0" opacity="0.75"/><rect x="1407.9" y="832.3" width="2" height="2" fill="#1070b0" opacity="0.75"/><rect x="1423.6" y="848.3" width="2" height="1.5" fill="#1070b0" opacity="0.75"/><rect x="1402.0" y="837.5" width="3" height="3" fill="#1070b0" opacity="0.75"/><rect x="1419.6" y="849.2" width="3" height="1.5" fill="#1070b0" opacity="0.75"/><rect x="1405.3" y="845.0" width="2" height="2" fill="#1070b0" opacity="0.75"/><rect x="1420.3" y="828.5" width="1.5" height="3" fill="#1070b0" opacity="0.75"/><rect x="1427.1" y="829.7" width="2" height="1.5" fill="#1070b0" opacity="0.75"/><rect x="1399.2" y="845.2" width="2" height="3" fill="#1070b0" opacity="0.75"/><rect x="1415.3" y="850.3" width="1.5" height="2" fill="#1070b0" opacity="0.75"/><rect x="1413.0" y="845.6" width="2" height="3" fill="#1070b0" opacity="0.75"/><rect x="1426.3" y="835.2" width="2" height="3" fill="#1070b0" opacity="0.75"/><rect x="1398.0" y="854.0" width="1.5" height="3" fill="#1070b0" opacity="0.75"/><rect x="1399.4" y="842.1" width="1.5" height="1.5" fill="#1070b0" opacity="0.75"/><rect x="1410.2" y="828.3" width="1.5" height="3" fill="#1070b0" opacity="0.75"/><rect x="1420.5" y="838.4" width="3" height="1.5" fill="#1070b0" opacity="0.75"/><rect x="1395.2" y="835.8" width="2" height="3" fill="#1070b0" opacity="0.75"/><rect x="1397.0" y="833.0" width="1.5" height="1.5" fill="#1070b0" opacity="0.75"/><rect x="1425.0" y="851.5" width="1.5" height="2" fill="#1070b0" opacity="0.75"/><ellipse cx="1413" cy="788" rx="27.5" ry="13" fill="url(#hl)"/><circle cx="797" cy="862" r="47" fill="#5a5a5a" opacity="0.9" filter="url(#blur)"/><circle cx="797" cy="855" r="47" fill="url(#gH1)" stroke="#8a1818" stroke-width="1.3"/><rect x="821.0" y="856.0" width="2" height="1.5" fill="#8030a0" opacity="0.75"/><rect x="807.4" y="860.8" width="1.5" height="2" fill="#8030a0" opacity="0.75"/><rect x="801.1" y="864.4" width="3" height="1.5" fill="#8030a0" opacity="0.75"/><rect x="810.6" y="857.3" width="1.5" height="1.5" fill="#8030a0" opacity="0.75"/><rect x="802.5" y="853.1" width="2" height="1.5" fill="#8030a0" opacity="0.75"/><rect x="806.7" y="860.4" width="2" height="3" fill="#8030a0" opacity="0.75"/><rect x="804.4" y="853.0" width="1.5" height="2" fill="#8030a0" opacity="0.75"/><rect x="819.5" y="855.3" width="1.5" height="2" fill="#8030a0" opacity="0.75"/><rect x="811.2" y="854.6" width="1.5" height="3" fill="#8030a0" opacity="0.75"/><rect x="819.0" y="846.8" width="3" height="1.5" fill="#8030a0" opacity="0.75"/><rect x="820.7" y="854.1" width="1.5" height="3" fill="#8030a0" opacity="0.75"/><rect x="808.2" y="853.1" width="2" height="3" fill="#8030a0" opacity="0.75"/><rect x="816.3" y="863.6" width="2" height="1.5" fill="#8030a0" opacity="0.75"/><rect x="810.3" y="846.2" width="1.5" height="1.5" fill="#8030a0" opacity="0.75"/><rect x="810.3" y="847.0" width="3" height="2" fill="#8030a0" opacity="0.75"/><rect x="812.1" y="846.6" width="3" height="3" fill="#8030a0" opacity="0.75"/><rect x="813.1" y="845.6" width="2" height="2" fill="#8030a0" opacity="0.75"/><rect x="814.1" y="849.4" width="2" height="3" fill="#8030a0" opacity="0.75"/><rect x="820.8" y="854.4" width="2" height="2" fill="#8030a0" opacity="0.75"/><rect x="815.9" y="855.0" width="2" height="2" fill="#8030a0" opacity="0.75"/><rect x="798.8" y="861.3" width="2" height="2" fill="#8030a0" opacity="0.75"/><rect x="799.2" y="852.8" width="2" height="2" fill="#8030a0" opacity="0.75"/><rect x="821.2" y="849.5" width="1.5" height="1.5" fill="#8030a0" opacity="0.75"/><rect x="797.8" y="848.3" width="1.5" height="3" fill="#8030a0" opacity="0.75"/><rect x="801.3" y="846.9" width="2" height="1.5" fill="#8030a0" opacity="0.75"/><rect x="797.9" y="853.2" width="3" height="3" fill="#8030a0" opacity="0.75"/><rect x="797.0" y="846.1" width="1.5" height="2" fill="#8030a0" opacity="0.75"/><rect x="765.9" y="856.8" width="3" height="2" fill="#e05010" opacity="0.75"/><rect x="761.4" y="859.4" width="3" height="1.5" fill="#e05010" opacity="0.75"/><rect x="780.9" y="874.6" width="1.5" height="2" fill="#e05010" opacity="0.75"/><rect x="772.7" y="869.8" width="2" height="1.5" fill="#e05010" opacity="0.75"/><rect x="765.6" y="865.2" width="2" height="3" fill="#e05010" opacity="0.75"/><rect x="772.8" y="871.4" width="1.5" height="1.5" fill="#e05010" opacity="0.75"/><rect x="768.3" y="866.7" width="2" height="2" fill="#e05010" opacity="0.75"/><rect x="764.2" y="857.9" width="1.5" height="3" fill="#e05010" opacity="0.75"/><rect x="775.7" y="862.5" width="2" height="1.5" fill="#e05010" opacity="0.75"/><rect x="765.3" y="869.0" width="1.5" height="3" fill="#e05010" opacity="0.75"/><rect x="775.6" y="868.5" width="2" height="2" fill="#e05010" opacity="0.75"/><rect x="775.0" y="864.1" width="1.5" height="2" fill="#e05010" opacity="0.75"/><rect x="758.6" y="863.8" width="2" height="2" fill="#e05010" opacity="0.75"/><rect x="774.7" y="856.8" width="3" height="1.5" fill="#e05010" opacity="0.75"/><rect x="766.7" y="864.6" width="3" height="3" fill="#e05010" opacity="0.75"/><rect x="775.3" y="868.1" width="1.5" height="1.5" fill="#e05010" opacity="0.75"/><rect x="782.0" y="869.5" width="2" height="2" fill="#e05010" opacity="0.75"/><rect x="759.3" y="858.7" width="2" height="3" fill="#e05010" opacity="0.75"/><rect x="778.7" y="856.5" width="2" height="1.5" fill="#e05010" opacity="0.75"/><rect x="768.7" y="863.6" width="2" height="2" fill="#e05010" opacity="0.75"/><rect x="780.0" y="862.6" width="2" height="1.5" fill="#e05010" opacity="0.75"/><rect x="764.7" y="856.0" width="2" height="3" fill="#e05010" opacity="0.75"/><rect x="779.9" y="856.7" width="1.5" height="1.5" fill="#e05010" opacity="0.75"/><rect x="769.0" y="865.6" width="2" height="3" fill="#e05010" opacity="0.75"/><rect x="757.8" y="857.7" width="2" height="1.5" fill="#e05010" opacity="0.75"/><rect x="759.1" y="863.5" width="2" height="2" fill="#e05010" opacity="0.75"/><rect x="766.5" y="867.4" width="2" height="1.5" fill="#e05010" opacity="0.75"/><rect x="800.6" y="891.5" width="2" height="3" fill="#c09020" opacity="0.75"/><rect x="805.7" y="889.7" width="1.5" height="1.5" fill="#c09020" opacity="0.75"/><rect x="802.7" y="893.1" width="2" height="3" fill="#c09020" opacity="0.75"/><rect x="791.5" y="870.6" width="2" height="3" fill="#c09020" opacity="0.75"/><rect x="800.1" y="870.3" width="3" height="3" fill="#c09020" opacity="0.75"/><rect x="788.9" y="888.8" width="1.5" height="3" fill="#c09020" opacity="0.75"/><rect x="787.6" y="877.1" width="1.5" height="3" fill="#c09020" opacity="0.75"/><rect x="800.1" y="876.8" width="1.5" height="3" fill="#c09020" opacity="0.75"/><rect x="811.1" y="873.4" width="2" height="3" fill="#c09020" opacity="0.75"/><rect x="810.7" y="875.2" width="1.5" height="2" fill="#c09020" opacity="0.75"/><rect x="788.0" y="882.0" width="3" height="3" fill="#c09020" opacity="0.75"/><rect x="816.0" y="884.0" width="2" height="1.5" fill="#c09020" opacity="0.75"/><rect x="805.8" y="884.8" width="3" height="3" fill="#c09020" opacity="0.75"/><rect x="803.4" y="892.4" width="2" height="3" fill="#c09020" opacity="0.75"/><rect x="791.0" y="875.0" width="1.5" height="3" fill="#c09020" opacity="0.75"/><rect x="791.5" y="880.6" width="2" height="1.5" fill="#c09020" opacity="0.75"/><rect x="791.2" y="870.6" width="3" height="2" fill="#c09020" opacity="0.75"/><rect x="793.7" y="889.5" width="2" height="1.5" fill="#c09020" opacity="0.75"/><rect x="816.9" y="874.7" width="3" height="3" fill="#c09020" opacity="0.75"/><rect x="803.0" y="893.3" width="2" height="2" fill="#c09020" opacity="0.75"/><rect x="799.3" y="880.3" width="3" height="3" fill="#c09020" opacity="0.75"/><rect x="795.0" y="881.3" width="1.5" height="1.5" fill="#c09020" opacity="0.75"/><rect x="805.8" y="872.8" width="3" height="3" fill="#c09020" opacity="0.75"/><rect x="811.9" y="882.7" width="1.5" height="3" fill="#c09020" opacity="0.75"/><rect x="802.2" y="882.2" width="1.5" height="1.5" fill="#c09020" opacity="0.75"/><rect x="815.3" y="884.8" width="3" height="2" fill="#c09020" opacity="0.75"/><rect x="794.7" y="876.3" width="3" height="2" fill="#c09020" opacity="0.75"/><rect x="796.9" y="889.0" width="2" height="2" fill="#c09020" opacity="0.75"/><rect x="797.2" y="873.3" width="1.5" height="1.5" fill="#c09020" opacity="0.75"/><rect x="812.5" y="882.9" width="1.5" height="1.5" fill="#c09020" opacity="0.75"/><rect x="792.7" y="887.1" width="3" height="3" fill="#c09020" opacity="0.75"/><rect x="794.2" y="892.3" width="2" height="1.5" fill="#c09020" opacity="0.75"/><rect x="794.3" y="876.6" width="2" height="1.5" fill="#c09020" opacity="0.75"/><rect x="791.4" y="873.2" width="1.5" height="3" fill="#c09020" opacity="0.75"/><rect x="798.5" y="875.1" width="2" height="3" fill="#c09020" opacity="0.75"/><rect x="808.9" y="872.7" width="2" height="2" fill="#c09020" opacity="0.75"/><rect x="804.5" y="886.9" width="2" height="2" fill="#c09020" opacity="0.75"/><rect x="806.6" y="871.0" width="1.5" height="3" fill="#c09020" opacity="0.75"/><rect x="803.0" y="870.3" width="2" height="1.5" fill="#c09020" opacity="0.75"/><rect x="793.5" y="879.8" width="2" height="2" fill="#c09020" opacity="0.75"/><rect x="802.4" y="862.7" width="2" height="3" fill="#80a030" opacity="0.75"/><rect x="817.3" y="872.0" width="3" height="1.5" fill="#80a030" opacity="0.75"/><rect x="812.8" y="872.5" width="3" height="1.5" fill="#80a030" opacity="0.75"/><rect x="817.6" y="864.7" width="2" height="2" fill="#80a030" opacity="0.75"/><rect x="820.5" y="874.8" width="2" height="1.5" fill="#80a030" opacity="0.75"/><rect x="815.1" y="876.7" width="2" height="2" fill="#80a030" opacity="0.75"/><rect x="823.8" y="875.2" width="2" height="2" fill="#80a030" opacity="0.75"/><rect x="815.7" y="874.6" width="2" height="3" fill="#80a030" opacity="0.75"/><rect x="817.4" y="867.3" width="1.5" height="1.5" fill="#80a030" opacity="0.75"/><rect x="821.7" y="865.0" width="3" height="1.5" fill="#80a030" opacity="0.75"/><rect x="826.1" y="862.8" width="2" height="1.5" fill="#80a030" opacity="0.75"/><rect x="816.3" y="871.9" width="2" height="1.5" fill="#80a030" opacity="0.75"/><rect x="828.9" y="875.6" width="3" height="2" fill="#80a030" opacity="0.75"/><rect x="830.8" y="873.1" width="2" height="2" fill="#80a030" opacity="0.75"/><rect x="826.5" y="870.7" width="2" height="3" fill="#80a030" opacity="0.75"/><rect x="830.0" y="871.5" width="1.5" height="2" fill="#80a030" opacity="0.75"/><rect x="825.2" y="865.2" width="2" height="1.5" fill="#80a030" opacity="0.75"/><rect x="813.5" y="860.6" width="3" height="2" fill="#80a030" opacity="0.75"/><rect x="828.1" y="875.5" width="3" height="1.5" fill="#80a030" opacity="0.75"/><rect x="816.9" y="863.1" width="2" height="3" fill="#80a030" opacity="0.75"/><rect x="803.3" y="862.3" width="3" height="2" fill="#80a030" opacity="0.75"/><rect x="827.8" y="873.5" width="2" height="3" fill="#80a030" opacity="0.75"/><rect x="821.2" y="872.4" width="1.5" height="2" fill="#80a030" opacity="0.75"/><rect x="817.0" y="870.2" width="2" height="3" fill="#80a030" opacity="0.75"/><rect x="805.7" y="865.8" width="3" height="1.5" fill="#80a030" opacity="0.75"/><rect x="825.7" y="879.0" width="2" height="2" fill="#80a030" opacity="0.75"/><rect x="823.3" y="877.5" width="2" height="1.5" fill="#80a030" opacity="0.75"/><rect x="831.9" y="868.2" width="1.5" height="2" fill="#80a030" opacity="0.75"/><rect x="807.8" y="864.0" width="2" height="1.5" fill="#80a030" opacity="0.75"/><rect x="809.7" y="872.9" width="3" height="1.5" fill="#80a030" opacity="0.75"/><rect x="820.7" y="866.3" width="3" height="1.5" fill="#80a030" opacity="0.75"/><rect x="811.3" y="872.3" width="2" height="1.5" fill="#80a030" opacity="0.75"/><rect x="810.4" y="860.3" width="1.5" height="2" fill="#80a030" opacity="0.75"/><ellipse cx="797" cy="825" rx="27.5" ry="13" fill="url(#hl)"/><circle cx="1148" cy="907" r="47" fill="#5a5a5a" opacity="0.9" filter="url(#blur)"/><circle cx="1148" cy="900" r="47" fill="url(#gE1)" stroke="#5a8c48" stroke-width="1.3"/><rect x="1176.7" y="890.8" width="2" height="3" fill="#d05a20" opacity="0.75"/><rect x="1175.8" y="923.5" width="2" height="2" fill="#d05a20" opacity="0.75"/><rect x="1154.3" y="921.1" width="2" height="3" fill="#d05a20" opacity="0.75"/><rect x="1174.6" y="908.1" width="3" height="3" fill="#d05a20" opacity="0.75"/><rect x="1148.5" y="922.3" width="2" height="2" fill="#d05a20" opacity="0.75"/><rect x="1157.6" y="917.5" width="3" height="3" fill="#d05a20" opacity="0.75"/><rect x="1136.7" y="910.3" width="2" height="2" fill="#d05a20" opacity="0.75"/><rect x="1170.7" y="881.0" width="2" height="3" fill="#d05a20" opacity="0.75"/><rect x="1161.6" y="887.2" width="3" height="2" fill="#d05a20" opacity="0.75"/><rect x="1168.8" y="903.4" width="3" height="3" fill="#d05a20" opacity="0.75"/><rect x="1154.7" y="908.4" width="1.5" height="1.5" fill="#d05a20" opacity="0.75"/><rect x="1164.9" y="881.6" width="2" height="3" fill="#d05a20" opacity="0.75"/><rect x="1123.0" y="897.8" width="2" height="2" fill="#d05a20" opacity="0.75"/><rect x="1167.0" y="908.2" width="3" height="1.5" fill="#d05a20" opacity="0.75"/><rect x="1162.5" y="898.7" width="3" height="1.5" fill="#d05a20" opacity="0.75"/><rect x="1168.3" y="926.4" width="3" height="3" fill="#d05a20" opacity="0.75"/><rect x="1134.5" y="925.6" width="2" height="1.5" fill="#d05a20" opacity="0.75"/><rect x="1122.0" y="886.6" width="2" height="1.5" fill="#d05a20" opacity="0.75"/><rect x="1177.9" y="885.2" width="2" height="2" fill="#d05a20" opacity="0.75"/><rect x="1142.7" y="904.8" width="2" height="1.5" fill="#d05a20" opacity="0.75"/><rect x="1124.6" y="884.1" width="2" height="1.5" fill="#d05a20" opacity="0.75"/><rect x="1153.8" y="921.3" width="2" height="3" fill="#d05a20" opacity="0.75"/><rect x="1137.5" y="914.4" width="3" height="3" fill="#d05a20" opacity="0.75"/><rect x="1172.1" y="919.6" width="1.5" height="3" fill="#d05a20" opacity="0.75"/><rect x="1142.5" y="917.2" width="2" height="3" fill="#d05a20" opacity="0.75"/><rect x="1176.3" y="925.2" width="3" height="2" fill="#d05a20" opacity="0.75"/><rect x="1137.3" y="923.4" width="2" height="1.5" fill="#d05a20" opacity="0.75"/><rect x="1172.4" y="894.0" width="2" height="2" fill="#d05a20" opacity="0.75"/><rect x="1125.6" y="907.1" width="2" height="2" fill="#d05a20" opacity="0.75"/><rect x="1160.2" y="897.4" width="1.5" height="1.5" fill="#d05a20" opacity="0.75"/><rect x="1175.1" y="909.4" width="2" height="2" fill="#d05a20" opacity="0.75"/><rect x="1122.0" y="913.5" width="1.5" height="3" fill="#d05a20" opacity="0.75"/><rect x="1125.3" y="887.1" width="2" height="2" fill="#d05a20" opacity="0.75"/><rect x="1173.8" y="925.9" width="2" height="3" fill="#d05a20" opacity="0.75"/><rect x="1170.1" y="914.0" width="1.5" height="2" fill="#d05a20" opacity="0.75"/><rect x="1134.7" y="926.3" width="2" height="2" fill="#d05a20" opacity="0.75"/><rect x="1164.5" y="893.7" width="1.5" height="2" fill="#d05a20" opacity="0.75"/><rect x="1144.7" y="883.6" width="3" height="1.5" fill="#d05a20" opacity="0.75"/><rect x="1162.1" y="928.5" width="2" height="1.5" fill="#d05a20" opacity="0.75"/><rect x="1135.0" y="892.0" width="2" height="1.5" fill="#d05a20" opacity="0.75"/><rect x="1156.9" y="903.2" width="2" height="3" fill="#d05a20" opacity="0.75"/><rect x="1132.1" y="925.6" width="1.5" height="1.5" fill="#d05a20" opacity="0.75"/><rect x="1144.8" y="883.0" width="1.5" height="3" fill="#d05a20" opacity="0.75"/><rect x="1144.7" y="902.7" width="3" height="3" fill="#d05a20" opacity="0.75"/><rect x="1136.8" y="928.6" width="2" height="1.5" fill="#d05a20" opacity="0.75"/><rect x="1171.4" y="929.1" width="3" height="2" fill="#d05a20" opacity="0.75"/><rect x="1118.7" y="892.5" width="2" height="3" fill="#d05a20" opacity="0.75"/><rect x="1139.4" y="917.6" width="2" height="3" fill="#d05a20" opacity="0.75"/><rect x="1132.1" y="905.5" width="2" height="3" fill="#d05a20" opacity="0.75"/><rect x="1169.9" y="909.8" width="3" height="1.5" fill="#d05a20" opacity="0.75"/><rect x="1123.7" y="909.3" width="2" height="2" fill="#d05a20" opacity="0.75"/><rect x="1167.5" y="908.2" width="3" height="2" fill="#d05a20" opacity="0.75"/><rect x="1146.2" y="919.5" width="3" height="1.5" fill="#d05a20" opacity="0.75"/><rect x="1149.6" y="888.4" width="3" height="2" fill="#d05a20" opacity="0.75"/><rect x="1158.8" y="907.4" width="3" height="1.5" fill="#d05a20" opacity="0.75"/><rect x="1174.0" y="902.7" width="2" height="2" fill="#d05a20" opacity="0.75"/><rect x="1159.4" y="901.3" width="1.5" height="1.5" fill="#d05a20" opacity="0.75"/><rect x="1167.3" y="921.1" width="2" height="3" fill="#d05a20" opacity="0.75"/><rect x="1165.3" y="920.2" width="3" height="3" fill="#d05a20" opacity="0.75"/><rect x="1139.2" y="918.8" width="2" height="1.5" fill="#d05a20" opacity="0.75"/><rect x="1175.8" y="910.4" width="2" height="1.5" fill="#d05a20" opacity="0.75"/><rect x="1175.1" y="892.4" width="2" height="2" fill="#d05a20" opacity="0.75"/><rect x="1146.8" y="908.7" width="2" height="1.5" fill="#d05a20" opacity="0.75"/><rect x="1176.0" y="882.6" width="2" height="3" fill="#d05a20" opacity="0.75"/><rect x="1159.4" y="900.9" width="2" height="2" fill="#d05a20" opacity="0.75"/><rect x="1161.6" y="889.7" width="3" height="3" fill="#d05a20" opacity="0.75"/><rect x="1123.8" y="921.9" width="2" height="3" fill="#d05a20" opacity="0.75"/><rect x="1120.4" y="893.8" width="2" height="1.5" fill="#d05a20" opacity="0.75"/><rect x="1148.6" y="925.4" width="2" height="2" fill="#d05a20" opacity="0.75"/><rect x="1172.7" y="916.8" width="2" height="2" fill="#d05a20" opacity="0.75"/><rect x="1148.7" y="885.0" width="2" height="1.5" fill="#d05a20" opacity="0.75"/><rect x="1155.1" y="888.7" width="2" height="2" fill="#d05a20" opacity="0.75"/><rect x="1168.9" y="899.1" width="1.5" height="1.5" fill="#d05a20" opacity="0.75"/><rect x="1167.2" y="929.0" width="2" height="1.5" fill="#d05a20" opacity="0.75"/><rect x="1150.6" y="914.6" width="2" height="3" fill="#d05a20" opacity="0.75"/><rect x="1132.5" y="915.9" width="2" height="2" fill="#d05a20" opacity="0.75"/><rect x="1133.0" y="886.8" width="2" height="1.5" fill="#d05a20" opacity="0.75"/><rect x="1158.5" y="882.9" width="3" height="3" fill="#d05a20" opacity="0.75"/><rect x="1154.9" y="914.6" width="2" height="2" fill="#d05a20" opacity="0.75"/><rect x="1175.1" y="916.7" width="1.5" height="1.5" fill="#d05a20" opacity="0.75"/><rect x="1173.8" y="899.3" width="2" height="1.5" fill="#d05a20" opacity="0.75"/><rect x="1137.4" y="919.0" width="2" height="3" fill="#d05a20" opacity="0.75"/><rect x="1156.8" y="901.1" width="1.5" height="2" fill="#d05a20" opacity="0.75"/><rect x="1160.0" y="928.8" width="3" height="2" fill="#d05a20" opacity="0.75"/><rect x="1118.1" y="924.4" width="1.5" height="2" fill="#d05a20" opacity="0.75"/><rect x="1165.5" y="891.8" width="1.5" height="2" fill="#d05a20" opacity="0.75"/><rect x="1137.8" y="908.3" width="2" height="1.5" fill="#d05a20" opacity="0.75"/><rect x="1162.3" y="924.7" width="3" height="3" fill="#d05a20" opacity="0.75"/><rect x="1135.2" y="927.4" width="2" height="1.5" fill="#d05a20" opacity="0.75"/><rect x="1162.6" y="883.7" width="1.5" height="1.5" fill="#d05a20" opacity="0.75"/><rect x="1128.2" y="909.7" width="1.5" height="1.5" fill="#d05a20" opacity="0.75"/><rect x="1170.5" y="899.8" width="2" height="1.5" fill="#d05a20" opacity="0.75"/><rect x="1153.0" y="909.1" width="1.5" height="2" fill="#d05a20" opacity="0.75"/><rect x="1131.7" y="893.5" width="2" height="1.5" fill="#d05a20" opacity="0.75"/><rect x="1148.5" y="911.8" width="2" height="3" fill="#d05a20" opacity="0.75"/><rect x="1161.0" y="902.5" width="3" height="1.5" fill="#d05a20" opacity="0.75"/><rect x="1161.3" y="892.1" width="1.5" height="3" fill="#d05a20" opacity="0.75"/><rect x="1148.2" y="898.5" width="2" height="3" fill="#d05a20" opacity="0.75"/><rect x="1153.8" y="884.5" width="2" height="1.5" fill="#d05a20" opacity="0.75"/><rect x="1165.4" y="880.8" width="1.5" height="3" fill="#d05a20" opacity="0.75"/><rect x="1149.9" y="894.3" width="3" height="2" fill="#d05a20" opacity="0.75"/><rect x="1118.6" y="894.4" width="2" height="2" fill="#d05a20" opacity="0.75"/><rect x="1162.9" y="902.2" width="2" height="3" fill="#d05a20" opacity="0.75"/><rect x="1159.8" y="916.7" width="3" height="1.5" fill="#d05a20" opacity="0.75"/><rect x="1163.8" y="887.2" width="2" height="2" fill="#d05a20" opacity="0.75"/><rect x="1149.4" y="904.5" width="2" height="2" fill="#d05a20" opacity="0.75"/><rect x="1153.7" y="927.4" width="1.5" height="2" fill="#d05a20" opacity="0.75"/><rect x="1122.7" y="892.3" width="3" height="1.5" fill="#d05a20" opacity="0.75"/><rect x="1161.0" y="880.9" width="1.5" height="1.5" fill="#d05a20" opacity="0.75"/><rect x="1170.0" y="883.4" width="3" height="3" fill="#d05a20" opacity="0.75"/><rect x="1173.7" y="884.7" width="2" height="1.5" fill="#d05a20" opacity="0.75"/><rect x="1137.0" y="896.7" width="2" height="3" fill="#d05a20" opacity="0.75"/><rect x="1132.4" y="906.7" width="2" height="1.5" fill="#d05a20" opacity="0.75"/><rect x="1150.7" y="914.0" width="2" height="2" fill="#d05a20" opacity="0.75"/><rect x="1154.1" y="908.7" width="3" height="1.5" fill="#d05a20" opacity="0.75"/><rect x="1128.4" y="896.2" width="2" height="3" fill="#d05a20" opacity="0.75"/><rect x="1136.9" y="884.0" width="1.5" height="1.5" fill="#d05a20" opacity="0.75"/><rect x="1164.0" y="917.6" width="2" height="1.5" fill="#d05a20" opacity="0.75"/><rect x="1174.3" y="903.3" width="2" height="3" fill="#d05a20" opacity="0.75"/><rect x="1150.8" y="901.2" width="2" height="2" fill="#d05a20" opacity="0.75"/><rect x="1152.1" y="912.6" width="1.5" height="2" fill="#d05a20" opacity="0.75"/><rect x="1147.0" y="909.0" width="1.5" height="2" fill="#d05a20" opacity="0.75"/><rect x="1152.4" y="925.8" width="3" height="2" fill="#d05a20" opacity="0.75"/><rect x="1158.0" y="915.5" width="3" height="1.5" fill="#d05a20" opacity="0.75"/><rect x="1154.8" y="884.7" width="2" height="1.5" fill="#d05a20" opacity="0.75"/><rect x="1121.2" y="904.4" width="1.5" height="2" fill="#d05a20" opacity="0.75"/><rect x="1139.0" y="904.2" width="3" height="3" fill="#d05a20" opacity="0.75"/><rect x="1121.9" y="891.9" width="2" height="2" fill="#d05a20" opacity="0.75"/><rect x="1154.9" y="924.4" width="2" height="1.5" fill="#d05a20" opacity="0.75"/><rect x="1132.4" y="886.8" width="3" height="2" fill="#d05a20" opacity="0.75"/><rect x="1123.2" y="904.2" width="2" height="1.5" fill="#d05a20" opacity="0.75"/><rect x="1125.0" y="890.5" width="3" height="3" fill="#d05a20" opacity="0.75"/><rect x="1141.7" y="926.0" width="2" height="1.5" fill="#d05a20" opacity="0.75"/><rect x="1161.3" y="927.0" width="3" height="1.5" fill="#d05a20" opacity="0.75"/><rect x="1173.2" y="902.1" width="1.5" height="3" fill="#d05a20" opacity="0.75"/><rect x="1142.4" y="901.2" width="3" height="1.5" fill="#d05a20" opacity="0.75"/><rect x="1139.8" y="913.2" width="2" height="3" fill="#d05a20" opacity="0.75"/><rect x="1160.8" y="904.1" width="2" height="2" fill="#d05a20" opacity="0.75"/><rect x="1140.4" y="900.5" width="1.5" height="3" fill="#d05a20" opacity="0.75"/><rect x="1143.3" y="882.1" width="2" height="3" fill="#d05a20" opacity="0.75"/><rect x="1145.4" y="909.2" width="2" height="2" fill="#d05a20" opacity="0.75"/><rect x="1175.3" y="913.1" width="2" height="3" fill="#d05a20" opacity="0.75"/><rect x="1131.3" y="886.7" width="3" height="1.5" fill="#d05a20" opacity="0.75"/><rect x="1139.8" y="911.8" width="2" height="2" fill="#d05a20" opacity="0.75"/><rect x="1125.5" y="880.2" width="2" height="1.5" fill="#d05a20" opacity="0.75"/><rect x="1148.1" y="886.3" width="2" height="1.5" fill="#d05a20" opacity="0.75"/><rect x="1150.0" y="903.5" width="1.5" height="1.5" fill="#d05a20" opacity="0.75"/><rect x="1164.2" y="920.9" width="2" height="2" fill="#d05a20" opacity="0.75"/><rect x="1122.5" y="891.5" width="1.5" height="1.5" fill="#d05a20" opacity="0.75"/><rect x="1151.6" y="884.4" width="2" height="1.5" fill="#d05a20" opacity="0.75"/><rect x="1174.7" y="919.5" width="2" height="2" fill="#d05a20" opacity="0.75"/><rect x="1145.2" y="884.7" width="2" height="1.5" fill="#d05a20" opacity="0.75"/><rect x="1162.0" y="928.2" width="2" height="2" fill="#d05a20" opacity="0.75"/><rect x="1131.3" y="880.6" width="2" height="3" fill="#d05a20" opacity="0.75"/><rect x="1157.5" y="902.3" width="2" height="2" fill="#d05a20" opacity="0.75"/><rect x="1135.8" y="888.8" width="3" height="3" fill="#d05a20" opacity="0.75"/><rect x="1130.4" y="892.0" width="2" height="1.5" fill="#d05a20" opacity="0.75"/><rect x="1136.4" y="885.4" width="2" height="1.5" fill="#d05a20" opacity="0.75"/><rect x="1150.7" y="923.1" width="2" height="2" fill="#d05a20" opacity="0.75"/><rect x="1164.9" y="908.1" width="1.5" height="2" fill="#d05a20" opacity="0.75"/><rect x="1132.9" y="911.6" width="2" height="2" fill="#d05a20" opacity="0.75"/><rect x="1139.5" y="920.5" width="2" height="2" fill="#d05a20" opacity="0.75"/><rect x="1118.6" y="882.7" width="1.5" height="3" fill="#d05a20" opacity="0.75"/><rect x="1162.3" y="882.5" width="1.5" height="1.5" fill="#d05a20" opacity="0.75"/><rect x="1123.4" y="883.0" width="2" height="2" fill="#d05a20" opacity="0.75"/><rect x="1137.7" y="928.7" width="2" height="1.5" fill="#e07030" opacity="0.75"/><rect x="1151.7" y="932.5" width="3" height="3" fill="#e07030" opacity="0.75"/><rect x="1160.6" y="928.7" width="1.5" height="1.5" fill="#e07030" opacity="0.75"/><rect x="1152.5" y="933.3" width="2" height="3" fill="#e07030" opacity="0.75"/><rect x="1150.9" y="925.9" width="3" height="3" fill="#e07030" opacity="0.75"/><rect x="1153.6" y="936.8" width="2" height="2" fill="#e07030" opacity="0.75"/><rect x="1149.9" y="930.7" width="2" height="3" fill="#e07030" opacity="0.75"/><rect x="1130.2" y="931.2" width="1.5" height="2" fill="#e07030" opacity="0.75"/><rect x="1141.8" y="930.4" width="1.5" height="3" fill="#e07030" opacity="0.75"/><rect x="1138.3" y="935.5" width="1.5" height="3" fill="#e07030" opacity="0.75"/><rect x="1145.4" y="927.5" width="2" height="2" fill="#e07030" opacity="0.75"/><rect x="1146.1" y="933.1" width="2" height="3" fill="#e07030" opacity="0.75"/><rect x="1138.1" y="932.5" width="2" height="3" fill="#e07030" opacity="0.75"/><rect x="1129.9" y="932.9" width="1.5" height="1.5" fill="#e07030" opacity="0.75"/><rect x="1155.5" y="932.1" width="2" height="2" fill="#e07030" opacity="0.75"/><rect x="1153.5" y="933.1" width="2" height="3" fill="#e07030" opacity="0.75"/><rect x="1128.1" y="931.5" width="2" height="1.5" fill="#e07030" opacity="0.75"/><rect x="1133.5" y="927.9" width="3" height="1.5" fill="#e07030" opacity="0.75"/><rect x="1133.4" y="928.9" width="2" height="3" fill="#e07030" opacity="0.75"/><rect x="1140.1" y="931.8" width="2" height="1.5" fill="#e07030" opacity="0.75"/><rect x="1138.6" y="938.8" width="2" height="1.5" fill="#e07030" opacity="0.75"/><rect x="1162.9" y="935.7" width="1.5" height="1.5" fill="#e07030" opacity="0.75"/><rect x="1132.9" y="935.6" width="1.5" height="3" fill="#e07030" opacity="0.75"/><rect x="1131.0" y="928.0" width="3" height="2" fill="#e07030" opacity="0.75"/><rect x="1132.0" y="930.8" width="2" height="3" fill="#e07030" opacity="0.75"/><rect x="1148.6" y="928.8" width="1.5" height="3" fill="#e07030" opacity="0.75"/><ellipse cx="1148" cy="870" rx="27.5" ry="13" fill="url(#hl)"/></svg><div class="t " style="left:950.80px;top:290.09px;font-size:22px;transform:scaleX(0.9855);transform-origin:0 0;color:#111;font-family:'Liberation Sans',sans-serif;">CCNB2</div><div class="t " style="left:1270.80px;top:387.09px;font-size:22px;transform:scaleX(1.0257);transform-origin:0 0;color:#111;font-family:'Liberation Sans',sans-serif;">CCNA1</div><div class="t " style="left:813.80px;top:444.09px;font-size:22px;transform:scaleX(1.0658);transform-origin:0 0;color:#111;font-family:'Liberation Sans',sans-serif;">CDC25B</div><div class="t " style="left:1015.80px;top:485.09px;font-size:22px;transform:scaleX(1.0470);transform-origin:0 0;color:#111;font-family:'Liberation Sans',sans-serif;">CDK1</div><div class="t " style="left:1310.80px;top:550.09px;font-size:22px;transform:scaleX(1.0425);transform-origin:0 0;color:#111;font-family:'Liberation Sans',sans-serif;">CDC6</div><div class="t " style="left:1501.80px;top:609.09px;font-size:22px;transform:scaleX(0.9699);transform-origin:0 0;color:#111;font-family:'Liberation Sans',sans-serif;">RB1</div><div class="t " style="left:836.80px;top:641.09px;font-size:22px;color:#111;font-family:'Liberation Sans',sans-serif;">CCNB1</div><div class="t " style="left:1104.80px;top:674.09px;font-size:22px;transform:scaleX(1.0257);transform-origin:0 0;color:#111;font-family:'Liberation Sans',sans-serif;">CCNA2</div><div class="t " style="left:1459.80px;top:759.09px;font-size:22px;transform:scaleX(1.0692);transform-origin:0 0;color:#111;font-family:'Liberation Sans',sans-serif;">CDKN1A</div><div class="t " style="left:843.80px;top:795.09px;font-size:22px;transform:scaleX(1.0698);transform-origin:0 0;color:#111;font-family:'Liberation Sans',sans-serif;">HIST1H1A</div><div class="t " style="left:1194.80px;top:841.09px;font-size:22px;color:#111;font-family:'Liberation Sans',sans-serif;">CCNE1</div><div class="r" style="left:630px;top:1146px;width:1031px;height:59px;background:#eeeeee;border-top:2px solid #cfcfcf;border-bottom:2px solid #cfcfcf;"></div><svg class="r" style="left:0px;top:0px;pointer-events:none;" width="2322" height="1754" viewBox="0 0 2322 1754"><rect x="652" y="1157.0" width="12" height="10" rx="3" fill="#000"/><rect x="652" y="1169.5" width="12" height="10" rx="3" fill="#000"/><rect x="652" y="1182.0" width="12" height="10" rx="3" fill="#000"/><rect x="668" y="1157.0" width="12" height="10" rx="3" fill="#000"/><rect x="668" y="1169.5" width="12" height="10" rx="3" fill="#000"/><rect x="668" y="1182.0" width="12" height="10" rx="3" fill="#000"/><rect x="684" y="1157.0" width="12" height="10" rx="3" fill="#000"/><rect x="684" y="1169.5" width="12" height="10" rx="3" fill="#000"/><rect x="684" y="1182.0" width="12" height="10" rx="3" fill="#000"/></svg><svg class="r" style="left:716px;top:1157px;" width="38" height="38" viewBox="0 0 38 38"><rect width="38" height="38" rx="7.6000000000000005" fill="#8a8a8c"/><g fill="#fff" stroke="#fff"><line x1="12.4032" y1="19.0" x2="25.5968" y2="12.4032" stroke-width="3.7696"/><line x1="12.4032" y1="19.0" x2="25.5968" y2="25.5968" stroke-width="3.7696"/><circle cx="12.4032" cy="19.0" r="5.183199999999999" stroke="none"/><circle cx="25.5968" cy="12.4032" r="5.183199999999999" stroke="none"/><circle cx="25.5968" cy="25.5968" r="5.183199999999999" stroke="none"/></g></svg><svg class="r" style="left:822px;top:1157px;" width="38" height="38" viewBox="0 0 38 38"><rect width="38" height="38" rx="8" fill="#000"/><path d="M9 29L27 11M15 10H28V23" fill="none" stroke="#fff" stroke-width="5"/></svg><div class="r" style="left:786px;top:1152px;width:2px;height:49px;background:#d2d2d2;"></div><div class="r" style="left:892px;top:1152px;width:2px;height:49px;background:#d2d2d2;"></div><div class="t " style="left:917.20px;top:1163.27px;font-size:22.8px;transform:scaleX(1.0499);transform-origin:0 0;color:#000;font-family:'Liberation Sans',sans-serif;">String Network – cdk1</div><div class="r" style="left:1344px;top:1152px;width:2px;height:49px;background:#d2d2d2;"></div><svg class="r" style="left:1370px;top:1165px;" width="20" height="21" viewBox="0 0 20 21"><rect width="20" height="21" rx="4" fill="#5b9ac4"/><path d="M4 11L8.5 15L16 6" fill="none" stroke="#fff" stroke-width="3"/></svg><div class="t " style="left:1402.60px;top:1163.27px;font-size:22.8px;transform:scaleX(1.0034);transform-origin:0 0;color:#8a8a8a;font-family:'Liberation Sans',sans-serif;">1 – 0</div><div class="r" style="left:1463px;top:1159px;width:2px;height:30px;background:#d2d2d2;"></div><svg class="r" style="left:1478px;top:1162px;" width="34" height="26" viewBox="0 0 34 26"><path d="M2 13Q17 -1 32 13Q17 27 2 13Z" fill="none" stroke="#8a8a8a" stroke-width="2.5"/><path d="M23 2L12 25" stroke="#8a8a8a" stroke-width="3.5"/><path d="M10 9Q15 5 21 6L13 20Q9 15 10 9Z" fill="#8a8a8a"/></svg><div class="t " style="left:1521.60px;top:1163.27px;font-size:22.8px;transform:scaleX(1.0290);transform-origin:0 0;color:#8a8a8a;font-family:'Liberation Sans',sans-serif;">0 – 0</div><div class="r" style="left:1596px;top:1152px;width:2px;height:49px;background:#d2d2d2;"></div><svg class="r" style="left:1609px;top:1154px;" width="40" height="40" viewBox="0 0 40 40"><circle cx="20" cy="20" r="13" fill="none" stroke="#000" stroke-width="4"/><path d="M20 1V11M20 29V39M1 20H11M29 20H39" stroke="#000" stroke-width="7"/></svg><div class="r" style="left:1661px;top:126px;width:2px;height:1079px;background:#cfcfcf;"></div><div class="r" style="left:1662px;top:656px;width:18px;height:20px;background:#fcfcfc;border-top:1px solid #d6d6d6;border-bottom:1px solid #d6d6d6;"></div><div class="r" style="left:1665px;top:660px;width:12px;height:12px;border-radius:50%;background:radial-gradient(circle at 50% 40%,#d8d8d8,#bdbdbd);"></div><div class="r" style="left:628px;top:1205px;width:1694px;height:18px;background:linear-gradient(#fefefe,#fafafa);"></div><div class="r" style="left:1468px;top:1209px;width:12px;height:12px;border-radius:50%;background:radial-gradient(circle at 50% 40%,#d8d8d8,#bdbdbd);"></div><div class="t " style="left:1706.10px;top:131.63px;font-size:22.4px;transform:scaleX(1.0137);transform-origin:0 0;color:#000;font-family:'Liberation Sans',sans-serif;">Results Panel</div><svg class="r" style="left:2201px;top:139px;" width="18" height="10" viewBox="0 0 18 10"><path d="M0 0H18L9 10Z" fill="#000"/></svg><div class="r" style="left:2248px;top:135px;width:19px;height:19px;border:2px solid #000;border-radius:3px;"></div><svg class="r" style="left:2281px;top:136px;" width="18" height="18" viewBox="0 0 18 18"><path d="M2 2L16 16M16 2L2 16" stroke="#000" stroke-width="4.5"/></svg><div class="r" style="left:1696px;top:194px;width:609px;height:989px;background:#e4e4e4;border-radius:8px;border:1px solid #dcdcdc;"></div><div class="r" style="left:1945px;top:170px;width:110px;height:40px;background:linear-gradient(#b9b8bd,#8e8d92);border-radius:7px;box-shadow:0 1px 1px rgba(0,0,0,0.25);"></div><div class="t " style="left:1963.30px;top:176.26px;font-size:27px;transform:scaleX(1.0586);transform-origin:0 0;color:#fff;font-family:'Liberation Sans',sans-serif;text-shadow:0 1.5px 1px rgba(0,0,0,0.45);">String</div><div class="r" style="left:1702px;top:228px;width:597px;height:83px;background:#eeeeee;border:2px solid #9a9a9a;box-shadow:inset 1px 1px 0 #fff;"></div><div class="r" style="left:1780px;top:249px;width:195px;height:39px;background:#fff;border-radius:6px;box-shadow:0 0.5px 1.5px rgba(0,0,0,0.45);"></div><div class="t " style="left:1810.40px;top:254.17px;font-size:27px;transform:scaleX(1.0410);transform-origin:0 0;color:#000;font-family:'Liberation Sans',sans-serif;">Expand All</div><div class="r" style="left:2012px;top:249px;width:211px;height:39px;background:#fff;border-radius:6px;box-shadow:0 0.5px 1.5px rgba(0,0,0,0.45);"></div><div class="t " style="left:2042.00px;top:254.17px;font-size:27px;transform:scaleX(1.0562);transform-origin:0 0;color:#000;font-family:'Liberation Sans',sans-serif;">Collapse All</div><div class="r" style="left:1702px;top:315px;width:600px;height:862px;background:#eeeeee;border:2px solid #8a8a8a;"></div><svg class="r" style="left:1770px;top:338px;" width="20" height="12" viewBox="0 0 20 12"><path d="M0 0H20L10 12Z" fill="#000"/></svg><div class="t " style="left:1856.00px;top:332.24px;font-size:28.8px;transform:scaleX(1.0104);transform-origin:0 0;color:#000;font-family:'Liberation Sans',sans-serif;font-weight:bold;">CDK1</div><div class="r" style="left:1706px;top:376px;width:589px;height:772px;background:#eeeeee;border:2px solid #9a9a9a;box-shadow:inset 2px 2px 0 #fff;"></div><div class="t " style="left:1740.10px;top:381.20px;font-size:27.4px;transform:scaleX(1.0387);transform-origin:0 0;color:#000;font-family:'Liberation Sans',sans-serif;">cyclin–dependent kinase 1</div><svg class="r" style="left:0px;top:0px;pointer-events:none;" width="2322" height="1754" viewBox="0 0 2322 1754"><path d="M1933 542 Q1928 505 1950 492 L1965 488" fill="none" stroke="#d86060" stroke-width="1.6" stroke-linecap="round" stroke-linejoin="round" opacity="1"/><path d="M1895 585 L1875 585 L1860 602" fill="none" stroke="#d08070" stroke-width="1.6" stroke-linecap="round" stroke-linejoin="round" opacity="1"/><path d="M1790 652 Q1800 690 1797 700 L1783 706 Q1800 705 1807 700" fill="none" stroke="#c09060" stroke-width="1.8" stroke-linecap="round" stroke-linejoin="round" opacity="1"/><path d="M1765 648 L1810 650" fill="none" stroke="#c8c0a0" stroke-width="2" stroke-linecap="round" stroke-linejoin="round" opacity="1"/><path d="M1845 647 L1900 660 L1925 670 Q1950 690 1945 700" fill="none" stroke="#70c070" stroke-width="1.8" stroke-linecap="round" stroke-linejoin="round" opacity="1"/><path d="M1835 680 Q1825 700 1835 705" fill="none" stroke="#60c060" stroke-width="1.6" stroke-linecap="round" stroke-linejoin="round" opacity="1"/><path d="M1875 712 Q1895 722 1905 705 L1910 690" fill="none" stroke="#90b070" stroke-width="1.8" stroke-linecap="round" stroke-linejoin="round" opacity="1"/><path d="M1995 560 Q2040 560 2048 585 Q2045 610 2030 625" fill="none" stroke="#70d0a0" stroke-width="1.8" stroke-linecap="round" stroke-linejoin="round" opacity="1"/><path d="M1955 728 Q1975 755 1965 765 Q1955 775 1972 785" fill="none" stroke="#5070c0" stroke-width="1.8" stroke-linecap="round" stroke-linejoin="round" opacity="1"/><path d="M2005 708 Q1985 712 1995 728 Q2005 735 2020 728" fill="none" stroke="#6060c0" stroke-width="1.6" stroke-linecap="round" stroke-linejoin="round" opacity="1"/><path d="M2020 760 L2015 770" fill="none" stroke="#103090" stroke-width="3" stroke-linecap="round" stroke-linejoin="round" opacity="1"/><path d="M1898 512 L1918 510 L1922 528 L1905 532" fill="none" stroke="#c20a0a" stroke-width="13" stroke-linecap="round" stroke-linejoin="round" opacity="1"/><path d="M1935 515 L1940 530 L1928 535" fill="none" stroke="#a00808" stroke-width="7" stroke-linecap="round" stroke-linejoin="round" opacity="1"/><path d="M1895 540 L1912 548 L1902 560" fill="none" stroke="#a0400c" stroke-width="12" stroke-linecap="round" stroke-linejoin="round" opacity="1"/><path d="M1880 560 L1905 568 L1890 580" fill="none" stroke="#8a3a0a" stroke-width="12" stroke-linecap="round" stroke-linejoin="round" opacity="1"/><path d="M1870 578 L1888 590 L1880 605" fill="none" stroke="#a04810" stroke-width="10" stroke-linecap="round" stroke-linejoin="round" opacity="1"/><path d="M1888 575 L1898 605" fill="none" stroke="#d07020" stroke-width="10" stroke-linecap="round" stroke-linejoin="round" opacity="1"/><path d="M1830 595 L1842 612" fill="none" stroke="#d02a10" stroke-width="11" stroke-linecap="round" stroke-linejoin="round" opacity="1"/><path d="M1858 604 L1872 610" fill="none" stroke="#902810" stroke-width="8" stroke-linecap="round" stroke-linejoin="round" opacity="1"/><path d="M1812 652 L1840 622" fill="none" stroke="#c06a10" stroke-width="10" stroke-linecap="round" stroke-linejoin="round" opacity="1"/><path d="M1822 650 L1848 628" fill="none" stroke="#c8b818" stroke-width="9" stroke-linecap="round" stroke-linejoin="round" opacity="1"/><path d="M1772 622 Q1760 640 1775 650" fill="none" stroke="#d8c020" stroke-width="8" stroke-linecap="round" stroke-linejoin="round" opacity="1"/><path d="M1768 622 Q1785 612 1792 622" fill="none" stroke="#c8b030" stroke-width="5" stroke-linecap="round" stroke-linejoin="round" opacity="1"/><path d="M1778 660 L1792 672 L1782 688" fill="none" stroke="#c09010" stroke-width="11" stroke-linecap="round" stroke-linejoin="round" opacity="1"/><path d="M1776 682 L1790 690" fill="none" stroke="#d8a818" stroke-width="7" stroke-linecap="round" stroke-linejoin="round" opacity="1"/><path d="M1842 652 L1866 662" fill="none" stroke="#a8a010" stroke-width="11" stroke-linecap="round" stroke-linejoin="round" opacity="1"/><path d="M1836 690 L1852 700" fill="none" stroke="#50b818" stroke-width="11" stroke-linecap="round" stroke-linejoin="round" opacity="1"/><path d="M1855 675 L1868 698" fill="none" stroke="#909010" stroke-width="11" stroke-linecap="round" stroke-linejoin="round" opacity="1"/><path d="M1856 708 L1876 716" fill="none" stroke="#b8b818" stroke-width="10" stroke-linecap="round" stroke-linejoin="round" opacity="1"/><path d="M1912 670 L1918 697" fill="none" stroke="#30b820" stroke-width="9" stroke-linecap="round" stroke-linejoin="round" opacity="1"/><path d="M1878 635 Q1890 615 1900 635 Q1910 615 1920 635 Q1930 615 1940 632" fill="none" stroke="#5a9010" stroke-width="8" stroke-linecap="round" stroke-linejoin="round" opacity="1"/><path d="M1880 618 Q1892 600 1902 618 Q1912 598 1922 614" fill="none" stroke="#6a8a10" stroke-width="6" stroke-linecap="round" stroke-linejoin="round" opacity="1"/><path d="M1905 595 Q1915 570 1930 588 Q1945 565 1958 582 Q1972 560 1985 572 Q1995 552 2000 560" fill="none" stroke="#0a7a3a" stroke-width="9" stroke-linecap="round" stroke-linejoin="round" opacity="1"/><path d="M1915 585 Q1925 560 1942 575 Q1955 550 1970 565" fill="none" stroke="#108840" stroke-width="6" stroke-linecap="round" stroke-linejoin="round" opacity="1"/><path d="M1982 575 L1990 600" fill="none" stroke="#2aa8d8" stroke-width="11" stroke-linecap="round" stroke-linejoin="round" opacity="1"/><path d="M1984 650 L2030 578" fill="none" stroke="#0a9010" stroke-width="10" stroke-linecap="round" stroke-linejoin="round" opacity="1"/><path d="M2002 625 L2035 607" fill="none" stroke="#12b018" stroke-width="9" stroke-linecap="round" stroke-linejoin="round" opacity="1"/><path d="M1998 640 m-9 0 a9 9 0 1 0 18 0 a9 9 0 1 0 -18 0" fill="none" stroke="#1a8a70" stroke-width="4" stroke-linecap="round" stroke-linejoin="round" opacity="1"/><path d="M2036 640 L2033 700" fill="none" stroke="#0a6a60" stroke-width="10" stroke-linecap="round" stroke-linejoin="round" opacity="1"/><path d="M2036 705 L2040 735" fill="none" stroke="#18b8b8" stroke-width="7" stroke-linecap="round" stroke-linejoin="round" opacity="1"/><path d="M1950 630 L1972 646" fill="none" stroke="#2a8ad0" stroke-width="12" stroke-linecap="round" stroke-linejoin="round" opacity="1"/><path d="M1952 660 L1970 675" fill="none" stroke="#2a8ad0" stroke-width="12" stroke-linecap="round" stroke-linejoin="round" opacity="1"/><path d="M1946 695 L1965 715" fill="none" stroke="#2a80d0" stroke-width="11" stroke-linecap="round" stroke-linejoin="round" opacity="1"/><path d="M1975 778 L1990 772 L2005 790 L2015 780" fill="none" stroke="#2070c8" stroke-width="11" stroke-linecap="round" stroke-linejoin="round" opacity="1"/><path d="M2038 698 L2080 650 L2118 633" fill="none" stroke="#1848b8" stroke-width="10" stroke-linecap="round" stroke-linejoin="round" opacity="1"/><path d="M2052 705 L2090 672 L2125 658" fill="none" stroke="#0a38d0" stroke-width="10" stroke-linecap="round" stroke-linejoin="round" opacity="1"/><path d="M1998 706 L2070 703 Q2110 700 2110 682" fill="none" stroke="#0a10b8" stroke-width="9" stroke-linecap="round" stroke-linejoin="round" opacity="1"/><path d="M2010 727 L2040 712" fill="none" stroke="#102080" stroke-width="7" stroke-linecap="round" stroke-linejoin="round" opacity="1"/></svg><div class="t " style="left:1751.60px;top:861.05px;font-size:28px;color:#000;font-family:'Liberation Serif',serif;font-weight:bold;">CrossLinks</div><div class="t " style="left:1776.50px;top:900.85px;font-size:28px;color:#000;font-family:'Liberation Serif',serif;">Uniprot:</div><div class="t " style="left:1964.20px;top:900.85px;font-size:28px;color:#0000ee;font-family:'Liberation Serif',serif;">P06493</div><div class="r" style="left:1963px;top:928px;width:87px;height:2px;background:#0000ee;"></div><div class="t " style="left:1776.50px;top:946.75px;font-size:28px;color:#000;font-family:'Liberation Serif',serif;">GeneCard:</div><div class="t " style="left:1964.20px;top:946.75px;font-size:28px;color:#0000ee;font-family:'Liberation Serif',serif;">P06493</div><div class="r" style="left:1963px;top:974px;width:87px;height:2px;background:#0000ee;"></div><div class="t " style="left:1776.50px;top:992.65px;font-size:28px;color:#000;font-family:'Liberation Serif',serif;">Compartments:</div><div class="t " style="left:1964.20px;top:992.65px;font-size:28px;color:#0000ee;font-family:'Liberation Serif',serif;">9606.ENSP00000378699</div><div class="r" style="left:1963px;top:1020px;width:286px;height:2px;background:#0000ee;"></div><div class="t " style="left:1776.50px;top:1038.55px;font-size:28px;color:#000;font-family:'Liberation Serif',serif;">Tissues:</div><div class="t " style="left:1964.20px;top:1038.55px;font-size:28px;color:#0000ee;font-family:'Liberation Serif',serif;">9606.ENSP00000378699</div><div class="r" style="left:1963px;top:1066px;width:286px;height:2px;background:#0000ee;"></div><div class="t " style="left:1776.50px;top:1084.45px;font-size:28px;color:#000;font-family:'Liberation Serif',serif;">Pharos:</div><div class="t " style="left:1964.20px;top:1084.45px;font-size:28px;color:#0000ee;font-family:'Liberation Serif',serif;">P06493</div><div class="r" style="left:1963px;top:1111px;width:87px;height:2px;background:#0000ee;"></div><div class="t " style="left:653.00px;top:1229.84px;font-size:22.5px;transform:scaleX(1.0335);transform-origin:0 0;color:#000;font-family:'Liberation Sans',sans-serif;">Table Panel</div><svg class="r" style="left:2201px;top:1238px;" width="18" height="10" viewBox="0 0 18 10"><path d="M0 0H18L9 10Z" fill="#000"/></svg><div class="r" style="left:2248px;top:1234px;width:19px;height:19px;border:2px solid #000;border-radius:3px;"></div><svg class="r" style="left:2281px;top:1235px;" width="18" height="18" viewBox="0 0 18 18"><path d="M2 2L16 16M16 2L2 16" stroke="#000" stroke-width="4.5"/></svg><div class="r" style="left:645px;top:1274px;width:1660px;height:370px;background:#e4e4e4;border-radius:8px;border:1px solid #dcdcdc;"></div><svg class="r" style="left:676px;top:1298px;" width="31" height="31" viewBox="0 0 31 31"><path d="M26.32 12.76 L30.77 12.84 L30.77 18.16 L26.32 18.24 L25.09 21.21 L28.18 24.41 L24.41 28.18 L21.21 25.09 L18.24 26.32 L18.16 30.77 L12.84 30.77 L12.76 26.32 L9.79 25.09 L6.59 28.18 L2.82 24.41 L5.91 21.21 L4.68 18.24 L0.23 18.16 L0.23 12.84 L4.68 12.76 L5.91 9.79 L2.82 6.59 L6.59 2.82 L9.79 5.91 L12.76 4.68 L12.84 0.23 L18.16 0.23 L18.24 4.68 L21.21 5.91 L24.41 2.82 L28.18 6.59 L25.09 9.79Z" fill="#000"/><circle cx="15.5" cy="15.5" r="11.78" fill="#000"/><circle cx="15.5" cy="15.5" r="4.6499999999999995" fill="#e4e4e4"/></svg><svg class="r" style="left:746px;top:1294px;" width="41" height="38" viewBox="0 0 41 38"><rect x="2" y="2" width="37" height="34" rx="3" fill="none" stroke="#000" stroke-width="4"/><line x1="20.5" y1="2" x2="20.5" y2="36" stroke="#000" stroke-width="4"/></svg><svg class="r" style="left:824px;top:1294px;" width="35" height="34" viewBox="0 0 35 34"><path d="M17.5 3V31M3 17H32" stroke="#000" stroke-width="9" stroke-linecap="round"/></svg><svg class="r" style="left:900px;top:1294px;" width="35" height="38" viewBox="0 0 35 38"><path d="M11 5V2H24V5" fill="none" stroke="#000" stroke-width="3"/><path d="M1 7H34" stroke="#000" stroke-width="4"/><path d="M5 9L7 35H28L30 9" fill="none" stroke="#000" stroke-width="4"/><path d="M12 14V30M17.5 14V30M23 14V30" stroke="#000" stroke-width="3"/></svg><svg class="r" style="left:974px;top:1302px;" width="40" height="21" viewBox="0 0 40 21"><rect x="1" y="2" width="20" height="16" fill="none" stroke="#8a8a8a" stroke-width="2"/><path d="M1 7H21M1 12H21M8 2V18M14 2V18" stroke="#8a8a8a" stroke-width="1.5"/><circle cx="29" cy="10" r="10" fill="#8a8a8a"/><path d="M25 6L33 14M33 6L25 14" stroke="#fff" stroke-width="2.5"/></svg><div class="t " style="left:1040.80px;top:1291.14px;font-size:38px;transform:scaleX(1.0439);transform-origin:0 0;color:#8a8a8a;font-family:'Liberation Serif',serif;"><i>f</i>(<i>x</i>)</div><div class="r" style="left:650px;top:1362px;width:1652px;height:254px;background:#fff;border:2px solid #656565;border-bottom-color:#999;border-right-color:#999;"></div><div class="r" style="left:652px;top:1364px;width:1648px;height:48px;background:#f3f3f3;border-bottom:2px solid #dcdcdc;"></div><svg class="r" style="left:662px;top:1373px;" width="25" height="22" viewBox="0 0 25 22"><rect x="9" y="0" width="7" height="6" rx="1" fill="#7a7a7a"/><path d="M12.5 6V10M3.5 10H21.5M3.5 10V14M12.5 10V14M21.5 10V14" stroke="#7a7a7a" stroke-width="2"/><rect x="0" y="14" width="7" height="7" rx="1" fill="#7a7a7a"/><rect x="9" y="14" width="7" height="7" rx="1" fill="#7a7a7a"/><rect x="18" y="14" width="7" height="7" rx="1" fill="#7a7a7a"/></svg><div class="t " style="left:717.90px;top:1375.84px;font-size:22.5px;transform:scaleX(1.0580);transform-origin:0 0;color:#000;font-family:'Liberation Sans',sans-serif;">shared name</div><div class="r" style="left:921px;top:1370px;width:2px;height:36px;background:#d6d6d6;"></div><div class="t " style="left:962.10px;top:1375.84px;font-size:22.5px;transform:scaleX(1.0400);transform-origin:0 0;color:#000;font-family:'Liberation Sans',sans-serif;">name</div><div class="r" style="left:1085px;top:1370px;width:2px;height:36px;background:#d6d6d6;"></div><svg class="r" style="left:1094px;top:1373px;" width="25" height="22" viewBox="0 0 25 22"><rect x="9" y="0" width="7" height="6" rx="1" fill="#7a7a7a"/><path d="M12.5 6V10M3.5 10H21.5M3.5 10V14M12.5 10V14M21.5 10V14" stroke="#7a7a7a" stroke-width="2"/><rect x="0" y="14" width="7" height="7" rx="1" fill="#7a7a7a"/><rect x="9" y="14" width="7" height="7" rx="1" fill="#7a7a7a"/><rect x="18" y="14" width="7" height="7" rx="1" fill="#7a7a7a"/></svg><div class="t " style="left:1149.70px;top:1375.84px;font-size:22.5px;transform:scaleX(1.0602);transform-origin:0 0;color:#000;font-family:'Liberation Sans',sans-serif;">canonical name</div><div class="r" style="left:1381px;top:1370px;width:2px;height:36px;background:#d6d6d6;"></div><svg class="r" style="left:1390px;top:1373px;" width="25" height="22" viewBox="0 0 25 22"><rect x="9" y="0" width="7" height="6" rx="1" fill="#7a7a7a"/><path d="M12.5 6V10M3.5 10H21.5M3.5 10V14M12.5 10V14M21.5 10V14" stroke="#7a7a7a" stroke-width="2"/><rect x="0" y="14" width="7" height="7" rx="1" fill="#7a7a7a"/><rect x="9" y="14" width="7" height="7" rx="1" fill="#7a7a7a"/><rect x="18" y="14" width="7" height="7" rx="1" fill="#7a7a7a"/></svg><div class="t " style="left:1446.20px;top:1375.84px;font-size:22.5px;transform:scaleX(1.0726);transform-origin:0 0;color:#000;font-family:'Liberation Sans',sans-serif;">database identifier</div><div class="r" style="left:1709px;top:1370px;width:2px;height:36px;background:#d6d6d6;"></div><svg class="r" style="left:1718px;top:1373px;" width="25" height="22" viewBox="0 0 25 22"><rect x="9" y="0" width="7" height="6" rx="1" fill="#7a7a7a"/><path d="M12.5 6V10M3.5 10H21.5M3.5 10V14M12.5 10V14M21.5 10V14" stroke="#7a7a7a" stroke-width="2"/><rect x="0" y="14" width="7" height="7" rx="1" fill="#7a7a7a"/><rect x="9" y="14" width="7" height="7" rx="1" fill="#7a7a7a"/><rect x="18" y="14" width="7" height="7" rx="1" fill="#7a7a7a"/></svg><div class="t " style="left:1774.10px;top:1375.84px;font-size:22.5px;transform:scaleX(1.1169);transform-origin:0 0;color:#000;font-family:'Liberation Sans',sans-serif;">description</div><div class="r" style="left:1961px;top:1370px;width:2px;height:36px;background:#d6d6d6;"></div><svg class="r" style="left:1970px;top:1373px;" width="25" height="22" viewBox="0 0 25 22"><rect x="9" y="0" width="7" height="6" rx="1" fill="#7a7a7a"/><path d="M12.5 6V10M3.5 10H21.5M3.5 10V14M12.5 10V14M21.5 10V14" stroke="#7a7a7a" stroke-width="2"/><rect x="0" y="14" width="7" height="7" rx="1" fill="#7a7a7a"/><rect x="9" y="14" width="7" height="7" rx="1" fill="#7a7a7a"/><rect x="18" y="14" width="7" height="7" rx="1" fill="#7a7a7a"/></svg><div class="t " style="left:2025.30px;top:1375.84px;font-size:22.5px;transform:scaleX(0.9607);transform-origin:0 0;color:#000;font-family:'Liberation Sans',sans-serif;">@id</div><div class="r" style="left:2129px;top:1370px;width:2px;height:36px;background:#d6d6d6;"></div><svg class="r" style="left:2138px;top:1373px;" width="25" height="22" viewBox="0 0 25 22"><rect x="9" y="0" width="7" height="6" rx="1" fill="#7a7a7a"/><path d="M12.5 6V10M3.5 10H21.5M3.5 10V14M12.5 10V14M21.5 10V14" stroke="#7a7a7a" stroke-width="2"/><rect x="0" y="14" width="7" height="7" rx="1" fill="#7a7a7a"/><rect x="9" y="14" width="7" height="7" rx="1" fill="#7a7a7a"/><rect x="18" y="14" width="7" height="7" rx="1" fill="#7a7a7a"/></svg><div class="t " style="left:2195.10px;top:1375.84px;font-size:22.5px;color:#000;font-family:'Liberation Sans',sans-serif;">namespac</div><div class="t " style="left:669.40px;top:1413.54px;font-size:22.5px;transform:scaleX(1.0054);transform-origin:0 0;color:#000;font-family:'Liberation Sans',sans-serif;">CDK1</div><div class="t " style="left:937.70px;top:1413.54px;font-size:22.5px;transform:scaleX(1.0037);transform-origin:0 0;color:#000;font-family:'Liberation Sans',sans-serif;">CDK1</div><div class="t " style="left:1101.80px;top:1413.54px;font-size:22.5px;transform:scaleX(1.0512);transform-origin:0 0;color:#000;font-family:'Liberation Sans',sans-serif;">P06493</div><div class="t " style="left:1398.70px;top:1413.54px;font-size:22.5px;transform:scaleX(1.0495);transform-origin:0 0;color:#000;font-family:'Liberation Sans',sans-serif;">9606.ENSP00000378699</div><div class="t " style="left:1725.80px;top:1413.54px;font-size:22.5px;transform:scaleX(1.0618);transform-origin:0 0;color:#000;font-family:'Liberation Sans',sans-serif;">cyclin–dependent ...</div><div class="t " style="left:1978.10px;top:1413.54px;font-size:22.5px;transform:scaleX(1.1058);transform-origin:0 0;color:#000;font-family:'Liberation Sans',sans-serif;">stringdb:9...</div><div class="t " style="left:2146.20px;top:1413.54px;font-size:22.5px;transform:scaleX(1.1486);transform-origin:0 0;color:#000;font-family:'Liberation Sans',sans-serif;">stringdb</div><div class="r" style="left:652px;top:1585px;width:1648px;height:29px;background:#f8f8f8;border-top:2px solid #e8e8e8;"></div><div class="r" style="left:656px;top:1592px;width:180px;height:16px;background:#c1c1c1;border-radius:8px;"></div><div class="r" style="left:1181px;top:1634px;width:588px;height:40px;background:#fff;border-radius:7px;box-shadow:0 1px 1px rgba(0,0,0,0.25);"></div><div class="r" style="left:1181px;top:1634px;width:183px;height:40px;background:linear-gradient(#b9b8bd,#8e8d92);border-radius:7px 0 0 7px;"></div><div class="r" style="left:1546px;top:1636px;width:1px;height:37px;background:#d8d8d8;"></div><div class="t " style="left:1199.80px;top:1637.97px;font-size:27px;transform:scaleX(1.0509);transform-origin:0 0;color:#fff;font-family:'Liberation Sans',sans-serif;text-shadow:0 1.5px 1px rgba(0,0,0,0.45);">Node Table</div><div class="t " style="left:1388.10px;top:1637.97px;font-size:27px;transform:scaleX(1.0119);transform-origin:0 0;color:#000;font-family:'Liberation Sans',sans-serif;">Edge Table</div><div class="t " style="left:1569.50px;top:1637.97px;font-size:27px;transform:scaleX(1.0718);transform-origin:0 0;color:#000;font-family:'Liberation Sans',sans-serif;">Network Table</div><div class="r" style="left:3px;top:1684px;width:2319px;height:70px;background:#eeeeee;border-top:2px solid #d0d0d0;"></div><div class="r" style="left:22px;top:1698px;width:58px;height:41px;background:#f6f6f6;border:2px solid #b8b8b8;"></div><div class="r" style="left:108px;top:1698px;width:56px;height:41px;background:#f6f6f6;border:2px solid #b8b8b8;"></div><svg class="r" style="left:36px;top:1706px;" width="32" height="24" viewBox="0 0 32 24"><path d="M5 22Q0 22 0 16Q0 11 6 10Q7 2 15 2Q22 2 23 9Q25 6 28 8Q31 10 29 14Q32 16 31 19Q30 22 27 22Z" fill="#000"/></svg><svg class="r" style="left:121px;top:1704px;" width="30" height="28" viewBox="0 0 30 28"><path d="M15 1L29 26Q29 27 27 27H3Q1 27 1 26Z" fill="#e8911f" stroke="#e8911f" stroke-width="2" stroke-linejoin="round"/><rect x="13" y="9" width="4" height="9" fill="#fff"/><rect x="13" y="20" width="4" height="4" fill="#fff"/></svg><div class="r" style="left:2152px;top:1696px;width:150px;height:47px;background:#f6f6f6;border:2px solid #b0b0b0;"></div><div class="r" style="left:2168px;top:1708px;width:24px;height:24px;border-radius:50%;background:#0e8a36;"></div><div class="t " style="left:2201.80px;top:1707.43px;font-size:22.4px;transform:scaleX(1.0672);transform-origin:0 0;color:#000;font-family:'Liberation Sans',sans-serif;">Memory</div></body></html>
